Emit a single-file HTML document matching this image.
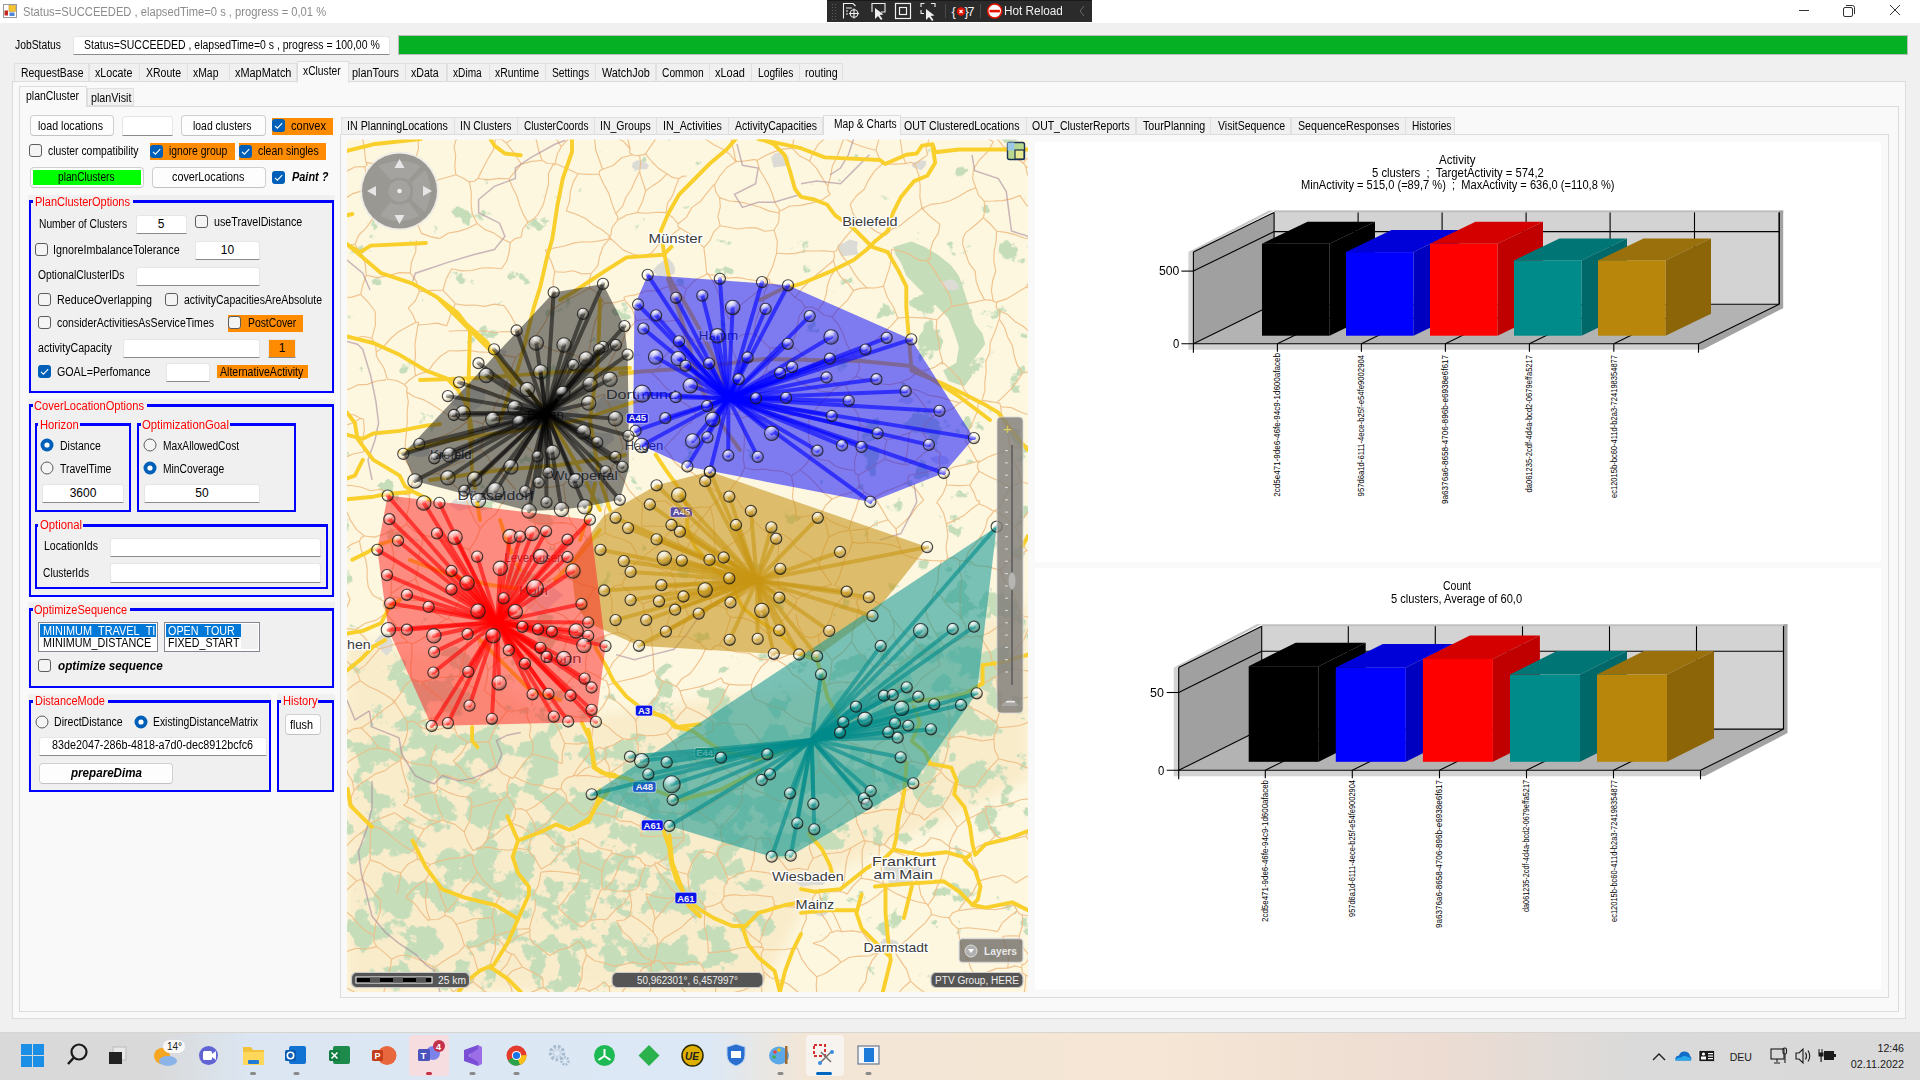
<!DOCTYPE html>
<html><head><meta charset="utf-8"><title>xCluster</title>
<style>
html,body{margin:0;padding:0;width:1920px;height:1080px;overflow:hidden;background:#f0f0f0;}
body{position:relative;font-family:"Liberation Sans",sans-serif;}
.t{position:absolute;white-space:pre;line-height:0;transform-origin:0 0;font-family:"Liberation Sans",sans-serif;}
</style></head><body>
<div style="position:absolute;left:0px;top:0px;width:1920px;height:23px;background:#fff"></div>
<svg style="position:absolute;left:3px;top:4px" width="14" height="14"><rect x="0.5" y="0.5" width="13" height="13" fill="#fff" stroke="#9a9a9a"/><rect x="6" y="1.5" width="6.5" height="6" fill="#f7c531" stroke="#c8961a" stroke-width="0.6"/><rect x="1.5" y="6.5" width="3.5" height="5" fill="#c0281e"/><rect x="6.5" y="8.5" width="5" height="3.5" fill="#4f86d8"/></svg>
<div class="t" style="left:23.00px;top:11.67px;font-size:12.5px;color:#8c8c8c;transform:scaleX(0.8943);">Status=SUCCEEDED , elapsedTime=0 s , progress = 0,01 %</div>
<div style="position:absolute;left:1799px;top:10px;width:10px;height:1px;background:#333"></div>
<svg style="position:absolute;left:1841px;top:3px" width="16" height="16"><rect x="2.5" y="4.5" width="9" height="9" rx="1.5" fill="none" stroke="#333"/><path d="M5 2.5 H11.5 Q13.5 2.5 13.5 4.5 V11" fill="none" stroke="#333"/></svg>
<svg style="position:absolute;left:1888px;top:3px" width="14" height="14"><path d="M2 2 L12 12 M12 2 L2 12" stroke="#333" stroke-width="1"/></svg>
<div style="position:absolute;left:827px;top:0px;width:265px;height:22px;background:#2b2b2b;border-top:1px solid #1a1a1a;box-sizing:border-box"></div>
<svg style="position:absolute;left:827px;top:0px" width="265" height="22"><g fill="#5a5a5a"><rect x="5" y="4" width="1" height="1"/><rect x="5" y="7" width="1" height="1"/><rect x="5" y="10" width="1" height="1"/><rect x="5" y="13" width="1" height="1"/><rect x="5" y="16" width="1" height="1"/><rect x="5" y="19" width="1" height="1"/><rect x="8" y="4" width="1" height="1"/><rect x="8" y="7" width="1" height="1"/><rect x="8" y="10" width="1" height="1"/><rect x="8" y="13" width="1" height="1"/><rect x="8" y="16" width="1" height="1"/><rect x="8" y="19" width="1" height="1"/></g><g stroke="#f0f0f0" fill="none" stroke-width="1.1"><path d="M16.5 18.5 V3.5 H26 L28.5 6"/><path d="M19 8 H25 M19 11 H21 M19 14 H21"/><circle cx="27" cy="13.5" r="3.8"/><path d="M27 8.5 V18.5 M22 13.5 H32"/></g><g stroke="#f0f0f0" fill="none" stroke-width="1.1"><path d="M45 12 V3.5 H58 V12 H54"/></g><path d="M48 8 L48 19 L51 16 L54 20 L55.5 19 L52.7 15 L56.5 14.5 Z" fill="#f0f0f0"/><g stroke="#f0f0f0" fill="none" stroke-width="1.2"><rect x="68.5" y="3.5" width="15" height="15"/><rect x="72.5" y="7.5" width="7" height="7"/></g><g stroke="#f0f0f0" fill="none" stroke-width="1.1"><path d="M94 7 V3.5 H97.5 M104 3.5 H108 V7 M94 10 V13.5 H97"/></g><path d="M99 9 L99 20 L102 17 L105 21 L106.5 20 L103.7 16 L107.5 15.5 Z" fill="#f0f0f0"/><rect x="118" y="4" width="1" height="14" fill="#4a4a4a"/><text x="124.5" y="16" font-family="Liberation Sans" font-size="13" fill="#f0f0f0">{</text><text x="137.5" y="16" font-family="Liberation Sans" font-size="13" fill="#f0f0f0">}</text><text x="140.5" y="16" font-family="Liberation Sans" font-size="12.5" fill="#f0f0f0">7</text><circle cx="134" cy="11.5" r="4.2" fill="#e51400"/><path d="M132.5 10 L135.5 13 M135.5 10 L132.5 13" stroke="#fff" stroke-width="1.1"/><rect x="153" y="4" width="1" height="14" fill="#4a4a4a"/><circle cx="167.7" cy="11" r="7" fill="#fff" stroke="#e51400" stroke-width="1.6"/><rect x="162.5" y="9.8" width="10.4" height="2.6" fill="#e51400"/><path d="M257 6 L253 11 L257 16" stroke="#6a6a6a" fill="none" stroke-width="1"/></svg>
<div class="t" style="left:1004.06px;top:10.97px;font-size:12.5px;color:#f0f0f0;transform:scaleX(0.9418);">Hot Reload</div>
<div style="position:absolute;left:0px;top:23px;width:1920px;height:1009px;background:#f0f0f0"></div>
<div class="t" style="left:15.00px;top:44.54px;font-size:12px;color:#000;transform:scaleX(0.8620);">JobStatus</div>
<div style="position:absolute;left:73px;top:36px;width:317px;height:19px;background:#fff;border:1px solid #e6e6e6;border-bottom:1px solid #8b8b8b;box-sizing:border-box;border-radius:3px 3px 0 0"></div>
<div class="t" style="left:84.00px;top:44.84px;font-size:12px;color:#000;transform:scaleX(0.8730);">Status=SUCCEEDED , elapsedTime=0 s , progress = 100,00 %</div>
<div style="position:absolute;left:398px;top:35px;width:1510px;height:20px;background:#06b025;border:1px solid #bcbcbc;box-sizing:border-box"></div>
<div style="position:absolute;left:12px;top:81px;width:1894px;height:938px;background:#f9f9f9;border:1px solid #dcdcdc;box-sizing:border-box"></div>
<div style="position:absolute;left:14px;top:63px;width:75px;height:19px;background:#f0f0f0;border:1px solid #e0e0e0;border-bottom:1px solid #dcdcdc;box-sizing:border-box"></div>
<div class="t" style="left:20.50px;top:72.84px;font-size:12px;color:#000;transform:scaleX(0.8677);">RequestBase</div>
<div style="position:absolute;left:89px;top:63px;width:51px;height:19px;background:#f0f0f0;border:1px solid #e0e0e0;border-bottom:1px solid #dcdcdc;box-sizing:border-box"></div>
<div class="t" style="left:95.30px;top:72.84px;font-size:12px;color:#000;transform:scaleX(0.8901);">xLocate</div>
<div style="position:absolute;left:139px;top:63px;width:49px;height:19px;background:#f0f0f0;border:1px solid #e0e0e0;border-bottom:1px solid #dcdcdc;box-sizing:border-box"></div>
<div class="t" style="left:145.60px;top:72.84px;font-size:12px;color:#000;transform:scaleX(0.8773);">XRoute</div>
<div style="position:absolute;left:187px;top:63px;width:43px;height:19px;background:#f0f0f0;border:1px solid #e0e0e0;border-bottom:1px solid #dcdcdc;box-sizing:border-box"></div>
<div class="t" style="left:193.30px;top:72.84px;font-size:12px;color:#000;transform:scaleX(0.8662);">xMap</div>
<div style="position:absolute;left:229px;top:63px;width:68px;height:19px;background:#f0f0f0;border:1px solid #e0e0e0;border-bottom:1px solid #dcdcdc;box-sizing:border-box"></div>
<div class="t" style="left:235.30px;top:72.84px;font-size:12px;color:#000;transform:scaleX(0.9096);">xMapMatch</div>
<div style="position:absolute;left:297px;top:61px;width:52px;height:22px;background:#f9f9f9;border:1px solid #dcdcdc;border-bottom:none;box-sizing:border-box"></div>
<div class="t" style="left:303.20px;top:70.94px;font-size:12px;color:#000;transform:scaleX(0.8543);">xCluster</div>
<div style="position:absolute;left:348px;top:63px;width:58px;height:19px;background:#f0f0f0;border:1px solid #e0e0e0;border-bottom:1px solid #dcdcdc;box-sizing:border-box"></div>
<div class="t" style="left:352.40px;top:72.84px;font-size:12px;color:#000;transform:scaleX(0.9033);">planTours</div>
<div style="position:absolute;left:405px;top:63px;width:42px;height:19px;background:#f0f0f0;border:1px solid #e0e0e0;border-bottom:1px solid #dcdcdc;box-sizing:border-box"></div>
<div class="t" style="left:411.00px;top:72.84px;font-size:12px;color:#000;transform:scaleX(0.8840);">xData</div>
<div style="position:absolute;left:447px;top:63px;width:43px;height:19px;background:#f0f0f0;border:1px solid #e0e0e0;border-bottom:1px solid #dcdcdc;box-sizing:border-box"></div>
<div class="t" style="left:453.00px;top:72.84px;font-size:12px;color:#000;transform:scaleX(0.8448);">xDima</div>
<div style="position:absolute;left:489px;top:63px;width:57px;height:19px;background:#f0f0f0;border:1px solid #e0e0e0;border-bottom:1px solid #dcdcdc;box-sizing:border-box"></div>
<div class="t" style="left:495.00px;top:72.84px;font-size:12px;color:#000;transform:scaleX(0.8685);">xRuntime</div>
<div style="position:absolute;left:545px;top:63px;width:51px;height:19px;background:#f0f0f0;border:1px solid #e0e0e0;border-bottom:1px solid #dcdcdc;box-sizing:border-box"></div>
<div class="t" style="left:552.00px;top:72.84px;font-size:12px;color:#000;transform:scaleX(0.8533);">Settings</div>
<div style="position:absolute;left:595px;top:63px;width:61px;height:19px;background:#f0f0f0;border:1px solid #e0e0e0;border-bottom:1px solid #dcdcdc;box-sizing:border-box"></div>
<div class="t" style="left:602.00px;top:72.84px;font-size:12px;color:#000;transform:scaleX(0.9016);">WatchJob</div>
<div style="position:absolute;left:656px;top:63px;width:54px;height:19px;background:#f0f0f0;border:1px solid #e0e0e0;border-bottom:1px solid #dcdcdc;box-sizing:border-box"></div>
<div class="t" style="left:662.00px;top:72.84px;font-size:12px;color:#000;transform:scaleX(0.8541);">Common</div>
<div style="position:absolute;left:709px;top:63px;width:43px;height:19px;background:#f0f0f0;border:1px solid #e0e0e0;border-bottom:1px solid #dcdcdc;box-sizing:border-box"></div>
<div class="t" style="left:715.00px;top:72.84px;font-size:12px;color:#000;transform:scaleX(0.9150);">xLoad</div>
<div style="position:absolute;left:751px;top:63px;width:49px;height:19px;background:#f0f0f0;border:1px solid #e0e0e0;border-bottom:1px solid #dcdcdc;box-sizing:border-box"></div>
<div class="t" style="left:758.00px;top:72.84px;font-size:12px;color:#000;transform:scaleX(0.8535);">Logfiles</div>
<div style="position:absolute;left:799px;top:63px;width:44px;height:19px;background:#f0f0f0;border:1px solid #e0e0e0;border-bottom:1px solid #dcdcdc;box-sizing:border-box"></div>
<div class="t" style="left:805.00px;top:72.84px;font-size:12px;color:#000;transform:scaleX(0.8940);">routing</div>
<div style="position:absolute;left:19px;top:106px;width:1880px;height:906px;background:#f9f9f9;border:1px solid #dcdcdc;box-sizing:border-box"></div>
<div style="position:absolute;left:87px;top:88px;width:47px;height:18px;background:#f0f0f0;border:1px solid #e0e0e0;box-sizing:border-box"></div>
<div class="t" style="left:90.50px;top:97.84px;font-size:12px;color:#000;transform:scaleX(0.8951);">planVisit</div>
<div style="position:absolute;left:19px;top:86px;width:68px;height:21px;background:#f9f9f9;border:1px solid #dcdcdc;border-bottom:none;box-sizing:border-box"></div>
<div class="t" style="left:26.40px;top:95.64px;font-size:12px;color:#000;transform:scaleX(0.8731);">planCluster</div>
<div style="position:absolute;left:30px;top:115px;width:84px;height:21px;background:#fdfdfd;border:1px solid #d0d0d0;border-bottom-color:#c2c2c2;box-sizing:border-box;border-radius:4px"></div>
<div class="t" style="left:38.30px;top:125.84px;font-size:12px;color:#000;transform:scaleX(0.8858);">load locations</div>
<div style="position:absolute;left:122px;top:116px;width:51px;height:20px;background:#fff;border:1px solid #e6e6e6;border-bottom:1px solid #8b8b8b;box-sizing:border-box;border-radius:3px 3px 0 0"></div>
<div style="position:absolute;left:181px;top:115px;width:85px;height:21px;background:#fdfdfd;border:1px solid #d0d0d0;border-bottom-color:#c2c2c2;box-sizing:border-box;border-radius:4px"></div>
<div class="t" style="left:192.50px;top:125.84px;font-size:12px;color:#000;transform:scaleX(0.8684);">load clusters</div>
<div style="position:absolute;left:272px;top:118px;width:61px;height:17px;background:#ff8c00"></div>
<div style="position:absolute;left:272px;top:119px;width:13px;height:13px;background:#005fb8;border-radius:3px"></div><svg style="position:absolute;left:272px;top:119px" width="13" height="13"><path d="M3 6.8 L5.4 9.2 L10.2 4.2" stroke="#fff" stroke-width="1.1" fill="none"/></svg>
<div class="t" style="left:290.60px;top:125.64px;font-size:12px;color:#000;transform:scaleX(0.9205);">convex</div>
<div style="position:absolute;left:29px;top:144px;width:13px;height:13px;background:#f4f4f4;border:1px solid #5c5c5c;box-sizing:border-box;border-radius:3px"></div>
<div class="t" style="left:47.50px;top:150.84px;font-size:12px;color:#000;transform:scaleX(0.8644);">cluster compatibility</div>
<div style="position:absolute;left:150px;top:143px;width:85px;height:17px;background:#ff8c00"></div>
<div style="position:absolute;left:150px;top:144.5px;width:13px;height:13px;background:#005fb8;border-radius:3px"></div><svg style="position:absolute;left:150px;top:144.5px" width="13" height="13"><path d="M3 6.8 L5.4 9.2 L10.2 4.2" stroke="#fff" stroke-width="1.1" fill="none"/></svg>
<div class="t" style="left:168.50px;top:150.84px;font-size:12px;color:#000;transform:scaleX(0.8640);">ignore group</div>
<div style="position:absolute;left:239px;top:143px;width:87px;height:17px;background:#ff8c00"></div>
<div style="position:absolute;left:239px;top:144.5px;width:13px;height:13px;background:#005fb8;border-radius:3px"></div><svg style="position:absolute;left:239px;top:144.5px" width="13" height="13"><path d="M3 6.8 L5.4 9.2 L10.2 4.2" stroke="#fff" stroke-width="1.1" fill="none"/></svg>
<div class="t" style="left:257.80px;top:150.84px;font-size:12px;color:#000;transform:scaleX(0.8750);">clean singles</div>
<div style="position:absolute;left:30px;top:167px;width:114px;height:21px;background:#fdfdfd;border:1px solid #d0d0d0;border-bottom-color:#c2c2c2;box-sizing:border-box;border-radius:4px"></div>
<div style="position:absolute;left:33px;top:170px;width:108px;height:15px;background:#00ff00"></div>
<div class="t" style="left:57.50px;top:176.84px;font-size:12px;color:#000;transform:scaleX(0.8471);">planClusters</div>
<div style="position:absolute;left:152px;top:167px;width:114px;height:21px;background:#fdfdfd;border:1px solid #d0d0d0;border-bottom-color:#c2c2c2;box-sizing:border-box;border-radius:4px"></div>
<div class="t" style="left:171.50px;top:177.34px;font-size:12px;color:#000;transform:scaleX(0.8982);">coverLocations</div>
<div style="position:absolute;left:272px;top:171px;width:13px;height:13px;background:#005fb8;border-radius:3px"></div><svg style="position:absolute;left:272px;top:171px" width="13" height="13"><path d="M3 6.8 L5.4 9.2 L10.2 4.2" stroke="#fff" stroke-width="1.1" fill="none"/></svg>
<div class="t" style="left:292.00px;top:177.34px;font-size:12px;color:#000;font-weight:bold;font-style:italic;transform:scaleX(0.9097);">Paint ?</div>
<div style="position:absolute;left:28px;top:195px;width:307px;height:198px;background:#f0f0f0"></div>
<div style="position:absolute;left:29px;top:200px;width:2px;height:193px;background:#0000ff"></div>
<div style="position:absolute;left:332px;top:200px;width:2px;height:193px;background:#0000ff"></div>
<div style="position:absolute;left:29px;top:391px;width:305px;height:2px;background:#0000ff"></div>
<div style="position:absolute;left:29px;top:200px;width:4px;height:3px;background:#0000ff"></div>
<div style="position:absolute;left:133px;top:200px;width:201px;height:3px;background:#0000ff"></div>
<div class="t" style="left:34.80px;top:201.54px;font-size:12px;color:#ff0000;transform:scaleX(0.9189);">PlanClusterOptions</div>
<div class="t" style="left:38.50px;top:223.84px;font-size:12px;color:#000;transform:scaleX(0.8514);">Number of Clusters</div>
<div style="position:absolute;left:136px;top:215px;width:51px;height:19px;background:#fff;border:1px solid #e6e6e6;border-bottom:1px solid #8b8b8b;box-sizing:border-box;border-radius:3px 3px 0 0"></div>
<div class="t" style="left:157.66px;top:223.84px;font-size:12px;color:#000;">5</div>
<div style="position:absolute;left:195px;top:215px;width:13px;height:13px;background:#f4f4f4;border:1px solid #5c5c5c;box-sizing:border-box;border-radius:3px"></div>
<div class="t" style="left:213.70px;top:221.84px;font-size:12px;color:#000;transform:scaleX(0.8926);">useTravelDistance</div>
<div style="position:absolute;left:35px;top:243px;width:13px;height:13px;background:#f4f4f4;border:1px solid #5c5c5c;box-sizing:border-box;border-radius:3px"></div>
<div class="t" style="left:53.40px;top:249.84px;font-size:12px;color:#000;transform:scaleX(0.8952);">IgnoreImbalanceTolerance</div>
<div style="position:absolute;left:195px;top:241px;width:65px;height:19px;background:#fff;border:1px solid #e6e6e6;border-bottom:1px solid #8b8b8b;box-sizing:border-box;border-radius:3px 3px 0 0"></div>
<div class="t" style="left:220.83px;top:249.84px;font-size:12px;color:#000;">10</div>
<div class="t" style="left:37.60px;top:275.24px;font-size:12px;color:#000;transform:scaleX(0.8580);">OptionalClusterIDs</div>
<div style="position:absolute;left:136px;top:267px;width:124px;height:19px;background:#fff;border:1px solid #e6e6e6;border-bottom:1px solid #8b8b8b;box-sizing:border-box;border-radius:3px 3px 0 0"></div>
<div style="position:absolute;left:38px;top:293px;width:13px;height:13px;background:#f4f4f4;border:1px solid #5c5c5c;box-sizing:border-box;border-radius:3px"></div>
<div class="t" style="left:57.00px;top:300.04px;font-size:12px;color:#000;transform:scaleX(0.8947);">ReduceOverlapping</div>
<div style="position:absolute;left:165px;top:293px;width:13px;height:13px;background:#f4f4f4;border:1px solid #5c5c5c;box-sizing:border-box;border-radius:3px"></div>
<div class="t" style="left:183.70px;top:299.84px;font-size:12px;color:#000;transform:scaleX(0.8731);">activityCapacitiesAreAbsolute</div>
<div style="position:absolute;left:38px;top:316px;width:13px;height:13px;background:#f4f4f4;border:1px solid #5c5c5c;box-sizing:border-box;border-radius:3px"></div>
<div class="t" style="left:57.00px;top:322.54px;font-size:12px;color:#000;transform:scaleX(0.8774);">considerActivitiesAsServiceTimes</div>
<div style="position:absolute;left:228px;top:315px;width:75px;height:17px;background:#ff8c00"></div>
<div style="position:absolute;left:228px;top:316px;width:13px;height:13px;background:#f4f4f4;border:1px solid #5c5c5c;box-sizing:border-box;border-radius:3px"></div>
<div class="t" style="left:247.50px;top:322.54px;font-size:12px;color:#000;transform:scaleX(0.8621);">PostCover</div>
<div class="t" style="left:37.50px;top:347.54px;font-size:12px;color:#000;transform:scaleX(0.8853);">activityCapacity</div>
<div style="position:absolute;left:123px;top:339px;width:137px;height:19px;background:#fff;border:1px solid #e6e6e6;border-bottom:1px solid #8b8b8b;box-sizing:border-box;border-radius:3px 3px 0 0"></div>
<div style="position:absolute;left:268px;top:339px;width:28px;height:19px;background:#ff8c00;border:1px solid #e6e6e6;border-bottom:1px solid #8b8b8b;box-sizing:border-box"></div>
<div class="t" style="left:278.66px;top:347.84px;font-size:12px;color:#000;">1</div>
<div style="position:absolute;left:38px;top:365px;width:13px;height:13px;background:#005fb8;border-radius:3px"></div><svg style="position:absolute;left:38px;top:365px" width="13" height="13"><path d="M3 6.8 L5.4 9.2 L10.2 4.2" stroke="#fff" stroke-width="1.1" fill="none"/></svg>
<div class="t" style="left:57.00px;top:371.64px;font-size:12px;color:#000;transform:scaleX(0.8901);">GOAL=Perfomance</div>
<div style="position:absolute;left:166px;top:363px;width:44px;height:19px;background:#fff;border:1px solid #e6e6e6;border-bottom:1px solid #8b8b8b;box-sizing:border-box;border-radius:3px 3px 0 0"></div>
<div style="position:absolute;left:217px;top:365px;width:91px;height:13px;background:#ff8c00"></div>
<div class="t" style="left:220.00px;top:371.64px;font-size:12px;color:#000;transform:scaleX(0.8796);">AlternativeActivity</div>
<div style="position:absolute;left:28px;top:399px;width:307px;height:198px;background:#f0f0f0"></div>
<div style="position:absolute;left:29px;top:404px;width:2px;height:193px;background:#0000ff"></div>
<div style="position:absolute;left:332px;top:404px;width:2px;height:193px;background:#0000ff"></div>
<div style="position:absolute;left:29px;top:595px;width:305px;height:2px;background:#0000ff"></div>
<div style="position:absolute;left:29px;top:404px;width:4px;height:3px;background:#0000ff"></div>
<div style="position:absolute;left:147px;top:404px;width:187px;height:3px;background:#0000ff"></div>
<div class="t" style="left:34.00px;top:405.54px;font-size:12px;color:#ff0000;transform:scaleX(0.9264);">CoverLocationOptions</div>
<div style="position:absolute;left:35px;top:423px;width:2px;height:89px;background:#0000ff"></div>
<div style="position:absolute;left:129px;top:423px;width:2px;height:89px;background:#0000ff"></div>
<div style="position:absolute;left:35px;top:510px;width:96px;height:2px;background:#0000ff"></div>
<div style="position:absolute;left:35px;top:423px;width:3px;height:3px;background:#0000ff"></div>
<div style="position:absolute;left:80px;top:423px;width:51px;height:3px;background:#0000ff"></div>
<div class="t" style="left:40.30px;top:424.54px;font-size:12px;color:#ff0000;transform:scaleX(0.9342);">Horizon</div>
<svg style="position:absolute;left:40px;top:438px" width="14" height="14"><circle cx="7" cy="7" r="6.5" fill="#005fb8"/><circle cx="7" cy="7" r="2.6" fill="#fff"/></svg>
<div class="t" style="left:60.30px;top:445.84px;font-size:12px;color:#000;transform:scaleX(0.8721);">Distance</div>
<svg style="position:absolute;left:40px;top:461px" width="14" height="14"><circle cx="7" cy="7" r="6" fill="#f4f4f4" stroke="#5c5c5c" stroke-width="1"/></svg>
<div class="t" style="left:60.30px;top:468.84px;font-size:12px;color:#000;transform:scaleX(0.8698);">TravelTime</div>
<div style="position:absolute;left:42px;top:484px;width:82px;height:19px;background:#fff;border:1px solid #e6e6e6;border-bottom:1px solid #8b8b8b;box-sizing:border-box;border-radius:3px 3px 0 0"></div>
<div class="t" style="left:69.65px;top:492.84px;font-size:12px;color:#000;">3600</div>
<div style="position:absolute;left:137px;top:423px;width:2px;height:89px;background:#0000ff"></div>
<div style="position:absolute;left:294px;top:423px;width:2px;height:89px;background:#0000ff"></div>
<div style="position:absolute;left:137px;top:510px;width:159px;height:2px;background:#0000ff"></div>
<div style="position:absolute;left:137px;top:423px;width:4px;height:3px;background:#0000ff"></div>
<div style="position:absolute;left:230px;top:423px;width:66px;height:3px;background:#0000ff"></div>
<div class="t" style="left:142.00px;top:424.54px;font-size:12px;color:#ff0000;transform:scaleX(0.9445);">OptimizationGoal</div>
<svg style="position:absolute;left:142.5px;top:438px" width="14" height="14"><circle cx="7" cy="7" r="6" fill="#f4f4f4" stroke="#5c5c5c" stroke-width="1"/></svg>
<div class="t" style="left:162.50px;top:445.84px;font-size:12px;color:#000;transform:scaleX(0.8519);">MaxAllowedCost</div>
<svg style="position:absolute;left:142.5px;top:461px" width="14" height="14"><circle cx="7" cy="7" r="6.5" fill="#005fb8"/><circle cx="7" cy="7" r="2.6" fill="#fff"/></svg>
<div class="t" style="left:162.50px;top:468.84px;font-size:12px;color:#000;transform:scaleX(0.8578);">MinCoverage</div>
<div style="position:absolute;left:144px;top:484px;width:116px;height:19px;background:#fff;border:1px solid #e6e6e6;border-bottom:1px solid #8b8b8b;box-sizing:border-box;border-radius:3px 3px 0 0"></div>
<div class="t" style="left:195.33px;top:492.84px;font-size:12px;color:#000;">50</div>
<div style="position:absolute;left:35px;top:524px;width:2px;height:65px;background:#0000ff"></div>
<div style="position:absolute;left:326px;top:524px;width:2px;height:65px;background:#0000ff"></div>
<div style="position:absolute;left:35px;top:587px;width:293px;height:2px;background:#0000ff"></div>
<div style="position:absolute;left:35px;top:524px;width:3px;height:3px;background:#0000ff"></div>
<div style="position:absolute;left:83px;top:524px;width:245px;height:3px;background:#0000ff"></div>
<div class="t" style="left:40.00px;top:524.54px;font-size:12px;color:#ff0000;transform:scaleX(0.9380);">Optional</div>
<div class="t" style="left:44.20px;top:546.34px;font-size:12px;color:#000;transform:scaleX(0.8798);">LocationIds</div>
<div style="position:absolute;left:110px;top:538px;width:211px;height:19px;background:#fff;border:1px solid #e6e6e6;border-bottom:1px solid #8b8b8b;box-sizing:border-box;border-radius:3px 3px 0 0"></div>
<div class="t" style="left:43.30px;top:572.54px;font-size:12px;color:#000;transform:scaleX(0.8516);">ClusterIds</div>
<div style="position:absolute;left:110px;top:563px;width:211px;height:20px;background:#fff;border:1px solid #e6e6e6;border-bottom:1px solid #8b8b8b;box-sizing:border-box;border-radius:3px 3px 0 0"></div>
<div style="position:absolute;left:28px;top:602px;width:307px;height:86px;background:#f0f0f0"></div>
<div style="position:absolute;left:29px;top:608px;width:2px;height:80px;background:#0000ff"></div>
<div style="position:absolute;left:332px;top:608px;width:2px;height:80px;background:#0000ff"></div>
<div style="position:absolute;left:29px;top:686px;width:305px;height:2px;background:#0000ff"></div>
<div style="position:absolute;left:29px;top:608px;width:4px;height:3px;background:#0000ff"></div>
<div style="position:absolute;left:130px;top:608px;width:204px;height:3px;background:#0000ff"></div>
<div class="t" style="left:34.20px;top:609.54px;font-size:12px;color:#ff0000;transform:scaleX(0.9173);">OptimizeSequence</div>
<div style="position:absolute;left:38px;top:622px;width:120px;height:30px;background:#fff;border:1px solid #828790;box-sizing:border-box"></div>
<div style="position:absolute;left:40px;top:624px;width:116px;height:13px;background:#0078d7"></div>
<div class="t" style="left:42.50px;top:630.54px;font-size:12px;color:#fff;transform:scaleX(0.9072);">MINIMUM_TRAVEL_TI</div>
<div class="t" style="left:42.50px;top:643.34px;font-size:12px;color:#000;transform:scaleX(0.8992);">MINIMUM_DISTANCE</div>
<div style="position:absolute;left:164px;top:622px;width:96px;height:30px;background:#fff;border:1px solid #828790;box-sizing:border-box"></div>
<div style="position:absolute;left:241px;top:624px;width:17px;height:25px;background:#f0f0f0"></div>
<div style="position:absolute;left:166px;top:624px;width:75px;height:13px;background:#0078d7"></div>
<div class="t" style="left:167.80px;top:630.54px;font-size:12px;color:#fff;transform:scaleX(0.8985);">OPEN_TOUR</div>
<div class="t" style="left:167.80px;top:643.34px;font-size:12px;color:#000;transform:scaleX(0.8899);">FIXED_START</div>
<div style="position:absolute;left:38px;top:659px;width:13px;height:13px;background:#f4f4f4;border:1px solid #5c5c5c;box-sizing:border-box;border-radius:3px"></div>
<div class="t" style="left:58.00px;top:665.54px;font-size:12px;color:#000;font-weight:bold;font-style:italic;transform:scaleX(0.9750);">optimize sequence</div>
<div style="position:absolute;left:28px;top:694px;width:243px;height:98px;background:#f0f0f0"></div>
<div style="position:absolute;left:29px;top:700px;width:2px;height:92px;background:#0000ff"></div>
<div style="position:absolute;left:269px;top:700px;width:2px;height:92px;background:#0000ff"></div>
<div style="position:absolute;left:29px;top:790px;width:242px;height:2px;background:#0000ff"></div>
<div style="position:absolute;left:29px;top:700px;width:4px;height:3px;background:#0000ff"></div>
<div style="position:absolute;left:108px;top:700px;width:163px;height:3px;background:#0000ff"></div>
<div class="t" style="left:34.50px;top:700.54px;font-size:12px;color:#ff0000;transform:scaleX(0.9113);">DistanceMode</div>
<svg style="position:absolute;left:35px;top:715px" width="14" height="14"><circle cx="7" cy="7" r="6" fill="#f4f4f4" stroke="#5c5c5c" stroke-width="1"/></svg>
<div class="t" style="left:54.20px;top:721.64px;font-size:12px;color:#000;transform:scaleX(0.8807);">DirectDistance</div>
<svg style="position:absolute;left:134px;top:715px" width="14" height="14"><circle cx="7" cy="7" r="6.5" fill="#005fb8"/><circle cx="7" cy="7" r="2.6" fill="#fff"/></svg>
<div class="t" style="left:153.30px;top:721.64px;font-size:12px;color:#000;transform:scaleX(0.8651);">ExistingDistanceMatrix</div>
<div style="position:absolute;left:39px;top:737px;width:228px;height:19px;background:#fff;border:1px solid #e6e6e6;border-bottom:1px solid #8b8b8b;box-sizing:border-box;border-radius:3px 3px 0 0"></div>
<div class="t" style="left:51.70px;top:745.04px;font-size:12px;color:#000;transform:scaleX(0.8966);">83de2047-286b-4818-a7d0-dec8912bcfc6</div>
<div style="position:absolute;left:39px;top:763px;width:134px;height:21px;background:#fdfdfd;border:1px solid #d0d0d0;border-bottom-color:#c2c2c2;box-sizing:border-box;border-radius:4px"></div>
<div class="t" style="left:70.67px;top:773.34px;font-size:12px;color:#000;font-weight:bold;font-style:italic;transform:scaleX(0.9680);">prepareDima</div>
<div style="position:absolute;left:277px;top:694px;width:58px;height:98px;background:#f0f0f0"></div>
<div style="position:absolute;left:277px;top:700px;width:2px;height:92px;background:#0000ff"></div>
<div style="position:absolute;left:332px;top:700px;width:2px;height:92px;background:#0000ff"></div>
<div style="position:absolute;left:277px;top:790px;width:57px;height:2px;background:#0000ff"></div>
<div style="position:absolute;left:277px;top:700px;width:4px;height:3px;background:#0000ff"></div>
<div style="position:absolute;left:318px;top:700px;width:16px;height:3px;background:#0000ff"></div>
<div class="t" style="left:282.50px;top:700.54px;font-size:12px;color:#ff0000;transform:scaleX(0.9240);">History</div>
<div style="position:absolute;left:285px;top:714px;width:36px;height:21px;background:#fdfdfd;border:1px solid #d0d0d0;border-bottom-color:#c2c2c2;box-sizing:border-box;border-radius:4px"></div>
<div class="t" style="left:289.70px;top:724.84px;font-size:12px;color:#000;transform:scaleX(0.9038);">flush</div>
<div style="position:absolute;left:340px;top:134px;width:1549px;height:864px;background:#f9f9f9;border:1px solid #dcdcdc;box-sizing:border-box"></div>
<div style="position:absolute;left:341px;top:117px;width:115px;height:18px;background:#f0f0f0;border:1px solid #e0e0e0;border-bottom:1px solid #dcdcdc;box-sizing:border-box"></div>
<div class="t" style="left:346.61px;top:125.84px;font-size:12px;color:#000;transform:scaleX(0.8896);">IN PlanningLocations</div>
<div style="position:absolute;left:454px;top:117px;width:64px;height:18px;background:#f0f0f0;border:1px solid #e0e0e0;border-bottom:1px solid #dcdcdc;box-sizing:border-box"></div>
<div class="t" style="left:459.83px;top:125.84px;font-size:12px;color:#000;transform:scaleX(0.8690);">IN Clusters</div>
<div style="position:absolute;left:517px;top:117px;width:78px;height:18px;background:#f0f0f0;border:1px solid #e0e0e0;border-bottom:1px solid #dcdcdc;box-sizing:border-box"></div>
<div class="t" style="left:523.50px;top:125.84px;font-size:12px;color:#000;transform:scaleX(0.8410);">ClusterCoords</div>
<div style="position:absolute;left:594px;top:117px;width:63px;height:18px;background:#f0f0f0;border:1px solid #e0e0e0;border-bottom:1px solid #dcdcdc;box-sizing:border-box"></div>
<div class="t" style="left:599.82px;top:125.84px;font-size:12px;color:#000;transform:scaleX(0.8768);">IN_Groups</div>
<div style="position:absolute;left:656px;top:117px;width:73px;height:18px;background:#f0f0f0;border:1px solid #e0e0e0;border-bottom:1px solid #dcdcdc;box-sizing:border-box"></div>
<div class="t" style="left:663.01px;top:125.84px;font-size:12px;color:#000;transform:scaleX(0.8921);">IN_Activities</div>
<div style="position:absolute;left:728px;top:117px;width:95px;height:18px;background:#f0f0f0;border:1px solid #e0e0e0;border-bottom:1px solid #dcdcdc;box-sizing:border-box"></div>
<div class="t" style="left:734.80px;top:125.84px;font-size:12px;color:#000;transform:scaleX(0.8721);">ActivityCapacities</div>
<div style="position:absolute;left:900px;top:117px;width:128px;height:18px;background:#f0f0f0;border:1px solid #e0e0e0;border-bottom:1px solid #dcdcdc;box-sizing:border-box"></div>
<div class="t" style="left:904.30px;top:125.84px;font-size:12px;color:#000;transform:scaleX(0.8806);">OUT ClusteredLocations</div>
<div style="position:absolute;left:1026px;top:117px;width:110px;height:18px;background:#f0f0f0;border:1px solid #e0e0e0;border-bottom:1px solid #dcdcdc;box-sizing:border-box"></div>
<div class="t" style="left:1032.30px;top:125.84px;font-size:12px;color:#000;transform:scaleX(0.8721);">OUT_ClusterReports</div>
<div style="position:absolute;left:1136px;top:117px;width:76px;height:18px;background:#f0f0f0;border:1px solid #e0e0e0;border-bottom:1px solid #dcdcdc;box-sizing:border-box"></div>
<div class="t" style="left:1143.30px;top:125.84px;font-size:12px;color:#000;transform:scaleX(0.8894);">TourPlanning</div>
<div style="position:absolute;left:1210px;top:117px;width:81px;height:18px;background:#f0f0f0;border:1px solid #e0e0e0;border-bottom:1px solid #dcdcdc;box-sizing:border-box"></div>
<div class="t" style="left:1217.70px;top:125.84px;font-size:12px;color:#000;transform:scaleX(0.8760);">VisitSequence</div>
<div style="position:absolute;left:1291px;top:117px;width:116px;height:18px;background:#f0f0f0;border:1px solid #e0e0e0;border-bottom:1px solid #dcdcdc;box-sizing:border-box"></div>
<div class="t" style="left:1297.70px;top:125.84px;font-size:12px;color:#000;transform:scaleX(0.8880);">SequenceResponses</div>
<div style="position:absolute;left:1405px;top:117px;width:50px;height:18px;background:#f0f0f0;border:1px solid #e0e0e0;border-bottom:1px solid #dcdcdc;box-sizing:border-box"></div>
<div class="t" style="left:1411.70px;top:125.84px;font-size:12px;color:#000;transform:scaleX(0.8420);">Histories</div>
<div style="position:absolute;left:823px;top:115px;width:78px;height:20px;background:#f9f9f9;border:1px solid #dcdcdc;border-bottom:none;box-sizing:border-box"></div>
<div class="t" style="left:834.00px;top:123.54px;font-size:12px;color:#000;transform:scaleX(0.8547);">Map &amp; Charts</div>
<svg style="position:absolute;left:0;top:0" width="1920" height="1080" viewBox="0 0 1920 1080"><defs><clipPath id="mc"><rect x="347" y="139.5" width="681" height="852.5"/></clipPath><radialGradient id="sph" cx="0.3" cy="0.2" r="0.95" fx="0.4" fy="0.12"><stop offset="0" stop-color="#fff" stop-opacity="0.95"/><stop offset="0.3" stop-color="#fff" stop-opacity="0.55"/><stop offset="0.5" stop-color="#fff" stop-opacity="0"/><stop offset="0.75" stop-color="#000" stop-opacity="0.2"/><stop offset="1" stop-color="#000" stop-opacity="0.55"/></radialGradient><filter id="blur2"><feGaussianBlur stdDeviation="6"/></filter></defs><g clip-path="url(#mc)"><rect x="347" y="139.5" width="681" height="852.5" fill="#fdf7e0"/><polygon points="347,640 450,660 560,720 700,700 800,690 900,660 1028,600 1028,780 900,840 820,880 760,992 347,992" fill="#f9eccb" filter="url(#blur2)"/><filter id="ff" x="347" y="139" width="681" height="853" filterUnits="userSpaceOnUse" color-interpolation-filters="sRGB"><feGaussianBlur in="SourceAlpha" stdDeviation="22" result="d"/><feTurbulence type="fractalNoise" baseFrequency="0.034" numOctaves="5" seed="11" result="n"/><feColorMatrix in="n" type="matrix" values="0 0 0 0 0  0 0 0 0 0  0 0 0 0 0  1 0 0 0 0" result="na"/><feComposite in="na" in2="d" operator="arithmetic" k1="0" k2="1" k3="0.3" k4="-0.38" result="s"/><feComponentTransfer in="s" result="th"><feFuncA type="linear" slope="20" intercept="-7"/></feComponentTransfer><feFlood flood-color="#c6ddba"/><feComposite in2="th" operator="in"/></filter><g filter="url(#ff)"><polygon points="347,650 420,670 470,700 520,730 620,730 700,700 800,690 900,640 1028,560 1028,800 960,830 900,800 840,850 780,880 740,940 700,992 347,992" fill="#000" fill-opacity="0.85"/><polygon points="870,250 1028,200 1028,560 940,600 880,520" fill="#000" fill-opacity="0.3"/><polygon points="347,430 400,470 380,560 347,580" fill="#000" fill-opacity="0.55"/><polygon points="420,560 600,560 600,720 420,700" fill="#000" fill-opacity="0.35"/><polygon points="840,870 1028,850 1028,992 830,992" fill="#000" fill-opacity="0.25"/></g><polygon points="893.1,246.9 911.5,241.6 924.7,246.9 937.8,254.8 951.0,265.3 958.9,275.8 964.2,291.6 969.4,307.4 974.7,323.2 982.6,333.7 985.2,344.3 977.3,354.8 969.4,365.3 972.1,375.8 964.2,386.4 948.4,381.1 943.1,370.6 956.3,362.7 958.9,346.9 953.6,331.1 948.4,317.9 937.8,307.4 927.3,296.9 916.8,286.4 906.3,275.8 901.0,262.7 895.7,254.8" fill="#c6ddba"/><g fill="#dcdbd6"><polygon points="675.2,268.0 674.6,273.8 667.0,275.9 658.5,276.1 652.6,271.2 656.6,265.8 660.7,262.7 667.6,257.6 673.0,263.2"/><polygon points="856.7,248.0 858.5,254.6 849.8,255.6 841.6,256.3 838.3,250.7 837.3,245.1 843.9,242.7 850.0,239.6 857.9,241.8"/><polygon points="713.0,348.0 711.9,352.5 706.5,354.7 702.1,351.9 696.4,350.4 697.2,345.8 701.6,343.4 706.0,343.7 712.4,343.2"/><polygon points="633.9,405.0 631.8,412.7 619.1,417.8 604.1,415.3 592.1,409.5 598.1,401.6 603.6,394.2 618.2,395.0 633.8,396.4"/><polygon points="588.8,420.0 562.5,429.2 545.3,434.6 523.8,433.7 492.2,428.5 504.5,413.7 518.7,402.0 546.0,403.4 570.3,407.6"/><polygon points="484.6,400.0 480.9,406.1 472.9,410.9 461.7,409.6 451.4,404.5 453.5,396.0 460.0,388.5 473.3,387.3 485.8,391.2"/><polygon points="614.5,440.0 607.9,444.4 602.8,450.6 591.5,449.8 584.5,443.8 587.1,436.9 592.6,431.4 601.9,432.9 612.2,433.2"/><polygon points="488.3,500.0 481.6,505.8 472.2,507.5 459.3,511.1 448.5,504.7 457.8,497.3 459.6,489.2 472.9,490.2 480.5,494.7"/><polygon points="597.2,480.0 597.5,485.9 588.0,489.6 580.0,484.9 570.9,482.9 575.6,478.1 577.0,472.2 587.2,473.1 598.3,473.7"/><polygon points="563.5,595.0 551.8,605.2 540.0,615.4 525.4,607.0 519.9,599.0 513.2,589.3 527.3,585.4 538.1,582.4 550.8,585.5"/><polygon points="576.2,662.0 571.3,666.4 566.3,668.1 558.5,671.3 556.3,664.6 552.3,658.1 558.4,652.5 566.7,654.0 572.8,656.5"/><polygon points="430.6,450.0 428.8,454.9 421.9,457.3 414.6,456.3 409.4,452.6 407.4,446.9 414.7,443.9 421.7,443.4 429.2,444.9"/><polygon points="525.2,560.0 523.2,563.9 517.8,569.0 508.8,566.1 503.1,562.5 507.0,558.3 509.2,554.3 517.2,552.8 521.6,556.9"/><polygon points="826.9,880.0 823.1,884.9 812.0,885.0 801.5,886.5 795.5,882.3 793.5,877.3 802.9,874.5 813.1,872.2 823.9,874.8"/><polygon points="922.1,870.0 918.6,875.7 909.7,883.4 889.2,883.7 885.6,873.5 882.6,865.9 892.0,858.8 908.8,859.3 922.2,862.8"/><polygon points="829.3,910.0 827.4,913.6 821.9,916.4 815.4,914.6 810.9,911.9 808.4,907.5 816.3,906.3 821.9,903.7 829.2,905.5"/><polygon points="899.2,945.0 896.6,948.7 892.2,953.2 885.6,950.1 882.1,946.9 880.5,942.7 884.1,938.2 891.4,939.8 897.1,941.0"/><polygon points="789.4,160.0 789.7,165.4 781.8,166.6 773.6,167.4 772.2,161.9 771.1,157.9 774.3,153.4 782.3,151.4 787.8,155.6"/><polygon points="925.8,165.0 924.1,167.6 921.2,170.3 917.2,168.7 912.2,167.1 912.0,162.8 917.2,161.4 921.0,160.5 926.4,161.0"/><polygon points="949.5,460.0 948.0,464.0 941.4,464.7 936.6,463.5 932.9,461.6 930.3,457.9 936.3,456.1 941.4,455.3 946.4,456.8"/><polygon points="393.3,645.0 391.3,650.3 386.9,655.9 381.6,650.9 379.3,647.1 374.5,641.2 379.6,635.6 387.0,633.7 391.4,639.6"/><polygon points="649.0,165.0 646.8,169.3 641.0,169.3 636.0,170.2 632.0,167.2 632.7,163.0 636.5,160.4 641.1,160.5 644.8,162.0"/><polygon points="505.8,355.0 503.9,357.5 501.3,360.5 497.0,358.9 492.1,357.1 495.3,353.7 495.6,349.3 501.4,349.2 506.8,350.7"/><polygon points="913.7,400.0 911.7,403.5 906.3,404.5 902.6,402.6 897.4,401.7 899.8,398.8 901.9,396.7 906.3,395.3 910.4,397.1"/><polygon points="958.3,285.0 958.6,289.3 951.6,290.5 946.1,289.1 943.1,286.5 939.9,282.8 945.7,280.5 951.8,278.9 956.1,281.9"/><polygon points="725.7,580.0 725.5,583.4 721.5,586.2 717.2,583.6 712.2,582.1 711.7,577.7 715.8,574.6 721.5,573.8 723.7,577.7"/><polygon points="681.5,780.0 680.2,784.8 673.1,784.3 668.3,784.5 665.0,781.8 663.6,777.9 667.8,775.0 673.5,774.1 679.9,775.4"/></g><g fill="none" stroke="#eebd84" stroke-width="1.15" stroke-opacity="0.9" stroke-linejoin="round"><polyline points="306.3,113.4 313.9,121.5 320.0,130.9"/><polyline points="320.0,130.9 307.3,132.9 294.6,135.6"/><polyline points="322.0,92.3 328.3,102.2 337.5,109.5"/><polyline points="322.0,92.3 313.2,102.2 306.3,113.4"/><polyline points="337.5,109.5 342.3,120.8 348.5,131.5"/><polyline points="320.0,130.9 324.1,132.8 328.0,135.0"/><polyline points="348.5,131.5 338.4,134.3 328.0,135.0"/><polyline points="1037.2,1018.0 1037.0,1014.9 1039.3,1012.8"/><polyline points="1039.3,1012.8 1050.0,1006.2 1061.1,1000.1"/><polyline points="1020.4,1003.6 1030.1,1007.6 1039.3,1012.8"/><polyline points="1020.4,1003.6 1024.2,994.5 1025.2,984.8 1025.8,975.1"/><polyline points="1061.1,1000.1 1053.5,992.1 1045.3,985.0 1035.8,979.7 1025.8,975.1"/><polyline points="1055.1,842.3 1058.3,833.2 1064.8,826.2"/><polyline points="1081.1,894.4 1072.5,888.2 1063.4,882.7 1054.7,876.4 1045.5,871.1"/><polyline points="1055.1,842.3 1047.9,847.7 1041.4,853.9"/><polyline points="1045.5,871.1 1041.3,863.0 1041.4,853.9"/><polyline points="530.0,120.3 520.9,111.0 509.7,104.3"/><polyline points="530.0,120.3 538.8,115.6 548.3,113.0"/><polyline points="548.3,113.0 553.7,105.5 558.9,97.8 563.7,89.8 571.6,84.3"/><polyline points="344.3,549.9 341.3,563.1 341.2,576.7"/><polyline points="341.2,576.7 330.4,583.9 320.7,592.4"/><polyline points="1070.3,733.3 1063.8,740.4 1055.9,745.7 1047.6,750.4 1040.7,757.0"/><polyline points="1053.3,814.1 1060.0,819.3 1064.8,826.2"/><polyline points="1053.3,814.1 1060.9,807.8 1065.9,799.3"/><polyline points="985.7,1012.6 996.4,1010.2 1007.4,1009.9"/><polyline points="1007.4,1009.9 1017.5,1016.9 1025.7,1026.1"/><polyline points="969.9,995.4 959.4,1000.2 948.4,1003.8 937.3,1007.0"/><polyline points="969.9,995.4 978.6,1003.3 985.7,1012.6"/><polyline points="927.5,1032.5 929.7,1023.6 933.5,1015.3 937.3,1007.0"/><polyline points="1020.4,1003.6 1013.2,1005.4 1007.4,1009.9"/><polyline points="1081.1,894.4 1072.9,902.4 1063.6,909.4 1056.9,918.9"/><polyline points="1053.7,935.0 1059.3,943.5 1064.8,952.1 1071.8,959.6 1075.5,969.3"/><polyline points="1056.9,918.9 1045.3,918.5 1033.8,916.8 1022.4,914.8"/><polyline points="1045.5,871.1 1035.0,873.5 1025.0,877.2 1015.9,883.1"/><polyline points="1022.4,914.8 1019.2,913.7 1017.1,911.0"/><polyline points="1017.1,911.0 1015.7,907.6 1013.4,904.7"/><polyline points="1035.0,769.3 1034.4,770.1 1033.5,770.4"/><polyline points="1065.9,799.3 1056.8,794.6 1049.0,788.0 1040.2,783.0 1033.7,774.8"/><polyline points="1033.7,774.8 1034.7,772.5 1033.5,770.4"/><polyline points="1010.6,118.6 1018.6,123.0 1027.0,126.3 1035.5,129.3 1044.2,131.8 1053.1,133.4"/><polyline points="1084.6,140.5 1074.3,137.2 1063.4,136.9 1053.1,133.4"/><polyline points="1025.8,167.4 1035.4,165.2 1044.3,161.7 1053.1,158.1 1060.9,152.0 1069.4,147.7 1077.8,143.2"/><polyline points="1025.8,167.4 1025.0,165.0 1023.2,163.1"/><polyline points="1023.2,163.1 1026.1,159.1 1030.9,158.0"/><polyline points="1077.8,143.2 1068.5,146.2 1059.0,148.8 1050.0,153.1 1040.5,155.5 1030.9,158.0"/><polyline points="1030.9,179.5 1027.3,173.9 1025.8,167.4"/><polyline points="997.0,138.5 999.3,134.0 1000.7,129.2"/><polyline points="997.0,138.5 1002.6,145.6 1009.6,151.3 1015.7,158.0 1023.2,163.1"/><polyline points="1010.6,118.6 1004.3,122.6 1000.7,129.2"/><polyline points="1053.1,133.4 1046.3,142.2 1037.6,149.2 1030.9,158.0"/><polyline points="384.2,997.2 382.2,996.9 383.3,995.1"/><polyline points="383.3,995.1 372.1,994.6 361.7,998.3"/><polyline points="361.7,998.3 355.6,1001.9 350.8,1007.0"/><polyline points="318.7,1007.5 329.4,1009.3 340.1,1006.4 350.8,1007.0"/><polyline points="477.8,1017.6 470.5,1008.2 463.1,998.8 453.1,992.0"/><polyline points="477.8,1017.6 468.6,1020.7 460.5,1026.3 451.8,1030.5 442.7,1033.8 433.8,1037.6"/><polyline points="453.1,992.0 447.3,999.9 440.9,1007.3 436.7,1016.2 430.5,1023.8"/><polyline points="433.8,1037.6 430.1,1031.2 430.5,1023.8"/><polyline points="286.1,206.2 294.1,199.8 301.3,192.4 308.6,185.2 317.5,180.0 326.3,174.6"/><polyline points="326.3,174.6 322.6,161.6 315.7,150.0"/><polyline points="311.4,151.1 313.9,151.9 315.7,150.0"/><polyline points="311.9,218.1 302.6,215.7 294.2,211.3 286.1,206.2"/><polyline points="311.9,218.1 317.2,222.7 321.5,228.2"/><polyline points="304.3,277.7 308.4,268.0 312.7,258.4 314.4,247.9 317.3,237.9 321.5,228.2"/><polyline points="294.6,135.6 303.1,143.3 311.4,151.1"/><polyline points="328.0,135.0 320.5,141.4 315.7,150.0"/><polyline points="311.9,218.1 319.6,212.7 327.1,206.8 336.7,204.8 344.2,199.0 352.1,193.9 361.2,191.1 369.3,186.4"/><polyline points="326.3,174.6 335.7,171.6 345.8,171.6 354.9,167.0 364.9,166.6"/><polyline points="364.9,166.6 366.2,176.7 369.3,186.4"/><polyline points="344.3,549.9 351.3,544.4 359.5,541.0"/><polyline points="341.2,576.7 345.3,588.3 350.2,599.5"/><polyline points="359.5,541.0 361.3,550.2 365.5,558.8 367.1,568.1 367.1,577.8 368.3,587.2 373.2,595.6"/><polyline points="424.1,600.4 412.4,600.4 401.0,597.9 389.4,596.7"/><polyline points="424.1,600.4 420.0,589.5 415.6,578.8"/><polyline points="415.6,578.8 406.8,582.8 398.9,588.2 390.9,593.4"/><polyline points="389.4,596.7 391.2,595.5 390.9,593.4"/><polyline points="392.7,530.5 390.6,540.9 393.2,551.5 394.2,562.0 391.7,572.4 391.5,582.9 390.9,593.4"/><polyline points="392.7,530.5 383.6,534.3 374.3,537.1 364.3,536.0"/><polyline points="359.5,541.0 361.1,537.7 364.3,536.0"/><polyline points="373.2,595.6 378.8,598.5 384.3,601.5"/><polyline points="384.3,601.5 388.1,600.5 389.4,596.7"/><polyline points="392.7,530.5 400.2,528.3 406.9,524.3"/><polyline points="415.6,578.8 417.9,567.9 418.3,556.7 421.8,546.0 422.7,534.9"/><polyline points="406.9,524.3 413.9,530.9 422.7,534.9"/><polyline points="323.3,479.0 332.5,482.7 342.0,485.1 351.8,485.5 361.4,487.3 370.6,490.7 380.8,489.2 390.0,493.0 399.8,493.5 409.4,495.2"/><polyline points="323.3,479.0 329.1,487.1 336.3,494.4 342.9,501.9 346.7,511.6 350.9,520.9 356.3,529.4 364.3,536.0"/><polyline points="406.9,524.3 406.8,514.5 409.3,505.0 409.4,495.2"/><polyline points="997.6,727.8 1008.8,726.9 1019.9,725.5 1030.4,721.3"/><polyline points="997.6,727.8 994.9,733.3 993.8,739.3"/><polyline points="993.8,739.3 994.6,749.5 998.8,758.7"/><polyline points="1040.7,757.0 1038.3,748.1 1034.2,739.8 1031.1,731.1 1030.9,721.6"/><polyline points="998.8,758.7 1007.6,761.1 1016.7,762.8 1025.0,767.0 1033.5,770.4"/><polyline points="1030.4,721.3 1031.8,719.8 1030.9,721.6"/><polyline points="1066.6,728.2 1061.2,725.6 1055.7,723.4"/><polyline points="1030.9,721.6 1043.4,720.6 1055.7,723.4"/><polyline points="1030.4,721.3 1033.8,708.3 1035.1,695.0"/><polyline points="1055.7,723.4 1052.6,712.9 1047.8,702.8 1047.3,691.4 1043.7,681.0"/><polyline points="1035.1,695.0 1039.7,688.2 1043.7,681.0"/><polyline points="997.6,727.8 997.8,725.0 996.1,722.8"/><polyline points="996.1,722.8 999.5,712.7 1000.8,702.1"/><polyline points="1035.1,695.0 1023.8,698.2 1012.2,699.6 1000.8,702.1"/><polyline points="698.2,1047.2 704.9,1040.9 712.8,1036.0 719.6,1029.7 728.6,1026.3 735.7,1020.3 742.5,1014.0 749.7,1008.3"/><polyline points="790.7,1044.1 783.4,1037.8 778.1,1030.0 774.2,1021.2 767.3,1014.6 762.5,1006.4"/><polyline points="762.5,1006.4 756.1,1006.8 749.7,1008.3"/><polyline points="927.5,1032.5 917.9,1030.1 908.1,1028.0 898.6,1024.8 888.9,1022.8"/><polyline points="860.1,1034.6 869.7,1030.6 879.9,1028.1 888.9,1022.8"/><polyline points="910.5,981.2 902.2,988.6 895.7,997.7 888.0,1005.8"/><polyline points="910.5,981.2 917.3,987.5 925.1,992.9 929.9,1001.3 937.3,1007.0"/><polyline points="888.9,1022.8 886.8,1014.4 888.0,1005.8"/><polyline points="1053.7,935.0 1046.6,943.2 1038.0,949.5 1028.9,955.1"/><polyline points="1022.4,914.8 1022.5,925.7 1019.1,936.0"/><polyline points="1019.1,936.0 1022.2,946.5 1028.9,955.1"/><polyline points="1028.9,955.1 1028.0,960.0 1025.0,964.0"/><polyline points="1025.8,975.1 1022.1,972.5 1021.8,967.8"/><polyline points="1021.8,967.8 1021.8,964.6 1025.0,964.0"/><polyline points="978.4,881.1 973.1,891.9 965.1,900.9 958.2,910.7"/><polyline points="978.4,881.1 977.8,871.2 972.5,862.6 970.3,853.2"/><polyline points="970.3,853.2 960.3,849.4 949.8,847.9"/><polyline points="949.8,847.9 948.1,858.3 943.9,867.7 941.3,877.7 936.9,887.0 933.9,896.8 927.8,905.5"/><polyline points="931.5,914.3 930.7,909.5 927.8,905.5"/><polyline points="931.5,914.3 940.2,916.7 949.1,917.9"/><polyline points="949.1,917.9 952.5,912.9 958.2,910.7"/><polyline points="1013.4,904.7 1004.4,907.9 995.3,909.8 985.9,908.9 976.6,908.5 967.4,909.4 958.2,910.7"/><polyline points="1003.3,875.2 1009.9,878.6 1015.9,883.1"/><polyline points="1003.3,875.2 990.7,877.6 978.4,881.1"/><polyline points="926.0,903.7 927.5,904.0 927.8,905.5"/><polyline points="926.0,903.7 920.8,894.7 918.8,884.5 913.4,875.6 911.8,865.2 906.8,856.2"/><polyline points="948.7,846.2 949.8,846.8 949.8,847.9"/><polyline points="948.7,846.2 940.8,840.1 931.2,837.5"/><polyline points="931.2,837.5 924.2,845.3 914.7,849.6 906.8,856.2"/><polyline points="864.4,840.2 864.6,841.0 865.5,840.9"/><polyline points="864.4,840.2 860.8,831.3 856.8,822.5 855.5,812.9"/><polyline points="910.6,813.8 905.2,822.5 898.9,830.5 890.1,836.4 884.2,844.8"/><polyline points="910.6,813.8 906.0,811.5 904.5,806.6"/><polyline points="884.2,844.8 881.8,844.6 879.5,845.1"/><polyline points="879.5,845.1 872.7,842.3 865.5,840.9"/><polyline points="904.5,806.6 895.0,809.9 884.9,809.4 875.2,811.6 865.5,813.6 855.5,812.9"/><polyline points="910.6,813.8 911.5,813.1 912.1,814.0"/><polyline points="906.8,856.2 894.8,852.0 884.2,844.8"/><polyline points="924.6,820.0 919.1,815.3 912.1,814.0"/><polyline points="948.7,846.2 952.3,836.4 957.4,827.4"/><polyline points="957.4,827.4 950.3,816.8 942.5,806.8"/><polyline points="924.6,820.0 932.8,812.4 942.5,806.8"/><polyline points="1035.8,813.3 1032.3,825.3 1025.8,836.0"/><polyline points="1035.8,813.3 1032.7,806.0 1029.6,798.7"/><polyline points="1029.6,798.7 1020.5,799.7 1011.9,803.2 1003.0,805.4 994.1,807.0 984.7,806.2"/><polyline points="1025.8,836.0 1013.9,838.9 1001.6,838.4"/><polyline points="1001.6,838.4 998.7,837.2 996.0,835.4"/><polyline points="996.0,835.4 990.4,827.9 987.5,819.1 984.7,810.3"/><polyline points="984.7,810.3 986.9,808.2 984.7,806.2"/><polyline points="1053.3,814.1 1044.5,815.2 1035.8,813.3"/><polyline points="1041.4,853.9 1032.9,845.5 1025.8,836.0"/><polyline points="1033.7,774.8 1031.0,786.7 1029.6,798.7"/><polyline points="998.8,758.7 992.3,765.3 986.3,772.1 980.7,779.4 975.6,787.0"/><polyline points="970.3,853.2 978.2,846.4 988.3,842.6 996.0,835.4"/><polyline points="957.4,827.4 965.5,820.1 975.3,815.4 984.7,810.3"/><polyline points="975.6,787.0 964.9,786.0 954.3,783.5"/><polyline points="942.5,806.8 949.5,795.7 954.3,783.5"/><polyline points="1040.3,221.9 1035.1,211.8 1026.2,204.7 1020.0,195.4"/><polyline points="1000.7,129.2 992.0,122.7 982.3,117.7 974.5,109.8 965.0,104.5"/><polyline points="965.0,104.5 962.5,100.5 961.1,96.0"/><polyline points="1037.8,252.2 1047.2,251.4 1056.5,250.7 1065.9,250.1 1075.3,253.3 1084.7,252.1"/><polyline points="1033.3,238.8 1036.4,230.2 1040.3,221.9"/><polyline points="291.4,708.3 297.3,701.0 301.0,692.3 307.8,685.7 313.4,678.2 319.2,670.9 323.8,662.8"/><polyline points="350.2,599.5 345.9,609.2 338.5,617.0 333.6,626.3"/><polyline points="320.7,592.4 323.8,603.8 326.3,615.3 332.2,625.7"/><polyline points="332.2,625.7 333.3,625.0 333.6,626.3"/><polyline points="338.7,752.7 341.9,741.5 348.4,731.8"/><polyline points="338.7,752.7 340.4,759.3 344.9,764.4"/><polyline points="344.9,764.4 352.7,758.8 360.9,753.8 369.2,749.2 379.1,747.9"/><polyline points="348.4,731.8 354.5,728.6 361.3,727.9"/><polyline points="379.1,747.9 370.7,737.5 361.3,727.9"/><polyline points="344.9,764.4 347.7,773.2 352.4,781.3 354.1,790.5"/><polyline points="354.1,790.5 351.2,797.1 351.8,804.3"/><polyline points="501.4,1036.2 501.8,1032.1 504.7,1029.2"/><polyline points="504.7,1029.2 513.4,1026.3 522.0,1022.9 530.6,1019.7 539.8,1018.2"/><polyline points="539.8,1018.2 540.8,1025.0 545.5,1030.0"/><polyline points="569.7,1010.6 561.5,1016.9 552.3,1022.0 545.5,1030.0"/><polyline points="477.8,1017.6 479.6,1018.7 481.4,1019.6"/><polyline points="481.4,1019.6 492.0,1027.2 501.4,1036.2"/><polyline points="569.7,1010.6 568.9,1004.4 565.5,999.2"/><polyline points="539.8,1018.2 545.4,1006.0 550.7,993.6"/><polyline points="565.5,999.2 558.9,994.4 550.7,993.6"/><polyline points="504.7,1029.2 506.0,1019.8 509.7,1010.9 511.4,1001.5"/><polyline points="543.2,987.5 547.2,990.2 550.7,993.6"/><polyline points="543.2,987.5 533.4,991.4 523.5,994.9 513.6,998.5"/><polyline points="513.6,998.5 513.8,1001.0 511.4,1001.5"/><polyline points="481.4,1019.6 482.2,1010.2 485.7,1001.3 485.2,991.7"/><polyline points="511.4,1001.5 502.7,998.0 494.0,994.8 485.2,991.7"/><polyline points="364.9,166.6 367.3,164.9 365.9,162.4"/><polyline points="362.5,137.5 364.5,149.9 365.9,162.4"/><polyline points="571.6,84.3 578.6,90.7 581.5,100.1 586.6,107.9 593.2,114.6"/><polyline points="593.2,114.6 603.1,113.5 613.2,114.4 622.8,111.2"/><polyline points="630.1,149.0 628.0,140.0 625.7,131.0 625.4,121.7 623.9,112.6"/><polyline points="630.1,149.0 623.7,141.6 615.0,136.8 609.0,128.9 600.7,123.6 592.8,117.9"/><polyline points="593.2,114.6 593.1,116.3 592.8,117.9"/><polyline points="1044.8,678.3 1042.2,676.2 1043.8,673.3"/><polyline points="1044.8,678.3 1051.9,685.3 1061.7,688.6 1069.0,695.3"/><polyline points="1044.7,671.3 1042.9,671.7 1043.8,673.3"/><polyline points="1066.6,728.2 1067.5,717.2 1069.7,706.4 1069.0,695.3"/><polyline points="1043.7,681.0 1046.2,680.5 1044.8,678.3"/><polyline points="1050.2,642.5 1048.6,644.7 1046.2,643.4"/><polyline points="1046.2,643.4 1046.9,652.8 1045.3,662.0 1044.7,671.3"/><polyline points="864.4,840.2 857.6,844.1 850.9,848.0"/><polyline points="850.9,848.0 841.9,852.3 832.1,853.2 822.2,854.4 813.2,858.5"/><polyline points="855.5,812.9 853.3,806.6 848.6,802.0"/><polyline points="848.6,802.0 841.4,808.8 833.7,814.7 825.7,820.2 817.5,825.5 807.3,827.5"/><polyline points="813.2,858.5 809.3,848.5 810.4,837.6 807.3,827.5"/><polyline points="649.8,992.1 642.3,998.0 635.2,1004.4 627.9,1010.5 621.8,1018.1 612.9,1022.4"/><polyline points="698.2,1047.2 701.0,1034.1 702.0,1020.7"/><polyline points="662.9,963.5 668.8,971.4 674.3,979.7 681.1,987.0 687.4,994.7 690.7,1004.4 696.7,1012.3 702.0,1020.7"/><polyline points="662.9,963.5 659.0,960.4 654.2,960.9"/><polyline points="654.2,960.9 654.5,962.8 652.9,961.6"/><polyline points="651.3,964.6 651.0,973.8 652.4,983.1 649.8,992.1"/><polyline points="651.3,964.6 650.4,963.3 652.0,962.8"/><polyline points="652.0,962.8 653.8,963.4 652.9,961.6"/><polyline points="700.1,962.9 690.8,961.4 681.5,964.6 672.2,962.9 662.9,963.5"/><polyline points="700.1,962.9 704.5,971.0 709.7,978.5 715.7,985.6"/><polyline points="702.0,1020.7 704.7,1011.1 711.0,1003.4 715.8,994.9"/><polyline points="715.8,994.9 715.6,990.2 715.7,985.6"/><polyline points="749.7,1008.3 741.9,1002.2 733.5,997.2 723.4,996.1"/><polyline points="715.8,994.9 719.2,997.5 723.4,996.1"/><polyline points="762.5,1006.4 762.1,995.7 761.4,985.0"/><polyline points="723.4,996.1 732.7,992.8 742.4,990.5 751.5,986.4 761.4,985.0"/><polyline points="720.8,901.9 725.8,910.0 734.4,914.7 739.9,922.3 745.7,929.6 752.0,936.5 759.6,942.1"/><polyline points="720.8,901.9 713.6,905.4 705.7,907.2"/><polyline points="705.7,907.2 704.9,907.1 705.5,907.6"/><polyline points="705.5,907.6 704.5,916.8 704.4,925.8 706.7,934.7 707.9,943.7 708.4,952.8"/><polyline points="708.4,952.8 719.0,951.9 729.5,950.6 739.8,948.0 750.4,946.7 761.0,947.1"/><polyline points="761.0,947.1 762.1,944.1 759.6,942.1"/><polyline points="654.2,960.9 656.4,953.7 657.2,946.2"/><polyline points="657.2,946.2 664.0,938.1 672.9,932.8 681.6,927.2 689.0,920.0 697.1,913.7 705.5,907.6"/><polyline points="910.5,981.2 906.7,969.9 900.2,960.1 893.7,950.3"/><polyline points="893.7,950.3 886.9,951.0 880.1,950.6"/><polyline points="880.1,950.6 879.0,951.2 878.4,952.3"/><polyline points="888.0,1005.8 877.1,1005.1 866.4,1003.2 855.9,1000.2"/><polyline points="878.4,952.3 871.9,960.9 867.5,970.6 865.7,981.4 859.5,990.2 855.9,1000.2"/><polyline points="860.1,1034.6 857.8,1023.6 857.2,1012.3 855.1,1001.2"/><polyline points="855.9,1000.2 854.5,999.9 855.1,1001.2"/><polyline points="850.9,848.0 846.9,858.6 845.2,869.7 844.2,881.1 840.4,891.7"/><polyline points="807.8,869.7 809.9,863.8 813.2,858.5"/><polyline points="840.4,891.7 829.5,891.7 818.9,889.1"/><polyline points="768.7,659.9 761.2,666.9 755.7,675.3 751.5,684.7"/><polyline points="768.7,659.9 758.3,658.6 749.2,653.3 738.6,652.5 728.8,649.7 719.5,644.8"/><polyline points="751.5,684.7 740.2,685.1 728.9,684.4"/><polyline points="719.5,644.8 714.7,646.2 711.3,650.0"/><polyline points="728.9,684.4 723.8,682.6 721.1,677.9"/><polyline points="997.7,931.6 987.9,929.8 977.9,928.7 968.0,927.8 957.9,928.7"/><polyline points="1002.6,936.3 1005.7,946.7 1008.6,957.1 1007.8,968.1"/><polyline points="957.9,928.7 959.7,939.3 962.6,949.4 967.7,958.7 971.0,968.7 976.7,977.7"/><polyline points="976.7,977.7 986.4,972.6 996.5,968.4 1007.8,968.1"/><polyline points="1017.1,911.0 1009.4,916.8 1002.2,922.9 997.7,931.6"/><polyline points="1019.1,936.0 1010.8,935.7 1002.6,936.3"/><polyline points="949.1,917.9 952.6,924.1 957.9,928.7"/><polyline points="1021.8,967.8 1014.8,965.9 1007.8,968.1"/><polyline points="893.7,950.3 902.1,943.9 910.0,937.0 917.4,929.7 925.3,922.9 931.5,914.3"/><polyline points="932.0,780.8 936.2,776.0 941.4,772.4"/><polyline points="932.0,780.8 921.7,784.9 911.1,788.1 901.3,793.5"/><polyline points="911.3,761.0 921.3,763.5 931.4,765.9 940.6,770.8"/><polyline points="911.3,761.0 903.9,766.3 896.9,772.1 891.7,779.7"/><polyline points="940.6,770.8 941.0,771.6 941.4,772.4"/><polyline points="891.7,779.7 896.9,786.4 901.3,793.5"/><polyline points="912.1,814.0 916.0,805.1 920.2,796.3 926.4,788.7 932.0,780.8"/><polyline points="954.3,783.5 947.2,778.8 941.4,772.4"/><polyline points="904.5,806.6 904.0,799.8 901.3,793.5"/><polyline points="993.8,739.3 982.7,740.9 971.9,738.9 961.0,736.4 950.0,737.5"/><polyline points="950.0,737.5 950.5,739.1 948.8,738.8"/><polyline points="948.8,738.8 947.7,749.9 944.8,760.5 940.6,770.8"/><polyline points="848.6,801.3 850.5,801.6 848.6,802.0"/><polyline points="623.9,112.6 633.2,117.0 642.1,122.4 651.1,127.5 659.8,133.1"/><polyline points="659.8,133.1 669.2,127.2 678.4,121.1"/><polyline points="961.1,96.0 949.1,99.3 938.6,106.2"/><polyline points="938.6,106.2 932.9,97.8 926.3,90.0 921.2,81.1"/><polyline points="874.1,88.0 882.1,93.1 891.0,96.3 899.3,100.9 908.7,103.1"/><polyline points="921.2,81.1 919.1,82.0 919.6,84.2"/><polyline points="337.5,391.3 336.8,389.3 338.9,389.3"/><polyline points="338.9,389.3 333.7,380.2 327.3,371.9 323.2,362.2"/><polyline points="304.3,277.7 310.8,278.8 317.3,278.9"/><polyline points="321.5,228.2 332.5,234.5 342.7,242.0"/><polyline points="317.3,278.9 323.2,269.4 328.5,259.5 336.2,251.2 342.7,242.0"/><polyline points="291.4,708.3 303.3,708.1 315.2,707.9 326.6,704.0"/><polyline points="348.4,731.8 343.5,722.9 339.7,713.5 333.1,705.7"/><polyline points="326.6,704.0 329.3,706.9 333.1,705.7"/><polyline points="323.8,662.8 324.4,663.2 324.8,662.5"/><polyline points="326.6,704.0 328.2,693.5 324.9,683.3 325.5,672.9 324.8,662.5"/><polyline points="297.2,862.5 303.7,870.2 310.8,877.4 314.2,887.3 320.9,894.9 326.6,903.1"/><polyline points="485.2,991.7 479.1,986.8 473.0,981.9"/><polyline points="473.0,981.9 462.5,985.9 453.1,992.0"/><polyline points="369.4,130.3 379.3,130.6 389.0,131.5 398.5,135.1 408.2,135.9 418.0,136.8"/><polyline points="446.0,109.1 437.9,115.0 432.2,123.2 425.4,130.3 418.0,136.8"/><polyline points="362.5,137.5 366.7,134.6 369.4,130.3"/><polyline points="365.9,162.4 375.8,164.1 385.6,162.9 395.5,163.3 405.2,159.9 415.0,160.4"/><polyline points="415.0,160.4 418.5,148.9 418.0,136.8"/><polyline points="379.1,747.9 391.2,750.9 401.6,757.8"/><polyline points="354.1,790.5 360.7,783.8 368.4,778.7 376.1,773.6 385.1,770.6 392.4,764.9 400.4,760.4"/><polyline points="400.4,760.4 400.4,758.9 401.7,758.3"/><polyline points="401.6,757.8 399.7,758.4 401.7,758.3"/><polyline points="406.7,391.9 408.3,401.9 407.1,411.8 407.3,421.8 406.5,431.7 405.4,441.7 405.2,451.6"/><polyline points="406.7,391.9 414.8,397.0 424.1,399.9 432.4,404.7 440.5,409.9 448.4,415.3 457.8,418.0 466.3,422.3"/><polyline points="466.3,422.3 458.4,428.2 449.9,433.0 441.0,436.7 432.1,440.5 423.4,444.8 415.2,450.1 405.2,451.6"/><polyline points="1046.2,643.4 1039.3,633.0 1032.1,622.9"/><polyline points="1043.8,673.3 1033.5,671.6 1023.1,670.2 1012.8,668.7 1002.3,671.5"/><polyline points="1032.1,622.9 1027.3,631.1 1023.6,640.0 1017.4,647.3 1012.4,655.5 1008.7,664.4 1002.3,671.5"/><polyline points="1000.8,702.1 997.4,689.3 995.9,676.1"/><polyline points="995.9,676.1 998.0,674.5 998.0,671.9"/><polyline points="998.0,671.9 1000.2,672.6 1002.3,671.5"/><polyline points="948.8,738.8 939.8,735.6 930.0,736.2 920.6,735.2 912.1,729.9 902.8,728.4"/><polyline points="911.3,761.0 906.2,751.9 902.6,742.2 900.1,732.1"/><polyline points="902.8,728.4 901.4,730.2 900.1,732.1"/><polyline points="874.8,778.6 872.4,769.6 870.4,760.5 871.0,751.1"/><polyline points="871.0,751.1 878.1,744.2 886.3,738.7 894.5,733.2"/><polyline points="900.1,732.1 896.9,730.9 894.5,733.2"/><polyline points="871.0,751.1 862.8,747.0 854.1,744.1 845.3,741.5 837.4,736.8 829.1,732.9"/><polyline points="894.5,733.2 885.7,725.7 876.3,719.0 865.0,715.7"/><polyline points="865.0,715.7 855.6,719.1 846.1,722.2 837.4,727.2 829.1,732.9"/><polyline points="745.9,724.0 753.2,732.1 760.0,740.6 764.6,750.6"/><polyline points="755.2,698.9 763.6,702.7 772.1,706.1 781.2,708.3 788.6,714.2 796.3,719.6 804.8,723.0 814.1,724.9"/><polyline points="814.2,735.4 815.4,734.4 815.5,732.8"/><polyline points="814.1,724.9 813.6,729.0 815.5,732.8"/><polyline points="819.6,768.4 826.9,776.6 835.2,783.9 842.0,792.5 848.6,801.3"/><polyline points="819.6,768.4 818.6,757.3 816.2,746.4 814.2,735.4"/><polyline points="829.1,732.9 822.3,734.4 815.5,732.8"/><polyline points="819.6,768.4 813.8,776.6 806.6,783.4 799.7,790.4 792.6,797.1 783.4,801.7"/><polyline points="807.3,827.5 797.4,824.1 788.9,817.9"/><polyline points="745.4,780.8 751.0,770.2 756.3,759.4 764.6,750.6"/><polyline points="745.4,780.8 745.2,782.1 745.9,783.3"/><polyline points="783.4,801.7 773.2,798.7 764.3,793.2 754.2,790.1 745.9,783.3"/><polyline points="787.8,870.4 782.3,862.9 776.2,855.7 772.2,847.4 769.0,838.5"/><polyline points="787.8,870.4 797.8,868.3 807.8,869.7"/><polyline points="609.3,986.8 610.3,996.2 609.4,1005.7"/><polyline points="609.3,986.8 618.9,982.8 628.8,979.5 637.9,974.4"/><polyline points="637.9,974.4 630.7,982.2 623.5,990.0 617.7,999.1 609.7,1006.1"/><polyline points="609.4,1005.7 608.3,1006.6 609.7,1006.1"/><polyline points="651.3,964.6 643.3,967.7 637.9,974.4"/><polyline points="612.9,1022.4 611.4,1014.2 609.7,1006.1"/><polyline points="604.1,963.0 594.6,960.7 586.6,955.0"/><polyline points="586.6,955.0 582.5,966.1 581.8,978.2 577.7,989.4"/><polyline points="603.8,982.1 596.9,987.5 589.0,991.1"/><polyline points="589.0,991.1 583.6,988.3 577.7,989.4"/><polyline points="652.0,962.8 642.4,964.4 632.8,962.1 623.3,964.7 613.7,966.1 604.1,963.0"/><polyline points="609.3,986.8 606.6,984.3 603.8,982.1"/><polyline points="609.4,1005.7 598.9,998.7 589.0,991.1"/><polyline points="565.5,999.2 572.1,994.9 577.7,989.4"/><polyline points="616.6,920.8 622.3,931.1 631.4,939.1 637.0,949.4"/><polyline points="606.8,919.2 598.4,919.5 590.2,920.5"/><polyline points="583.8,926.2 586.6,922.9 590.2,920.5"/><polyline points="630.3,915.1 624.3,920.0 616.6,920.8"/><polyline points="630.3,915.1 638.7,920.0 646.4,925.9 653.5,932.5"/><polyline points="653.5,932.5 657.5,938.8 657.2,946.2"/><polyline points="652.9,961.6 643.8,957.0 637.0,949.4"/><polyline points="630.3,915.1 631.7,904.7 630.0,894.3"/><polyline points="630.0,894.3 623.6,903.8 614.4,910.8 606.8,919.2"/><polyline points="581.8,927.3 582.1,925.6 583.8,926.2"/><polyline points="578.8,941.1 584.1,947.2 586.6,955.0"/><polyline points="602.1,870.7 601.6,879.8 602.3,888.9"/><polyline points="602.1,870.7 605.4,861.1 611.8,853.3"/><polyline points="626.2,856.9 619.0,854.9 611.8,853.3"/><polyline points="626.2,856.9 619.4,863.9 616.2,873.3 612.0,882.1 604.7,888.7"/><polyline points="604.7,888.7 603.6,889.5 602.3,888.9"/><polyline points="601.0,889.8 601.9,889.6 602.3,888.9"/><polyline points="601.0,889.8 596.6,899.8 593.5,910.2 590.2,920.5"/><polyline points="630.8,890.9 617.6,891.3 604.7,888.7"/><polyline points="630.8,890.9 628.8,892.3 630.0,894.3"/><polyline points="581.1,838.2 578.8,839.3 578.5,841.9"/><polyline points="581.1,838.2 590.2,842.5 598.8,848.0 608.9,850.3"/><polyline points="608.9,850.3 611.7,850.4 611.8,853.3"/><polyline points="602.1,870.7 591.6,866.3 581.3,861.6"/><polyline points="581.3,861.6 578.2,852.0 578.5,841.9"/><polyline points="609.7,773.3 608.7,765.4 604.7,758.6"/><polyline points="609.7,773.3 607.4,774.5 609.2,776.2"/><polyline points="604.7,758.6 595.6,765.0 584.8,768.8 576.1,775.9"/><polyline points="609.2,776.2 598.2,777.3 587.2,775.4 576.1,775.9"/><polyline points="532.3,834.6 530.1,842.2 528.1,849.8"/><polyline points="532.3,834.6 534.2,832.2 536.6,830.3"/><polyline points="528.1,849.8 535.3,858.9 541.1,869.0"/><polyline points="564.7,847.5 557.8,855.7 550.7,863.7 541.1,869.0"/><polyline points="564.7,847.5 554.8,843.1 547.5,834.8 537.9,829.8"/><polyline points="536.6,830.3 537.7,831.3 537.9,829.8"/><polyline points="564.7,847.5 571.9,845.5 578.5,841.9"/><polyline points="581.3,814.1 574.4,807.5 567.2,801.4"/><polyline points="537.9,829.8 546.1,823.6 553.2,816.2 560.1,808.7 567.2,801.4"/><polyline points="581.3,814.1 585.5,814.7 588.9,812.2"/><polyline points="609.2,776.2 610.0,780.7 613.0,784.1"/><polyline points="564.7,779.4 568.5,777.1 572.9,776.4"/><polyline points="564.7,779.4 561.7,783.8 561.2,789.1"/><polyline points="576.1,775.9 574.3,775.1 572.9,776.4"/><polyline points="561.2,789.1 565.9,794.4 567.2,801.4"/><polyline points="588.9,812.2 593.5,803.9 601.0,798.2 606.1,790.3 613.0,784.1"/><polyline points="643.0,763.1 640.0,758.9 638.3,754.1"/><polyline points="609.7,773.3 619.1,766.8 628.4,760.0 638.3,754.1"/><polyline points="618.3,785.7 616.1,783.3 613.0,784.1"/><polyline points="532.3,834.6 522.6,827.4 511.4,823.0"/><polyline points="528.1,849.8 518.2,848.3 508.2,850.3 498.4,849.3 488.6,847.1 478.6,848.2"/><polyline points="478.6,848.2 483.6,844.4 487.4,839.3"/><polyline points="487.4,839.3 495.8,834.5 503.1,828.0 511.4,823.0"/><polyline points="657.3,863.2 655.3,862.4 654.5,864.4"/><polyline points="657.3,863.2 665.3,858.6 670.6,851.0 677.7,845.3 684.3,839.1"/><polyline points="684.1,837.9 673.2,837.9 662.4,835.8 651.4,836.5 640.5,835.6"/><polyline points="654.5,864.4 650.1,866.4 645.4,865.0"/><polyline points="645.4,865.0 641.8,862.1 639.6,858.1"/><polyline points="692.5,897.9 686.1,895.7 679.4,896.4"/><polyline points="692.5,897.9 688.6,886.4 687.8,874.2"/><polyline points="687.8,874.2 677.3,871.5 666.6,869.2 657.3,863.2"/><polyline points="679.4,896.4 671.8,889.5 665.7,881.3 659.7,873.2 654.5,864.4"/><polyline points="687.8,874.2 692.3,862.2 700.0,851.9"/><polyline points="630.8,890.9 635.6,889.3 639.1,885.7"/><polyline points="626.2,856.9 633.0,856.1 639.6,858.1"/><polyline points="639.1,885.7 641.3,875.0 645.4,865.0"/><polyline points="750.5,870.8 738.8,873.5 728.4,879.4"/><polyline points="750.5,870.8 759.6,871.8 768.6,873.0 776.5,878.2"/><polyline points="772.2,896.7 762.6,895.9 752.9,894.8 743.2,895.7 733.6,894.6 723.9,896.4"/><polyline points="723.9,896.4 724.1,887.3 728.4,879.4"/><polyline points="756.7,838.9 753.2,838.2 750.8,835.5"/><polyline points="756.7,838.9 754.8,849.6 753.8,860.4 750.5,870.8"/><polyline points="750.8,835.5 741.9,838.9 733.6,843.9 723.8,844.8"/><polyline points="717.1,855.0 718.7,848.7 723.8,844.8"/><polyline points="717.1,855.0 723.2,867.0 728.4,879.4"/><polyline points="787.8,870.4 783.0,875.4 776.5,878.2"/><polyline points="769.0,838.5 762.8,837.9 756.7,838.9"/><polyline points="774.2,905.2 771.6,914.9 765.8,923.3 763.1,932.8 759.6,942.1"/><polyline points="774.2,905.2 773.9,900.8 772.2,896.7"/><polyline points="720.8,901.9 723.0,899.5 723.9,896.4"/><polyline points="692.5,897.9 700.3,900.8 705.7,907.2"/><polyline points="700.0,851.9 708.9,851.9 717.1,855.0"/><polyline points="855.1,1001.2 845.4,1000.2 836.2,996.6 826.6,995.1 816.8,994.9"/><polyline points="811.7,1000.2 813.1,996.5 816.8,994.9"/><polyline points="761.4,985.0 764.3,978.5 763.5,971.5"/><polyline points="811.7,1000.2 803.4,996.0 795.8,990.3 788.6,984.2 779.9,980.4 770.6,977.7 763.5,971.5"/><polyline points="761.0,947.1 763.2,947.6 763.1,949.8"/><polyline points="763.1,949.8 761.2,954.0 761.4,958.6"/><polyline points="761.4,958.6 761.6,965.2 763.5,971.5"/><polyline points="846.8,894.3 853.2,885.6 861.1,878.2"/><polyline points="856.8,907.2 867.7,902.4 877.2,895.6 886.0,887.6"/><polyline points="861.1,878.2 872.5,880.1 883.6,883.8"/><polyline points="886.0,887.6 886.5,884.6 883.6,883.8"/><polyline points="865.5,840.9 862.2,850.0 862.1,859.4 862.5,868.9 861.1,878.2"/><polyline points="840.4,891.7 843.9,892.3 846.8,894.3"/><polyline points="926.0,903.7 915.4,901.3 905.2,897.6 895.4,893.3 886.0,887.6"/><polyline points="880.1,950.6 870.0,942.7 862.5,932.4"/><polyline points="862.5,932.4 858.1,920.1 856.8,907.2"/><polyline points="879.5,845.1 878.9,854.9 881.2,864.5 881.6,874.2 883.6,883.8"/><polyline points="774.2,905.2 784.9,906.6 795.8,907.1 806.4,909.1"/><polyline points="763.1,949.8 774.0,949.7 785.0,949.5 795.8,947.5"/><polyline points="795.8,947.5 799.9,938.3 802.1,928.6 806.2,919.4 806.4,909.1"/><polyline points="751.5,684.7 751.5,692.2 755.2,698.9"/><polyline points="728.9,684.4 724.3,693.3 720.6,702.7 713.6,710.2 709.1,719.1"/><polyline points="745.9,724.0 734.9,724.5 723.8,722.9 712.9,725.5"/><polyline points="712.9,725.5 712.7,721.3 709.1,719.1"/><polyline points="1033.3,238.8 1023.9,238.0 1015.0,234.6 1005.9,232.4 996.6,231.2"/><polyline points="1020.0,195.4 1011.3,198.9 1002.5,200.6 993.4,201.0 984.2,201.2"/><polyline points="996.6,231.2 990.4,224.0 983.4,217.7"/><polyline points="983.4,217.7 985.0,209.5 984.2,201.2"/><polyline points="993.3,141.7 987.8,151.7 979.4,159.8 973.4,169.5"/><polyline points="973.4,169.5 972.7,178.9 975.8,187.8"/><polyline points="975.8,187.8 978.6,195.4 984.2,201.2"/><polyline points="742.6,399.0 738.6,389.9 739.2,379.7 738.3,369.9 736.6,360.2 733.1,350.9 729.8,341.6"/><polyline points="742.6,399.0 747.3,391.0 753.9,384.6 760.4,378.1 766.0,370.9"/><polyline points="729.8,341.6 732.1,340.8 733.7,338.9"/><polyline points="733.7,338.9 743.5,334.5 754.3,333.9"/><polyline points="766.0,370.9 770.1,359.8 770.0,348.1"/><polyline points="754.3,333.9 762.5,340.6 770.0,348.1"/><polyline points="883.5,286.1 875.3,288.0 867.0,287.9"/><polyline points="883.5,286.1 886.4,277.1 889.4,268.1 891.4,258.9 891.5,249.3"/><polyline points="858.5,221.6 867.8,225.6 876.0,231.5 885.2,235.7"/><polyline points="858.5,221.6 851.6,230.3 844.3,238.6 837.7,247.5"/><polyline points="867.0,287.9 859.7,280.9 853.8,272.8 848.8,264.1 842.5,256.3 837.7,247.5"/><polyline points="858.5,221.6 853.0,213.6 850.2,204.3"/><polyline points="776.6,253.3 786.1,253.9 795.7,253.4 805.1,251.0 814.7,251.0 824.2,250.9 833.7,251.8"/><polyline points="776.6,253.3 777.4,241.5 774.0,230.2"/><polyline points="780.4,211.0 789.8,206.0 800.7,205.4 811.0,203.1 821.2,200.4 830.3,194.3"/><polyline points="780.4,211.0 778.7,211.3 779.3,213.0"/><polyline points="779.3,213.0 778.7,222.2 774.0,230.2"/><polyline points="837.7,247.5 836.5,250.4 833.7,251.8"/><polyline points="779.3,213.0 769.2,211.1 759.6,207.0 749.7,204.2 739.7,201.9 729.4,201.0 719.6,197.6"/><polyline points="774.0,230.2 764.8,231.3 756.1,227.9 747.1,227.7 737.9,229.0 729.0,227.3 720.1,225.7"/><polyline points="720.1,225.7 717.9,216.4 720.3,207.0 719.6,197.6"/><polyline points="724.6,110.9 714.1,113.1 704.3,117.5 694.9,123.0 684.3,125.0"/><polyline points="713.8,144.7 705.3,138.9 695.4,135.5 686.9,129.7"/><polyline points="684.3,125.0 686.4,126.9 686.9,129.7"/><polyline points="678.9,178.5 682.3,176.4 686.4,176.0"/><polyline points="678.9,178.5 672.4,177.4 666.9,173.8"/><polyline points="659.8,133.1 652.6,143.4 645.5,153.9"/><polyline points="678.4,121.1 680.6,124.2 684.3,125.0"/><polyline points="666.9,173.8 658.6,168.4 651.7,161.5 645.5,153.9"/><polyline points="714.6,184.8 714.3,184.5 714.0,184.7"/><polyline points="714.6,184.8 720.1,175.6 726.8,167.5 735.9,161.7"/><polyline points="713.8,144.7 722.3,148.9 729.8,154.2 735.8,161.6"/><polyline points="735.9,161.7 736.7,161.0 735.8,161.6"/><polyline points="724.6,110.9 724.8,110.6 725.2,110.6"/><polyline points="735.8,161.6 733.9,151.3 731.4,141.2 731.4,130.6 728.3,120.6 725.2,110.6"/><polyline points="731.3,103.3 729.6,108.1 725.2,110.6"/><polyline points="731.3,103.3 740.2,108.4 748.8,114.0 756.8,120.4"/><polyline points="803.1,88.2 796.2,94.7 787.6,98.7 779.0,102.8 772.5,110.0 763.9,114.1 756.8,120.4"/><polyline points="735.9,161.7 745.6,160.9 755.3,159.4"/><polyline points="780.4,211.0 775.2,203.2 772.4,194.3 768.9,185.6 764.3,177.5 759.4,169.5 757.2,160.3"/><polyline points="719.6,197.6 715.7,191.7 714.6,184.8"/><polyline points="757.2,160.3 756.0,160.3 755.3,159.4"/><polyline points="938.6,106.2 938.8,113.7 937.6,121.0"/><polyline points="919.6,84.2 920.4,93.4 922.3,102.4 927.6,110.4 929.7,119.3 931.6,128.2"/><polyline points="937.6,121.0 934.5,124.6 931.6,128.2"/><polyline points="965.0,104.5 957.2,110.5 951.9,118.9"/><polyline points="937.6,121.0 944.7,119.6 951.9,118.9"/><polyline points="993.3,141.7 983.9,135.9 972.8,134.5 962.9,130.1"/><polyline points="962.9,130.1 957.1,124.8 951.9,118.9"/><polyline points="1076.4,434.7 1066.3,430.6 1056.0,427.4 1045.5,424.6"/><polyline points="1076.4,434.7 1068.7,443.3 1062.8,453.4 1053.9,460.9"/><polyline points="1053.9,460.9 1048.9,453.4 1044.7,445.4"/><polyline points="1044.7,445.4 1045.9,435.0 1045.5,424.6"/><polyline points="1091.1,375.2 1082.7,379.4 1077.1,386.9 1069.2,391.7 1063.8,399.4 1057.4,406.0 1048.8,409.8 1042.0,415.8"/><polyline points="1045.5,424.6 1041.7,421.0 1042.0,415.8"/><polyline points="996.6,302.1 996.2,307.2 999.6,310.9"/><polyline points="996.6,302.1 1007.2,298.6 1016.8,292.8 1026.3,287.1"/><polyline points="999.6,310.9 1008.1,314.8 1014.8,321.4 1022.8,326.0 1029.8,332.1 1036.5,338.7 1043.7,344.5 1051.1,350.0 1060.8,352.3"/><polyline points="1026.3,287.1 1032.8,290.4 1040.0,291.4"/><polyline points="1040.0,291.4 1051.0,296.8 1062.6,301.0"/><polyline points="1062.6,301.0 1062.1,311.2 1062.0,321.5 1059.8,331.7 1062.5,342.1 1060.8,352.3"/><polyline points="1037.8,252.2 1036.3,261.4 1032.5,269.8 1031.0,279.0 1026.3,287.1"/><polyline points="996.6,231.2 996.2,241.1 994.2,251.0 993.8,260.9 995.8,271.0 992.6,280.8 991.4,290.7 993.2,300.8"/><polyline points="993.2,300.8 994.7,302.0 996.6,302.1"/><polyline points="1064.5,359.9 1054.2,364.1 1043.0,365.3 1033.1,370.4 1022.4,373.3"/><polyline points="1064.5,359.9 1064.2,355.3 1060.8,352.3"/><polyline points="1022.4,373.3 1017.1,364.9 1014.2,355.5 1012.3,345.6 1007.6,336.9 1004.6,327.5 999.3,319.1"/><polyline points="999.3,319.1 999.8,315.0 999.6,310.9"/><polyline points="1091.1,375.2 1081.5,371.3 1073.8,364.1 1064.5,359.9"/><polyline points="1032.1,622.9 1030.1,620.1 1028.7,617.0"/><polyline points="980.8,636.0 989.3,632.7 996.8,627.5 1004.8,623.3 1013.5,620.2 1020.7,614.5"/><polyline points="980.8,636.0 985.4,644.9 990.5,653.4 992.8,663.4 998.0,671.9"/><polyline points="1028.7,617.0 1024.5,616.5 1020.7,614.5"/><polyline points="623.3,738.8 614.3,744.5 604.5,748.4"/><polyline points="623.3,738.8 615.6,733.9 609.0,727.6 601.2,722.7 595.6,715.4"/><polyline points="591.2,741.6 592.7,728.8 594.3,716.0"/><polyline points="599.5,747.0 601.8,748.4 604.5,748.4"/><polyline points="594.3,716.0 595.3,716.3 595.6,715.4"/><polyline points="604.7,758.6 606.5,753.5 604.5,748.4"/><polyline points="638.3,754.1 638.2,745.6 635.2,737.6"/><polyline points="635.2,737.6 629.3,739.6 623.3,738.8"/><polyline points="562.1,763.7 562.3,753.5 564.7,743.5"/><polyline points="564.7,743.5 578.1,744.1 591.2,741.6"/><polyline points="572.9,776.4 578.2,767.8 584.2,759.9 590.4,752.1 599.5,747.0"/><polyline points="549.8,711.8 555.0,722.3 560.2,732.7 564.7,743.5"/><polyline points="549.8,711.8 560.8,713.5 571.8,716.1 582.9,717.8 594.3,716.0"/><polyline points="637.1,734.9 637.7,737.4 635.2,737.6"/><polyline points="637.1,734.9 636.5,727.5 635.9,720.0"/><polyline points="608.9,695.6 618.4,702.9 627.1,711.2 635.6,719.6"/><polyline points="608.9,695.6 603.1,706.1 595.6,715.4"/><polyline points="635.9,720.0 635.1,720.4 635.6,719.6"/><polyline points="607.9,685.0 609.4,690.2 608.9,695.6"/><polyline points="607.9,685.0 620.4,681.3 633.2,678.4"/><polyline points="602.1,679.4 608.3,671.5 612.9,662.4 620.0,655.2 626.6,647.6 631.8,638.9"/><polyline points="602.1,679.4 606.5,680.7 607.9,685.0"/><polyline points="631.8,638.9 641.4,641.3 651.3,641.6"/><polyline points="651.3,641.6 652.9,651.0 653.4,660.6 653.8,670.2"/><polyline points="653.8,670.2 644.0,675.4 633.2,678.4"/><polyline points="587.1,538.4 581.7,548.0 575.9,557.3 569.2,565.9 560.9,573.3"/><polyline points="587.1,538.4 582.5,534.1 576.2,533.2"/><polyline points="576.2,533.2 565.5,539.7 554.0,544.5"/><polyline points="560.9,573.3 556.8,564.1 555.5,554.3 554.0,544.5"/><polyline points="590.0,539.0 588.4,539.3 587.1,538.4"/><polyline points="594.1,587.9 582.5,584.8 571.7,579.9 560.7,575.4"/><polyline points="560.9,573.3 561.2,574.4 560.7,575.4"/><polyline points="536.6,530.3 535.4,527.0 535.5,523.5"/><polyline points="536.6,530.3 543.4,535.7 548.0,543.1"/><polyline points="535.5,523.5 544.8,523.5 554.0,522.9 563.3,522.6 572.4,524.5"/><polyline points="572.4,524.5 576.2,528.0 576.2,533.2"/><polyline points="548.0,543.1 550.8,544.6 554.0,544.5"/><polyline points="409.4,495.2 411.7,486.3 412.6,477.2"/><polyline points="412.6,477.2 409.6,466.7 403.4,457.8"/><polyline points="312.7,466.9 321.3,461.4 331.2,458.9"/><polyline points="364.1,451.8 353.1,454.0 342.6,458.5 331.2,458.9"/><polyline points="403.4,457.8 406.3,455.3 405.2,451.6"/><polyline points="406.7,391.9 407.1,387.7 404.4,384.6"/><polyline points="363.4,419.1 364.4,430.0 362.3,440.9 364.1,451.8"/><polyline points="404.4,384.6 396.3,380.5 387.4,379.3"/><polyline points="369.3,186.4 374.7,193.5 379.4,201.1"/><polyline points="342.7,242.0 348.5,245.2 355.0,244.3"/><polyline points="355.0,244.3 358.8,235.0 366.2,227.8 372.0,219.7 375.6,210.3 379.4,201.1"/><polyline points="415.0,160.4 420.9,167.5 425.8,175.5 433.2,181.2"/><polyline points="433.2,181.2 429.5,189.8 422.8,196.1 418.4,204.1 411.8,210.5"/><polyline points="379.4,201.1 390.7,202.5 401.2,206.8 411.8,210.5"/><polyline points="729.0,319.0 724.5,310.3 720.6,301.3 717.8,291.9 713.9,282.9 708.6,274.6"/><polyline points="729.0,319.0 736.6,313.4 741.0,304.8 748.3,298.9 755.7,293.0 762.5,286.7 767.1,278.2"/><polyline points="708.6,274.6 718.3,275.5 727.9,278.1 737.7,277.4 747.4,279.2 757.1,280.7 767.1,278.1"/><polyline points="767.1,278.2 767.1,278.2 767.1,278.1"/><polyline points="769.6,282.6 764.5,292.2 763.2,303.0 758.4,312.8 755.2,323.0 754.3,333.9"/><polyline points="769.6,282.6 769.6,279.7 767.1,278.2"/><polyline points="776.6,253.3 772.8,266.1 767.1,278.1"/><polyline points="706.7,274.2 707.9,273.4 708.6,274.6"/><polyline points="706.7,274.2 705.5,260.8 703.9,247.6"/><polyline points="703.9,247.6 709.9,240.7 713.6,232.2 720.1,225.7"/><polyline points="383.3,995.1 385.2,986.1 386.2,976.9 390.3,968.4 391.6,959.2"/><polyline points="453.1,992.0 447.3,983.5 439.4,976.7 434.3,967.6"/><polyline points="434.3,967.6 425.2,962.4 415.6,958.3 405.6,955.0"/><polyline points="391.6,959.2 398.2,956.0 405.6,955.0"/><polyline points="320.9,989.7 323.5,986.2 326.9,983.5"/><polyline points="326.9,983.5 315.8,979.6 305.1,974.7 295.7,967.6"/><polyline points="318.7,1007.5 319.6,998.6 320.9,989.7"/><polyline points="361.7,998.3 354.7,992.2 346.6,988.0 337.7,985.3 329.8,980.8"/><polyline points="329.8,980.8 329.2,983.0 326.9,983.5"/><polyline points="329.8,980.8 332.0,974.0 329.8,967.1"/><polyline points="329.8,967.1 318.4,965.7 307.0,966.5 295.7,967.6"/><polyline points="317.9,936.3 322.7,926.6 325.5,916.0 331.0,906.6"/><polyline points="331.0,906.6 332.5,904.1 334.6,905.9"/><polyline points="334.6,905.9 343.8,910.1 351.6,916.0 357.9,923.9 365.1,930.7 374.0,935.2"/><polyline points="336.1,952.6 346.3,951.6 356.3,948.3 366.8,949.0 376.8,946.6"/><polyline points="376.8,946.6 373.7,941.3 374.0,935.2"/><polyline points="326.6,903.1 329.5,904.0 331.0,906.6"/><polyline points="327.0,864.2 317.1,863.0 307.1,863.9 297.2,862.5"/><polyline points="327.0,864.2 337.7,868.4 348.1,873.1 356.8,880.9"/><polyline points="356.8,880.9 348.5,888.5 340.5,896.3 334.6,905.9"/><polyline points="391.6,959.2 384.4,952.6 376.8,946.6"/><polyline points="549.8,711.8 546.1,710.5 544.5,706.9"/><polyline points="562.1,763.7 552.5,759.5 542.3,756.7 532.2,753.8"/><polyline points="532.2,753.8 533.3,744.3 529.4,735.5 530.9,726.0 527.1,717.2 527.1,707.9"/><polyline points="543.2,987.5 542.9,982.6 542.5,977.6"/><polyline points="513.6,998.5 511.1,987.5 505.1,977.9"/><polyline points="505.1,977.9 512.7,970.6 522.6,967.0"/><polyline points="522.6,967.0 532.6,972.2 542.5,977.6"/><polyline points="578.8,941.1 569.7,947.1 559.0,950.1 549.6,955.6"/><polyline points="426.9,729.1 436.2,729.9 445.5,727.5 454.9,729.2"/><polyline points="462.9,738.9 457.3,735.4 454.9,729.2"/><polyline points="874.7,497.2 881.4,508.4 887.9,519.7"/><polyline points="874.7,497.2 885.2,491.6 896.3,487.2 907.3,482.8"/><polyline points="923.6,500.2 916.8,490.3 907.3,482.8"/><polyline points="923.6,500.2 916.4,507.1 910.8,515.5 903.7,522.4 896.1,528.9"/><polyline points="896.1,528.9 891.9,524.4 887.9,519.7"/><polyline points="883.5,286.1 887.3,297.2 893.6,307.2 897.9,318.1"/><polyline points="867.0,287.9 860.1,288.4 853.5,290.6"/><polyline points="831.8,316.9 839.1,308.2 847.4,300.3 853.5,290.6"/><polyline points="831.8,316.9 838.6,324.8 843.1,334.0 846.7,343.9 851.3,353.1 858.7,360.6"/><polyline points="897.9,318.1 891.5,325.4 884.5,332.0 877.4,338.6 869.8,344.7 865.0,353.3 858.7,360.6"/><polyline points="927.9,261.3 918.3,259.9 910.0,254.4 901.0,251.2 891.5,249.3"/><polyline points="927.9,261.3 934.1,269.6 939.1,278.5 944.9,287.1 949.7,296.1 952.1,306.4"/><polyline points="952.1,306.4 943.9,312.5 936.8,319.8"/><polyline points="897.9,318.1 907.7,317.2 917.4,317.6 927.2,318.1 936.8,319.8"/><polyline points="966.9,636.4 965.6,625.8 960.4,616.5"/><polyline points="966.9,636.4 955.3,641.4 943.6,646.0"/><polyline points="960.4,616.5 953.3,610.6 946.5,604.3 941.2,596.6 934.3,590.6"/><polyline points="943.6,646.0 938.1,637.6 933.1,628.9 928.4,620.0 925.3,610.3"/><polyline points="925.3,610.3 931.4,601.2 934.3,590.6"/><polyline points="947.6,558.4 946.0,546.9 947.9,535.3 946.4,523.9"/><polyline points="947.6,558.4 945.0,560.9 941.4,560.7"/><polyline points="937.3,501.7 937.0,503.5 938.6,504.1"/><polyline points="938.6,504.1 943.7,513.5 946.4,523.9"/><polyline points="900.7,548.2 897.0,538.9 896.1,528.9"/><polyline points="900.7,548.2 901.3,552.3 904.4,554.9"/><polyline points="904.4,554.9 913.4,558.0 922.6,559.7 931.9,560.6 941.4,560.7"/><polyline points="960.4,616.5 960.0,607.2 960.2,597.9 960.3,588.6 962.1,579.3 959.2,570.1 959.9,560.8"/><polyline points="947.6,558.4 954.2,557.6 959.9,560.8"/><polyline points="934.3,590.6 938.1,581.0 938.3,570.5 941.4,560.7"/><polyline points="817.7,694.1 823.5,689.2 828.7,683.7"/><polyline points="865.0,715.7 866.5,705.6 871.7,696.8"/><polyline points="871.7,696.8 866.2,690.0 862.1,682.2"/><polyline points="862.1,682.2 851.0,682.8 839.8,682.0 828.7,683.7"/><polyline points="902.8,728.4 901.3,727.8 902.9,727.9"/><polyline points="871.7,696.8 876.8,697.5 881.9,698.2"/><polyline points="902.9,727.9 897.3,720.7 891.0,714.1 886.9,705.7 881.9,698.2"/><polyline points="697.4,811.1 705.3,816.5 713.2,821.7 720.1,828.4"/><polyline points="697.4,811.1 707.0,807.1 715.6,801.1 724.6,795.9 733.2,790.1 743.7,787.7"/><polyline points="720.1,828.4 727.9,819.3 736.2,810.6 742.7,800.4"/><polyline points="743.7,787.7 741.3,793.9 742.7,800.4"/><polyline points="723.8,844.8 721.0,836.8 720.1,828.4"/><polyline points="684.1,837.9 682.6,825.9 682.8,813.9"/><polyline points="685.3,811.3 683.4,811.9 682.8,813.9"/><polyline points="685.3,811.3 691.3,810.1 697.4,811.1"/><polyline points="745.4,780.8 736.5,775.0 726.9,770.1 717.6,764.9"/><polyline points="717.6,764.9 712.1,773.1 705.9,780.8 699.3,788.1 692.3,795.0 685.5,802.2"/><polyline points="745.9,783.3 743.0,784.6 743.7,787.7"/><polyline points="685.5,802.2 686.5,806.8 685.3,811.3"/><polyline points="579.9,878.5 580.3,876.1 578.5,874.5"/><polyline points="579.9,878.5 575.9,886.8 569.2,893.1 564.3,900.7 557.9,907.2"/><polyline points="578.5,874.5 569.2,872.9 559.8,871.7 550.4,871.1 541.0,872.1"/><polyline points="541.0,872.1 538.7,884.6 533.1,896.0"/><polyline points="581.3,861.6 577.9,867.6 578.5,874.5"/><polyline points="581.8,927.3 573.4,921.1 565.1,914.8 557.9,907.2"/><polyline points="477.6,872.5 484.0,881.3 491.7,888.7 501.1,894.2"/><polyline points="477.6,872.5 473.2,863.8 472.0,854.1"/><polyline points="478.6,848.2 475.7,849.3 473.0,850.6"/><polyline points="655.0,919.5 662.0,911.7 668.2,903.2 677.1,897.3"/><polyline points="655.0,919.5 653.2,910.4 648.5,902.4 646.1,893.6"/><polyline points="646.1,893.6 656.2,896.8 666.5,898.5 677.1,897.3"/><polyline points="653.5,932.5 652.9,925.8 655.0,919.5"/><polyline points="679.4,896.4 677.8,895.8 677.1,897.3"/><polyline points="639.7,825.9 645.5,817.8 652.6,810.9"/><polyline points="639.7,825.9 630.6,821.6 620.6,821.1"/><polyline points="620.6,821.1 617.6,819.7 615.4,817.1"/><polyline points="615.4,817.1 619.1,804.5 626.6,793.6"/><polyline points="652.6,810.9 649.7,803.5 645.7,796.6"/><polyline points="626.6,793.6 636.1,795.3 645.7,796.6"/><polyline points="640.5,835.6 642.1,830.6 639.7,825.9"/><polyline points="682.8,813.9 672.8,813.0 662.7,812.0 652.6,810.9"/><polyline points="588.9,812.2 602.2,814.1 615.4,817.1"/><polyline points="685.5,802.2 682.2,790.6 677.4,779.5"/><polyline points="677.4,779.5 670.3,775.6 663.6,770.9"/><polyline points="663.6,770.9 658.0,773.5 652.0,771.9"/><polyline points="652.0,771.9 650.8,784.8 645.7,796.6"/><polyline points="643.0,763.1 646.3,768.7 652.0,771.9"/><polyline points="526.2,810.7 534.9,806.3 542.7,800.3 550.7,794.8 558.5,789.1"/><polyline points="526.2,810.7 521.1,808.6 515.6,809.2"/><polyline points="515.6,809.2 511.7,802.0 507.3,795.0"/><polyline points="558.5,789.1 549.3,788.0 540.5,785.1 531.2,784.2 522.6,780.7 514.2,776.7"/><polyline points="507.3,795.0 507.1,785.8 510.0,777.1"/><polyline points="514.2,776.7 512.2,778.6 510.0,777.1"/><polyline points="536.6,830.3 532.4,820.0 526.2,810.7"/><polyline points="561.2,789.1 559.9,788.9 558.5,789.1"/><polyline points="511.4,823.0 514.9,816.6 515.6,809.2"/><polyline points="487.4,839.3 489.6,828.8 492.8,818.5 496.4,808.4 501.9,799.1"/><polyline points="501.9,799.1 505.1,797.7 507.3,795.0"/><polyline points="532.2,753.8 525.5,760.9 519.8,768.8 514.2,776.7"/><polyline points="495.9,765.7 501.6,773.0 510.0,777.1"/><polyline points="495.9,765.7 492.7,753.6 489.1,741.6"/><polyline points="489.1,741.6 493.8,730.6 499.9,720.3 507.4,711.0"/><polyline points="527.1,707.9 517.5,710.8 507.4,711.0"/><polyline points="878.4,952.3 869.3,956.0 859.3,956.1 849.5,957.2 840.9,962.4"/><polyline points="816.8,994.9 816.3,985.8 816.8,976.8"/><polyline points="840.9,962.4 833.3,968.0 825.6,973.2 816.8,976.8"/><polyline points="795.8,947.5 796.2,948.7 797.4,948.2"/><polyline points="816.8,976.8 808.5,968.5 801.8,959.2 797.4,948.2"/><polyline points="841.6,931.6 837.7,923.0 834.0,914.3 828.3,906.8 821.4,900.0 818.1,891.2"/><polyline points="841.6,931.6 836.9,930.5 832.5,932.5"/><polyline points="832.5,932.5 827.1,921.9 820.4,912.3 811.2,904.7"/><polyline points="818.1,891.2 813.0,897.1 811.2,904.7"/><polyline points="862.5,932.4 852.1,930.9 841.6,931.6"/><polyline points="818.9,889.1 820.2,890.8 818.1,891.2"/><polyline points="806.4,909.1 809.1,907.3 811.2,904.7"/><polyline points="617.8,632.5 625.3,634.6 631.8,638.9"/><polyline points="617.8,632.5 615.2,622.0 611.7,611.7 612.0,600.6 609.4,590.1"/><polyline points="609.4,590.1 614.9,585.7 621.8,584.8"/><polyline points="621.8,584.8 628.5,591.5 635.0,598.5 643.1,603.8"/><polyline points="651.3,641.6 651.3,640.7 652.2,640.6"/><polyline points="643.1,603.8 644.3,613.2 647.8,622.1 651.8,630.9 652.2,640.6"/><polyline points="742.6,399.0 741.1,407.4 737.4,415.0"/><polyline points="729.8,341.6 719.0,340.7 708.4,343.1 697.7,342.7"/><polyline points="737.4,415.0 725.0,413.4 712.8,410.5"/><polyline points="712.8,410.5 710.3,400.9 707.5,391.4 706.5,381.5 704.2,371.8 703.3,361.8 698.9,352.6 697.7,342.7"/><polyline points="563.5,484.7 553.1,486.9 542.6,487.9 531.9,486.0"/><polyline points="563.5,484.7 564.7,494.9 566.0,505.0 568.4,515.0 572.4,524.5"/><polyline points="535.5,523.5 532.0,512.3 527.0,501.6 523.7,490.3"/><polyline points="523.7,490.3 528.1,488.8 531.9,486.0"/><polyline points="678.9,178.5 675.5,187.0 672.5,195.6 667.5,203.4 666.0,212.6"/><polyline points="714.0,184.7 707.1,192.8 700.6,201.2 691.8,207.6 686.5,217.1 678.1,223.8"/><polyline points="666.0,212.6 672.7,217.5 678.1,223.8"/><polyline points="703.9,247.6 696.5,240.6 689.2,233.5 680.4,228.3"/><polyline points="680.4,228.3 677.8,226.8 678.1,223.8"/><polyline points="711.6,731.6 702.8,735.6 693.1,737.4 683.4,739.0 675.1,744.6"/><polyline points="698.0,762.2 706.1,762.7 713.9,760.8"/><polyline points="698.0,762.2 688.1,753.6 676.0,748.7"/><polyline points="676.0,748.7 676.3,746.5 675.1,744.6"/><polyline points="717.6,764.9 714.3,764.1 713.9,760.8"/><polyline points="712.9,725.5 713.2,728.8 711.6,731.6"/><polyline points="677.4,779.5 687.0,769.9 698.0,762.2"/><polyline points="637.1,734.9 647.0,735.8 656.8,735.4 666.6,733.3"/><polyline points="666.6,733.3 671.0,738.9 675.1,744.6"/><polyline points="674.2,722.0 680.0,714.2 686.7,707.2"/><polyline points="674.2,722.0 665.1,717.0 655.5,712.8 647.7,705.7"/><polyline points="686.7,707.2 682.7,699.3 680.0,690.9"/><polyline points="680.0,690.9 678.5,688.4 676.1,686.6"/><polyline points="676.1,686.6 669.9,683.2 663.0,681.4"/><polyline points="663.0,681.4 659.3,690.4 655.1,699.0 647.7,705.7"/><polyline points="709.1,719.1 698.2,712.6 686.7,707.2"/><polyline points="666.6,733.3 671.3,728.2 674.2,722.0"/><polyline points="635.9,720.0 641.9,712.9 647.7,705.7"/><polyline points="721.1,677.9 711.4,683.0 701.2,686.4 690.7,688.7 680.0,690.9"/><polyline points="705.5,649.1 708.4,649.7 711.3,650.0"/><polyline points="705.5,649.1 701.3,657.9 696.0,665.9 690.3,673.5 681.7,678.9 676.1,686.6"/><polyline points="705.5,649.1 701.0,643.7 694.7,640.5"/><polyline points="653.8,670.2 656.8,677.1 663.0,681.4"/><polyline points="694.7,640.5 687.1,636.8 678.6,636.7"/><polyline points="678.6,636.7 670.0,636.9 661.5,636.4"/><polyline points="661.5,636.4 657.2,639.2 652.2,640.6"/><polyline points="962.5,243.6 963.2,237.9 965.7,232.6"/><polyline points="930.1,259.4 930.5,250.1 933.0,241.4 938.3,233.4 939.9,224.4"/><polyline points="993.2,300.8 989.0,300.1 984.6,299.7"/><polyline points="984.6,299.7 979.6,290.9 976.2,281.5 975.1,271.1 968.8,262.8 965.6,253.2 962.5,243.6"/><polyline points="983.4,217.7 974.8,225.5 965.7,232.6"/><polyline points="927.9,261.3 927.7,258.9 930.1,259.4"/><polyline points="984.6,299.7 973.9,302.4 963.0,304.3 952.1,306.4"/><polyline points="975.8,187.8 966.9,191.4 958.6,196.6 949.9,200.8 940.6,203.2 930.7,204.4 922.0,208.3"/><polyline points="922.0,208.3 923.9,209.1 921.9,208.3"/><polyline points="921.9,208.3 930.5,216.8 939.9,224.4"/><polyline points="885.2,235.7 891.8,229.3 900.4,225.4 907.4,219.5 914.8,214.1 921.9,208.3"/><polyline points="805.3,307.4 801.4,301.3 795.2,297.7"/><polyline points="805.3,307.4 811.9,307.0 817.9,310.1"/><polyline points="817.9,310.1 823.5,302.7 826.2,294.1 827.6,284.8 830.7,276.4 835.8,268.8"/><polyline points="795.2,297.7 801.7,289.0 809.2,281.5 817.0,274.2 825.3,267.5 833.4,260.5"/><polyline points="833.4,260.5 834.7,264.6 835.8,268.8"/><polyline points="769.6,282.6 778.8,286.5 788.1,290.3 795.2,297.7"/><polyline points="789.7,345.2 780.0,347.6 770.0,348.1"/><polyline points="789.7,345.2 795.2,336.5 797.1,326.2 799.3,316.0 805.3,307.4"/><polyline points="831.8,316.9 824.1,315.0 817.9,310.1"/><polyline points="853.5,290.6 847.8,283.2 840.7,276.9 835.8,268.8"/><polyline points="833.7,251.8 834.6,256.2 833.4,260.5"/><polyline points="830.3,194.3 828.0,190.6 827.8,186.3"/><polyline points="827.8,186.3 822.0,177.6 816.7,168.6 809.5,160.9"/><polyline points="757.2,160.3 765.4,155.5 774.0,151.9 782.9,149.1 792.4,148.3"/><polyline points="809.5,160.9 799.8,156.1 792.4,148.3"/><polyline points="803.1,88.2 806.0,91.1 806.5,95.1"/><polyline points="792.4,148.3 793.7,139.2 796.0,130.3 797.7,121.3 799.5,112.2 801.6,103.3 806.5,95.1"/><polyline points="876.0,150.2 878.5,140.4 881.3,130.7 880.2,120.4"/><polyline points="876.0,150.2 864.8,147.5 854.0,143.5 843.8,138.1"/><polyline points="868.9,107.6 857.7,112.2 846.2,114.7 834.2,115.3"/><polyline points="868.9,107.6 873.9,114.6 880.2,120.4"/><polyline points="834.2,115.3 836.1,119.7 836.2,124.5"/><polyline points="850.2,204.3 856.3,196.0 864.2,189.2 868.8,179.6 874.6,171.1 882.2,164.0"/><polyline points="827.8,186.3 830.6,176.5 832.3,166.4 836.8,157.2 840.5,147.7 843.8,138.1"/><polyline points="882.2,164.0 878.9,157.2 876.0,150.2"/><polyline points="809.5,160.9 813.4,152.5 818.0,144.7 824.8,138.5 829.7,130.9 836.2,124.5"/><polyline points="874.1,88.0 869.7,97.3 868.9,107.6"/><polyline points="806.5,95.1 814.7,103.3 823.2,111.0 834.2,115.3"/><polyline points="914.6,164.3 910.3,162.2 905.8,163.6"/><polyline points="914.6,164.3 921.1,159.5 927.6,154.9"/><polyline points="905.8,163.6 902.4,154.8 901.2,145.5 899.8,136.3 896.0,127.6 896.0,118.0"/><polyline points="927.6,154.9 926.1,147.8 928.5,140.9"/><polyline points="928.5,140.9 929.0,137.1 927.7,133.4"/><polyline points="922.0,208.3 919.9,197.3 920.2,186.0 918.9,174.9 914.6,164.3"/><polyline points="882.2,164.0 894.0,164.1 905.8,163.6"/><polyline points="880.2,120.4 888.4,121.3 896.0,118.0"/><polyline points="931.6,128.2 931.2,132.0 927.7,133.4"/><polyline points="1078.1,576.9 1069.7,571.4 1060.7,567.1 1053.2,560.2 1044.1,556.0 1035.7,550.5"/><polyline points="1035.7,550.5 1038.0,541.3 1044.6,534.3 1048.0,525.6 1052.9,517.7 1055.3,508.5 1059.7,500.3 1064.6,492.4"/><polyline points="1028.7,617.0 1034.8,610.0 1043.6,606.5 1051.1,601.3 1057.7,595.0 1065.1,589.8 1073.0,585.0 1078.1,576.9"/><polyline points="1053.9,460.9 1054.6,474.3 1056.7,487.5"/><polyline points="1056.7,487.5 1059.6,491.5 1064.6,492.4"/><polyline points="590.0,539.0 597.8,536.9 604.8,532.9"/><polyline points="594.4,588.3 602.0,588.0 609.4,590.1"/><polyline points="621.8,584.8 626.1,576.0 631.4,567.8 638.3,560.6"/><polyline points="638.3,560.6 635.8,551.4 630.9,543.2"/><polyline points="630.9,543.2 622.4,539.2 613.4,536.7 604.8,532.9"/><polyline points="573.1,620.9 572.0,621.9 570.8,621.0"/><polyline points="573.1,620.9 579.1,627.8 586.3,633.7 591.0,641.7"/><polyline points="570.8,621.0 569.4,630.4 566.8,639.4 564.5,648.5 560.0,657.0"/><polyline points="591.0,641.7 587.9,651.1 585.6,660.7 585.8,670.8"/><polyline points="560.0,657.0 567.5,666.4 577.1,673.7"/><polyline points="577.1,673.7 581.8,673.4 585.8,670.8"/><polyline points="594.4,588.3 589.4,596.6 585.1,605.5 579.8,613.6 573.1,620.9"/><polyline points="617.8,632.5 608.5,634.6 599.7,637.9 591.0,641.7"/><polyline points="602.1,679.4 594.4,674.2 585.8,670.8"/><polyline points="544.5,706.9 552.4,701.6 558.7,694.7 564.6,687.6 570.2,680.0 577.1,673.7"/><polyline points="570.8,621.0 570.2,622.2 569.9,621.0"/><polyline points="560.0,657.0 549.7,652.1 539.3,647.3"/><polyline points="569.9,621.0 561.1,626.2 554.6,634.2 547.0,640.8 539.3,647.3"/><polyline points="345.8,414.1 344.0,420.2 342.6,426.4"/><polyline points="345.8,414.1 353.7,414.8 360.7,418.6"/><polyline points="360.7,418.6 352.0,423.2 342.6,426.4"/><polyline points="337.5,391.3 340.7,403.0 345.8,414.1"/><polyline points="331.2,458.9 333.4,447.5 339.1,437.3 342.6,426.4"/><polyline points="338.9,389.3 348.7,389.3 357.6,384.9 367.3,384.4 376.5,381.0 386.1,379.9"/><polyline points="363.4,419.1 362.1,418.5 360.7,418.6"/><polyline points="433.2,181.2 444.5,178.0 455.8,174.8"/><polyline points="446.0,109.1 450.4,113.6 454.5,118.3"/><polyline points="454.5,118.3 455.9,127.7 456.9,137.1 454.0,146.6 455.7,156.0 454.8,165.4 455.8,174.8"/><polyline points="509.7,104.3 500.9,110.1 491.7,115.3 484.9,123.5"/><polyline points="454.5,118.3 465.0,118.1 474.6,122.7 484.9,123.5"/><polyline points="411.8,644.6 423.3,638.0 434.3,630.7"/><polyline points="411.8,644.6 410.5,642.4 408.0,642.8"/><polyline points="408.0,642.8 401.7,636.0 397.6,627.6 392.1,620.1 385.5,613.5"/><polyline points="434.3,630.7 439.0,623.8 446.0,619.2"/><polyline points="385.1,608.8 394.1,608.5 403.1,607.4 412.1,605.9 421.2,607.0 430.2,605.9"/><polyline points="385.1,608.8 386.2,611.1 385.5,613.5"/><polyline points="430.2,605.9 436.8,614.1 446.0,619.2"/><polyline points="384.3,601.5 383.0,605.3 385.1,608.8"/><polyline points="424.1,600.4 427.5,602.7 430.2,605.9"/><polyline points="430.2,765.8 420.4,764.5 410.6,763.0 401.7,758.3"/><polyline points="430.2,765.8 432.2,755.0 436.8,744.9"/><polyline points="401.6,757.8 401.5,748.6 405.4,740.1 407.6,731.3 407.0,722.1"/><polyline points="426.9,729.1 421.5,727.5 417.3,723.6"/><polyline points="407.0,722.1 412.4,721.0 417.3,723.6"/><polyline points="361.3,727.9 370.1,722.0 377.7,714.5 386.1,708.1 394.9,702.1"/><polyline points="407.0,722.1 401.1,712.0 394.9,702.1"/><polyline points="333.1,705.7 338.9,698.4 345.4,691.9 352.3,685.8 360.2,680.8"/><polyline points="360.2,680.8 368.5,686.5 377.8,690.5 386.5,695.5 394.9,701.2"/><polyline points="394.9,702.1 392.8,701.7 394.9,701.2"/><polyline points="356.7,671.4 365.5,665.1 372.4,656.8 379.5,648.8"/><polyline points="356.7,671.4 347.3,661.7 336.1,654.2"/><polyline points="379.5,648.8 370.2,644.0 363.4,636.3 355.9,629.5"/><polyline points="336.1,654.2 335.0,641.9 335.8,629.6"/><polyline points="335.8,629.6 345.8,628.8 355.9,629.5"/><polyline points="360.2,680.8 358.5,676.1 356.7,671.4"/><polyline points="411.8,644.6 411.9,656.3 410.6,667.9 411.9,679.5"/><polyline points="408.0,642.8 398.1,643.1 388.9,646.3 379.5,648.8"/><polyline points="411.9,679.5 404.8,685.7 400.3,693.8 394.9,701.2"/><polyline points="324.8,662.5 331.3,659.5 336.1,654.2"/><polyline points="385.5,613.5 376.3,620.1 365.2,623.2 355.9,629.5"/><polyline points="333.6,626.3 335.4,627.5 335.8,629.6"/><polyline points="477.6,872.5 471.7,880.3 465.1,887.4 459.7,895.6 454.3,903.7 447.4,910.7"/><polyline points="501.1,894.2 494.9,905.2 492.2,917.5"/><polyline points="456.1,924.3 465.0,921.8 473.8,918.8 483.0,918.4 492.2,917.5"/><polyline points="456.1,924.3 451.9,918.3 445.2,915.5"/><polyline points="447.4,910.7 444.6,912.3 445.2,915.5"/><polyline points="394.7,812.8 404.0,819.3 413.6,825.2 424.3,829.2"/><polyline points="403.6,805.3 412.5,809.5 420.9,814.9 429.4,820.0 439.5,821.4"/><polyline points="424.3,829.2 431.4,824.3 439.5,821.4"/><polyline points="351.8,804.3 360.2,814.9 370.7,823.4"/><polyline points="370.7,823.4 382.5,817.6 394.7,812.8"/><polyline points="400.4,760.4 402.3,769.9 405.0,779.2 408.1,788.5 408.4,798.3"/><polyline points="408.4,798.3 407.2,802.6 403.6,805.3"/><polyline points="522.6,967.0 518.3,960.7 514.0,954.4"/><polyline points="549.6,955.6 541.5,949.2 533.2,942.9"/><polyline points="499.8,971.9 501.8,975.5 505.1,977.9"/><polyline points="499.8,971.9 507.2,964.0 511.6,954.1"/><polyline points="511.6,954.1 512.8,954.3 514.0,954.4"/><polyline points="473.0,981.9 473.9,976.4 478.5,973.1"/><polyline points="434.3,967.6 442.0,962.3 449.8,957.3 458.1,952.9 464.5,945.8"/><polyline points="464.5,945.8 467.0,945.3 468.3,947.6"/><polyline points="468.3,947.6 473.5,955.4 476.2,964.2 478.5,973.1"/><polyline points="946.4,523.9 955.4,520.1 963.8,515.6 971.2,509.3 978.9,503.7"/><polyline points="976.8,500.6 979.6,500.9 978.9,503.7"/><polyline points="1015.3,527.2 1006.1,517.9 995.0,511.0"/><polyline points="1015.3,527.2 1020.4,539.2 1026.3,550.8"/><polyline points="1026.3,550.8 1016.8,556.2 1007.4,561.7 1000.5,570.4"/><polyline points="993.9,511.4 994.2,510.3 995.0,511.0"/><polyline points="993.9,511.4 987.6,518.8 985.2,528.4 980.6,536.7 974.9,544.5 968.5,551.8 965.3,561.0"/><polyline points="1000.5,570.4 987.9,566.6 974.9,565.5"/><polyline points="974.9,565.5 970.9,561.5 965.3,561.0"/><polyline points="1020.6,481.7 1030.5,484.1 1040.9,484.0 1050.5,487.6"/><polyline points="1020.6,481.7 1015.5,484.6 1010.4,487.5"/><polyline points="1050.5,487.6 1044.6,496.5 1038.3,505.1 1029.0,511.0 1022.4,519.3 1015.3,527.2"/><polyline points="1010.4,487.5 1005.7,495.6 1001.5,504.1 995.0,511.0"/><polyline points="1056.7,487.5 1053.6,487.1 1050.5,487.6"/><polyline points="1035.7,550.5 1031.0,549.8 1026.3,550.8"/><polyline points="1020.7,614.5 1017.0,605.6 1014.5,596.0 1010.0,587.4 1003.5,579.7 1000.5,570.4"/><polyline points="959.9,560.8 962.6,560.9 965.3,561.0"/><polyline points="978.9,503.7 986.7,507.0 993.9,511.4"/><polyline points="978.6,635.6 979.3,637.7 980.8,636.0"/><polyline points="966.9,636.4 972.8,637.3 978.6,635.6"/><polyline points="900.7,548.2 890.2,544.5 879.2,543.1 868.1,542.4"/><polyline points="887.9,519.7 877.0,523.3 867.0,528.9"/><polyline points="868.1,542.4 866.8,535.7 867.0,528.9"/><polyline points="766.0,370.9 775.6,373.2 785.1,375.8 794.7,378.2 803.2,383.9 812.3,387.9 821.5,391.3 831.6,392.1"/><polyline points="789.7,345.2 797.6,350.1 804.3,356.4 812.3,361.3 816.9,369.9 825.1,374.5 832.4,380.1 838.3,387.4"/><polyline points="831.6,392.1 834.4,388.9 838.3,387.4"/><polyline points="990.2,342.7 995.2,331.1 999.3,319.1"/><polyline points="936.8,319.8 936.1,330.6 938.7,341.0 939.7,351.5 942.6,361.8"/><polyline points="944.1,363.3 941.9,364.1 942.6,361.8"/><polyline points="858.7,360.6 859.5,368.8 856.1,376.3"/><polyline points="838.3,387.4 841.8,385.1 846.0,385.2"/><polyline points="856.1,376.3 850.9,380.6 846.0,385.2"/><polyline points="884.9,459.1 884.5,449.5 886.9,440.2"/><polyline points="884.9,459.1 894.6,462.6 904.9,464.6"/><polyline points="886.9,440.2 898.1,437.0 908.9,432.7"/><polyline points="904.9,464.6 906.9,454.1 908.3,443.4 908.9,432.7"/><polyline points="937.3,501.7 942.9,493.9 946.5,485.0"/><polyline points="907.3,482.8 908.0,478.9 908.9,475.0"/><polyline points="908.9,475.0 919.6,473.3 930.2,471.4 940.0,466.7"/><polyline points="940.0,466.7 940.8,469.9 943.1,472.3"/><polyline points="946.5,485.0 946.5,478.2 943.1,472.3"/><polyline points="976.8,500.6 974.0,492.6 969.8,485.2"/><polyline points="946.5,485.0 958.1,485.6 969.8,485.2"/><polyline points="1010.4,487.5 1000.2,481.5 989.4,476.8 979.0,471.3"/><polyline points="969.8,485.2 974.1,478.1 979.0,471.3"/><polyline points="1022.4,373.3 1017.0,381.6 1010.8,389.2 1003.8,396.1 996.7,402.8"/><polyline points="990.2,342.7 989.7,352.4 985.7,361.7 986.2,371.6 984.9,381.2 984.8,391.0 981.9,400.4"/><polyline points="996.7,402.8 989.3,401.4 981.9,400.4"/><polyline points="1042.0,415.8 1031.2,415.5 1021.1,412.3 1011.3,407.6 1000.7,406.7"/><polyline points="996.7,402.8 999.9,403.5 1000.7,406.7"/><polyline points="1044.7,445.4 1033.0,444.1 1021.6,447.7 1009.9,447.4"/><polyline points="1000.7,406.7 1001.9,417.1 1005.9,426.9 1008.5,437.0 1009.9,447.4"/><polyline points="1020.6,481.7 1018.3,470.6 1013.5,460.4 1009.4,449.9"/><polyline points="979.0,471.3 977.4,467.1 978.1,462.7"/><polyline points="1009.4,449.9 998.5,453.1 988.0,457.0 978.1,462.7"/><polyline points="943.1,472.3 953.8,466.9 965.5,464.6 977.0,461.5"/><polyline points="978.1,462.7 978.9,460.9 977.0,461.5"/><polyline points="862.1,682.2 868.0,674.4 873.8,666.6"/><polyline points="832.1,660.3 842.9,652.2 851.6,641.8"/><polyline points="832.1,660.3 830.8,672.1 828.7,683.7"/><polyline points="851.6,641.8 857.6,651.3 865.8,658.8 873.8,666.6"/><polyline points="768.7,659.9 769.3,658.1 771.2,658.2"/><polyline points="719.5,644.8 724.6,636.1 727.6,626.6 730.7,617.2"/><polyline points="730.7,617.2 740.4,617.6 749.4,620.1 758.0,624.6"/><polyline points="758.0,624.6 763.0,629.8 768.8,634.2"/><polyline points="768.8,634.2 771.7,646.0 771.2,658.2"/><polyline points="817.7,694.1 809.2,687.6 801.6,680.1 792.7,674.3 786.1,665.5 777.0,659.9"/><polyline points="771.2,658.2 773.5,661.0 777.0,659.9"/><polyline points="913.8,710.8 911.9,701.8 908.3,693.5"/><polyline points="913.8,710.8 925.3,708.7 936.7,706.1 948.0,703.2"/><polyline points="908.3,693.5 915.7,685.8 922.6,677.5 931.4,671.4 940.1,665.1"/><polyline points="948.0,703.2 951.2,699.4 953.3,695.0"/><polyline points="953.3,695.0 954.6,694.1 953.4,693.0"/><polyline points="902.9,727.9 909.7,720.2 913.8,710.8"/><polyline points="898.6,686.7 902.6,691.4 908.3,693.5"/><polyline points="898.6,686.7 890.8,693.2 881.9,698.2"/><polyline points="950.0,737.5 949.0,726.0 949.0,714.6 948.0,703.2"/><polyline points="995.9,676.1 988.0,681.0 979.9,685.4 971.7,689.5 962.0,689.9 953.4,693.0"/><polyline points="943.6,646.0 942.2,650.8 938.3,653.7"/><polyline points="938.3,653.7 937.7,659.6 940.1,665.1"/><polyline points="996.1,722.8 988.0,716.5 979.0,711.6 969.7,707.2 960.9,701.9 953.3,695.0"/><polyline points="828.9,934.9 821.8,940.7 812.9,943.3"/><polyline points="832.6,954.2 823.7,947.0 812.9,943.3"/><polyline points="832.5,932.5 829.9,932.5 828.9,934.9"/><polyline points="840.9,962.4 837.3,957.7 832.6,954.2"/><polyline points="688.5,615.6 695.7,616.4 702.8,614.9"/><polyline points="688.5,615.6 684.1,604.6 677.7,594.6"/><polyline points="678.0,592.7 676.9,593.5 677.7,594.6"/><polyline points="708.5,607.1 707.0,612.0 702.8,614.9"/><polyline points="678.6,636.7 683.3,626.0 688.5,615.6"/><polyline points="661.5,636.4 666.4,626.3 669.9,615.6 675.4,605.7 677.7,594.6"/><polyline points="676.1,587.5 668.4,592.6 659.1,594.6 651.8,600.6 643.1,603.8"/><polyline points="676.1,587.5 675.2,590.8 678.0,592.7"/><polyline points="712.2,606.2 719.7,605.8 726.6,609.0"/><polyline points="712.2,606.2 709.9,604.7 708.5,607.1"/><polyline points="730.7,617.2 727.0,613.9 726.6,609.0"/><polyline points="639.3,560.8 646.4,554.1 654.1,548.4 662.3,543.2"/><polyline points="639.3,560.8 650.3,563.1 659.9,568.8 670.2,573.0"/><polyline points="683.6,551.3 672.8,547.7 662.3,543.2"/><polyline points="683.6,551.3 681.4,554.7 682.0,558.8"/><polyline points="682.0,558.8 675.7,565.6 670.2,573.0"/><polyline points="676.1,587.5 677.8,587.4 676.1,587.2"/><polyline points="670.2,573.0 674.6,579.5 676.1,587.2"/><polyline points="719.0,552.5 718.6,557.2 721.4,560.9"/><polyline points="719.0,552.5 715.7,549.9 714.7,545.8"/><polyline points="683.6,551.3 683.5,550.4 684.2,549.8"/><polyline points="684.2,549.8 686.6,550.1 687.3,547.8"/><polyline points="682.0,558.8 691.2,560.8 700.1,564.2 709.4,565.9"/><polyline points="748.2,564.2 752.2,574.3 754.1,585.0"/><polyline points="779.7,589.4 770.0,589.4 760.3,588.9"/><polyline points="779.7,589.4 778.0,578.8 777.3,568.2 777.8,557.4 778.5,546.7 777.3,536.1"/><polyline points="777.3,536.1 774.9,535.1 772.4,535.8"/><polyline points="760.3,588.9 757.0,587.3 754.1,585.0"/><polyline points="719.0,552.5 726.7,546.9 734.7,541.8 742.0,535.8 749.3,529.9 753.7,520.7"/><polyline points="753.7,520.7 762.3,529.1 772.4,535.8"/><polyline points="721.4,560.9 723.7,560.4 724.0,562.8"/><polyline points="724.0,562.8 736.2,561.4 748.2,564.2"/><polyline points="730.1,602.0 738.7,597.2 747.5,592.6 754.1,585.0"/><polyline points="730.1,602.0 726.5,589.3 722.8,576.6"/><polyline points="724.0,562.8 725.5,569.8 722.8,576.6"/><polyline points="797.0,599.2 795.7,604.2 792.8,608.4"/><polyline points="797.0,599.2 788.9,593.3 779.7,589.4"/><polyline points="758.0,624.6 759.7,612.7 758.4,600.7 760.3,588.9"/><polyline points="792.8,608.4 785.7,617.9 776.6,625.4 768.8,634.2"/><polyline points="726.6,609.0 729.5,606.1 730.1,602.0"/><polyline points="563.5,484.7 570.3,478.3 579.2,475.7"/><polyline points="604.8,532.9 605.5,522.4 604.5,511.8 607.6,501.5 606.7,490.9 606.4,480.4 608.0,470.0"/><polyline points="579.2,475.7 589.2,475.8 598.7,473.2 608.0,470.0"/><polyline points="641.6,526.2 642.1,515.0 642.5,503.8"/><polyline points="642.5,503.8 635.4,497.3 629.0,490.2 624.5,481.5 619.0,473.7 611.3,467.8"/><polyline points="608.0,470.0 610.3,469.9 611.3,467.8"/><polyline points="642.5,503.8 653.7,501.6 665.1,500.8"/><polyline points="674.2,462.0 670.2,454.3 664.4,447.6"/><polyline points="611.3,467.8 618.2,458.4 623.0,447.9"/><polyline points="664.4,447.6 654.1,449.3 643.7,447.0 633.4,449.3 623.0,447.9"/><polyline points="492.5,466.4 488.2,457.3 481.2,449.9"/><polyline points="492.5,466.4 486.1,473.8 477.3,478.5 471.2,486.2 463.6,492.2"/><polyline points="481.2,449.9 471.9,453.7 464.3,460.5 454.9,464.2 445.3,467.3 437.2,473.4"/><polyline points="463.6,492.2 454.8,486.0 446.8,478.6 437.2,473.4"/><polyline points="480.3,528.7 487.2,520.7 495.6,514.3 501.0,504.9 508.1,497.2 516.4,490.6"/><polyline points="480.3,528.7 474.7,520.3 470.5,511.2 466.9,501.8 463.6,492.2"/><polyline points="516.4,490.6 509.0,482.0 501.6,473.3 492.5,466.4"/><polyline points="412.6,477.2 425.0,475.7 437.2,473.4"/><polyline points="466.3,422.3 474.8,421.0 482.9,423.9"/><polyline points="482.9,423.9 482.6,436.9 481.2,449.9"/><polyline points="422.7,534.9 432.3,537.1 441.3,540.8 451.3,541.7 460.1,546.4 469.3,549.6"/><polyline points="480.3,528.7 475.9,539.7 469.3,549.6"/><polyline points="531.9,486.0 530.6,474.9 532.5,463.9 533.5,452.8"/><polyline points="482.9,423.9 487.4,416.5 493.4,410.2"/><polyline points="533.5,452.8 526.1,446.4 519.6,439.1 513.1,431.9 506.9,424.4 499.4,418.0 493.4,410.2"/><polyline points="533.5,452.8 538.3,443.0 545.4,434.7 552.0,426.0"/><polyline points="623.0,447.9 620.7,438.6 616.6,430.0 613.3,421.0 611.8,411.5 608.2,402.7 603.6,394.2"/><polyline points="603.6,394.2 594.3,398.1 585.8,403.4 577.0,407.9 568.4,412.9 559.9,418.1 552.1,424.4"/><polyline points="560.7,575.4 551.7,579.0 543.3,584.0 534.3,587.9"/><polyline points="569.9,621.0 562.1,614.7 552.7,611.3 543.2,608.0 535.7,601.1"/><polyline points="535.7,601.1 534.3,594.6 534.3,587.9"/><polyline points="534.3,587.9 526.2,583.0 520.6,575.2"/><polyline points="536.6,530.3 527.3,535.6 521.0,544.3 512.4,550.2 506.0,558.8 497.4,564.8"/><polyline points="520.6,575.2 509.4,569.3 497.4,564.8"/><polyline points="469.3,549.6 471.4,555.9 475.6,560.9"/><polyline points="448.4,618.4 454.2,611.0 457.9,602.6 462.7,594.7 466.5,586.4 471.3,578.6 473.5,569.4"/><polyline points="448.4,618.4 447.4,619.4 446.0,619.2"/><polyline points="552.1,424.4 542.6,421.4 534.1,416.8 527.1,409.3 517.8,406.1 510.2,399.7 501.3,395.6"/><polyline points="493.4,410.2 495.8,403.5 499.6,397.4"/><polyline points="416.4,240.5 415.7,251.6 411.5,262.0 410.2,272.9"/><polyline points="410.2,272.9 399.1,272.6 388.3,275.8 377.3,277.6 366.2,275.3"/><polyline points="362.9,255.3 365.4,265.2 366.2,275.3"/><polyline points="355.0,244.3 358.4,250.2 362.9,255.3"/><polyline points="411.8,210.5 416.6,222.0 421.5,233.4"/><polyline points="317.3,278.9 324.6,287.0 334.9,290.8 342.9,297.9"/><polyline points="315.8,332.8 322.9,324.3 330.4,316.1 335.8,306.4 342.9,297.9"/><polyline points="366.2,275.3 362.9,284.7 360.6,294.4"/><polyline points="342.9,297.9 352.0,297.1 360.6,294.4"/><polyline points="478.0,178.5 482.7,168.8 487.7,159.2 493.4,149.9 495.6,139.1"/><polyline points="478.0,178.5 488.3,179.9 498.6,178.4 509.0,178.7"/><polyline points="509.0,178.7 515.2,171.5 521.3,164.2"/><polyline points="521.3,164.2 514.3,153.3 506.3,143.1"/><polyline points="495.6,139.1 501.7,139.3 506.3,143.1"/><polyline points="484.9,123.5 491.6,130.3 495.6,139.1"/><polyline points="455.8,174.8 462.8,178.0 469.3,181.9"/><polyline points="469.3,181.9 474.1,181.3 478.0,178.5"/><polyline points="529.4,123.6 521.8,130.2 514.6,137.3 506.3,143.1"/><polyline points="529.4,123.6 534.2,132.3 536.7,141.7 538.9,151.3 542.2,160.5"/><polyline points="542.2,160.5 531.6,161.4 521.3,164.2"/><polyline points="530.0,120.3 529.6,122.0 529.4,123.6"/><polyline points="420.7,681.5 427.4,688.7 435.5,694.3 442.9,700.7 450.2,707.3"/><polyline points="420.7,681.5 429.7,680.0 438.5,677.2 447.6,677.1 456.7,676.0"/><polyline points="476.2,689.7 467.1,684.0 459.1,676.7"/><polyline points="450.8,707.4 450.7,706.0 450.2,707.3"/><polyline points="459.1,676.7 457.8,676.8 456.7,676.0"/><polyline points="411.9,679.5 416.3,680.6 420.7,681.5"/><polyline points="417.3,723.6 425.6,719.7 434.7,717.4 442.5,712.5 450.2,707.3"/><polyline points="467.9,742.0 478.5,742.4 489.1,741.6"/><polyline points="467.9,742.0 465.4,740.5 462.9,738.9"/><polyline points="484.3,690.4 492.3,696.9 499.4,704.5 507.4,711.0"/><polyline points="454.9,729.2 453.0,718.3 450.8,707.4"/><polyline points="488.0,670.4 485.1,658.9 479.8,648.2 477.1,636.6"/><polyline points="488.0,670.4 486.9,680.5 484.3,690.4"/><polyline points="477.1,636.6 473.6,633.0 468.6,633.2"/><polyline points="468.6,633.2 467.0,644.2 464.4,655.0 461.6,665.8 459.1,676.7"/><polyline points="448.4,618.4 458.2,626.1 468.6,633.2"/><polyline points="456.1,924.3 461.1,934.8 464.5,945.8"/><polyline points="445.2,915.5 438.1,919.5 430.0,919.7"/><polyline points="428.2,920.5 429.0,919.9 430.0,919.7"/><polyline points="434.6,792.2 436.7,802.0 439.9,811.4 443.8,820.6"/><polyline points="434.6,792.2 437.6,790.1 437.3,786.5"/><polyline points="437.3,786.5 447.6,792.1 458.5,796.0 470.2,797.6"/><polyline points="443.8,820.6 455.0,824.4 464.1,831.9"/><polyline points="464.1,831.9 469.8,820.3 471.5,807.5"/><polyline points="471.5,807.5 472.0,802.4 470.2,797.6"/><polyline points="408.4,798.3 421.4,794.8 434.6,792.2"/><polyline points="439.5,821.4 441.5,820.0 443.8,820.6"/><polyline points="501.9,799.1 491.7,801.5 481.7,804.7 471.5,807.5"/><polyline points="473.0,850.6 467.8,841.6 464.1,831.9"/><polyline points="437.8,772.1 438.6,773.2 438.3,774.7"/><polyline points="438.3,774.7 447.6,775.5 456.3,778.6 465.2,781.3 474.1,783.4"/><polyline points="453.3,761.1 460.6,768.0 466.8,776.2 475.5,781.6"/><polyline points="475.5,781.6 475.2,782.8 474.1,783.4"/><polyline points="430.2,765.8 434.7,768.1 437.8,772.1"/><polyline points="437.3,786.5 436.7,780.5 438.3,774.7"/><polyline points="467.9,742.0 461.8,752.5 453.3,761.1"/><polyline points="495.9,765.7 484.9,772.6 475.5,781.6"/><polyline points="529.4,928.6 517.6,929.2 506.3,932.4 495.1,935.7"/><polyline points="529.4,928.6 530.4,929.8 529.9,931.2"/><polyline points="529.9,931.2 520.6,935.0 512.3,940.3 504.2,946.2"/><polyline points="504.2,946.2 500.5,941.6 495.3,938.9"/><polyline points="495.3,938.9 494.1,938.9 494.7,937.9"/><polyline points="495.1,935.7 492.9,936.4 494.7,937.9"/><polyline points="492.2,917.5 494.3,926.5 495.1,935.7"/><polyline points="535.2,898.6 535.2,909.0 531.8,918.7 529.4,928.6"/><polyline points="533.2,942.9 529.7,937.6 529.9,931.2"/><polyline points="511.6,954.1 506.5,951.5 504.2,946.2"/><polyline points="488.9,970.0 491.4,959.7 495.4,949.7 495.3,938.9"/><polyline points="468.3,947.6 477.7,946.0 486.1,941.7 494.7,937.9"/><polyline points="737.4,415.0 739.9,415.7 740.3,418.2"/><polyline points="729.3,491.3 734.6,483.5 740.7,476.3 744.6,467.8"/><polyline points="729.3,491.3 725.7,492.1 722.2,493.4"/><polyline points="722.2,493.4 713.4,489.4 705.2,484.4 698.5,477.3 690.7,471.7 681.6,468.2 674.2,462.0"/><polyline points="664.4,447.6 670.6,440.8 677.3,434.4 683.0,427.2 691.1,422.2 696.1,414.2"/><polyline points="740.3,418.2 743.3,428.0 744.5,437.8 744.1,447.8 743.1,457.9 744.6,467.8"/><polyline points="831.6,392.1 823.9,399.9 816.8,408.2 808.8,415.7"/><polyline points="740.3,418.2 750.0,415.7 759.9,418.5 769.7,416.8 779.4,416.7 789.2,415.8 798.9,414.3 808.8,415.7"/><polyline points="860.1,424.4 858.0,414.0 851.9,405.2 849.9,394.9 846.0,385.2"/><polyline points="860.1,424.4 869.5,428.9 878.8,433.5 886.9,440.2"/><polyline points="856.1,376.3 867.4,380.8 879.2,383.7"/><polyline points="908.9,432.7 910.5,432.6 910.5,431.0"/><polyline points="942.6,361.8 934.6,367.2 925.5,370.4 916.3,373.2 908.6,379.1 899.6,382.5"/><polyline points="879.2,383.7 889.5,384.8 899.6,382.5"/><polyline points="940.5,452.6 936.4,451.5 934.3,447.8"/><polyline points="934.3,447.8 927.3,439.6 921.6,430.6"/><polyline points="921.6,430.6 926.4,422.8 933.0,416.4"/><polyline points="933.0,416.4 942.1,412.4 951.6,409.2 959.6,402.9"/><polyline points="965.5,441.1 968.5,430.9 973.1,421.3 977.4,411.6 978.6,400.9"/><polyline points="959.6,402.9 965.2,399.4 971.8,398.3"/><polyline points="971.8,398.3 974.7,400.9 978.6,400.9"/><polyline points="940.0,466.7 939.1,459.6 940.5,452.6"/><polyline points="977.0,461.5 971.6,451.1 965.5,441.1"/><polyline points="905.6,465.6 915.8,460.7 924.1,452.8 934.3,447.8"/><polyline points="910.5,431.0 916.0,429.0 921.6,430.6"/><polyline points="899.6,382.5 904.9,383.8 907.6,388.6"/><polyline points="907.6,388.6 915.3,394.3 921.2,401.6 926.9,409.2 933.0,416.4"/><polyline points="907.6,388.6 918.2,390.4 928.1,395.1 938.8,396.9 949.2,400.0 959.6,402.9"/><polyline points="944.1,363.3 952.1,371.2 959.9,379.3 964.2,390.1 971.8,398.3"/><polyline points="865.6,597.1 874.1,601.0 882.2,605.5 889.7,611.1"/><polyline points="938.3,653.7 932.5,652.0 926.7,653.5"/><polyline points="926.7,653.5 919.7,646.7 913.1,639.5 904.9,633.7 898.6,626.2 892.6,618.4"/><polyline points="892.6,618.4 890.5,615.0 889.7,611.1"/><polyline points="832.1,660.3 826.3,653.0 820.3,645.9"/><polyline points="777.0,659.9 776.6,657.7 778.4,659.1"/><polyline points="778.4,659.1 788.6,654.8 799.4,652.7 810.1,650.1 820.3,645.9"/><polyline points="846.2,594.0 839.2,601.4 832.9,609.3 830.3,619.6 824.9,628.1 818.4,635.8"/><polyline points="846.2,594.0 851.5,598.2 858.2,598.7"/><polyline points="851.6,641.8 852.8,629.9 856.8,618.4 858.2,606.5"/><polyline points="858.2,598.7 856.4,602.6 858.2,606.5"/><polyline points="820.3,645.9 818.7,641.0 818.4,635.8"/><polyline points="710.1,507.4 706.0,513.9 700.7,519.5"/><polyline points="710.1,507.4 710.9,507.5 710.1,507.3"/><polyline points="710.1,507.3 698.7,507.1 687.4,509.3 676.0,509.8"/><polyline points="700.7,519.5 692.7,525.1 685.0,531.1 676.1,535.2"/><polyline points="676.0,509.8 673.8,519.0 668.3,526.7"/><polyline points="668.3,526.7 670.3,528.4 670.3,530.9"/><polyline points="670.3,530.9 673.2,533.0 676.1,535.2"/><polyline points="714.7,545.8 714.7,536.1 714.0,526.4 712.9,516.8 710.1,507.4"/><polyline points="687.3,547.8 691.5,538.3 697.7,529.6 700.7,519.5"/><polyline points="729.3,491.3 736.5,497.7 741.1,506.3 748.5,512.6 753.7,520.7"/><polyline points="722.2,493.4 717.3,501.3 710.1,507.3"/><polyline points="665.1,500.8 670.7,505.2 676.0,509.8"/><polyline points="684.2,549.8 678.8,543.2 676.1,535.2"/><polyline points="641.6,526.2 655.0,526.0 668.3,526.7"/><polyline points="662.3,543.2 665.4,536.5 670.3,530.9"/><polyline points="694.6,582.0 697.0,578.5 701.4,578.5"/><polyline points="694.6,582.0 701.1,590.4 710.1,595.9"/><polyline points="701.4,578.5 705.7,582.9 710.3,586.9"/><polyline points="710.1,595.9 710.3,591.4 710.3,586.9"/><polyline points="676.1,587.2 685.9,586.7 694.6,582.0"/><polyline points="709.4,565.9 703.6,571.1 701.4,578.5"/><polyline points="712.2,606.2 710.7,601.2 710.1,595.9"/><polyline points="722.8,576.6 716.8,582.0 710.3,586.9"/><polyline points="696.1,414.2 689.4,406.5 680.8,401.1 674.0,393.6 665.7,387.7 659.2,380.0 652.0,373.0"/><polyline points="652.0,373.0 642.2,372.3 632.9,374.2 623.4,375.4 614.0,376.8 604.7,379.5"/><polyline points="697.7,342.7 691.6,338.2 684.5,335.4"/><polyline points="652.0,373.0 659.6,366.5 664.0,357.1 670.7,349.7 677.5,342.5 684.5,335.4"/><polyline points="520.5,624.0 523.9,637.0 531.1,648.2"/><polyline points="508.0,656.6 502.1,649.0 495.4,641.9 490.6,633.4"/><polyline points="508.0,656.6 518.1,655.7 528.2,654.5"/><polyline points="490.6,633.4 499.4,629.1 507.7,623.8"/><polyline points="528.2,654.5 527.7,650.5 531.1,648.2"/><polyline points="535.7,601.1 529.0,607.6 523.3,614.9 520.5,624.0"/><polyline points="539.3,647.3 535.0,645.7 531.1,648.2"/><polyline points="488.0,670.4 497.0,662.0 508.0,656.6"/><polyline points="477.1,636.6 483.7,634.6 490.6,633.4"/><polyline points="532.3,705.8 532.0,695.5 529.5,685.3 529.8,675.0 530.5,664.6 528.2,654.5"/><polyline points="419.3,291.6 415.3,300.9 408.3,308.2"/><polyline points="419.3,291.6 416.4,281.4 410.2,272.9"/><polyline points="360.6,294.4 368.5,302.5 375.2,311.5"/><polyline points="404.4,384.6 409.7,379.8 415.5,375.7"/><polyline points="499.6,397.4 491.2,392.4 482.4,388.8 473.1,386.3 464.5,382.3 454.5,382.0 445.4,378.9 436.7,375.0 427.6,372.0"/><polyline points="415.5,375.7 421.4,373.1 427.6,372.0"/><polyline points="542.2,160.5 547.5,163.5 553.5,163.7"/><polyline points="509.0,178.7 512.6,187.5 516.9,195.9 519.5,205.1 523.1,213.9 527.8,222.2"/><polyline points="553.5,163.7 548.5,173.2 548.5,184.2 545.9,194.4 543.3,204.6 538.2,214.1"/><polyline points="527.8,222.2 533.6,218.9 538.2,214.1"/><polyline points="469.3,181.9 471.3,192.3 471.1,203.1 472.2,213.6 477.1,223.4"/><polyline points="527.8,222.2 522.8,229.0 521.0,237.3"/><polyline points="521.0,237.3 514.9,238.6 510.2,242.7"/><polyline points="510.2,242.7 501.5,238.5 493.7,232.9 484.7,229.5 477.1,223.4"/><polyline points="421.5,233.4 430.5,236.6 439.8,238.6"/><polyline points="439.8,238.6 448.4,233.0 458.6,231.4 468.2,228.2 477.1,223.4"/><polyline points="630.1,149.0 629.5,152.7 632.7,154.7"/><polyline points="645.5,153.9 642.7,154.9 639.6,155.4"/><polyline points="632.7,154.7 636.1,155.7 639.6,155.4"/><polyline points="424.3,829.2 417.9,839.8 413.0,851.3"/><polyline points="413.0,851.3 404.5,846.4 396.4,840.6 388.8,834.1 380.6,828.6 371.1,825.3"/><polyline points="327.0,864.2 334.2,857.7 342.0,851.7 348.2,844.1 355.0,837.1 362.9,831.4 370.9,825.8"/><polyline points="370.9,825.8 371.8,825.7 371.1,825.3"/><polyline points="428.2,920.5 421.1,912.3 414.7,903.5 405.7,897.2"/><polyline points="430.0,919.7 426.7,909.9 425.4,899.9 427.3,889.5 425.5,879.6"/><polyline points="425.5,879.6 414.8,887.5 405.7,897.2"/><polyline points="447.4,910.7 442.7,901.2 439.3,891.1 435.8,881.1 428.9,872.6"/><polyline points="425.5,879.6 427.9,876.4 428.9,872.6"/><polyline points="472.0,854.1 461.8,857.6 450.9,858.3 440.4,860.6 430.2,864.5"/><polyline points="413.0,851.3 417.1,854.1 417.5,859.1"/><polyline points="430.2,864.5 423.9,861.6 417.5,859.1"/><polyline points="430.2,864.5 427.6,868.2 428.9,872.6"/><polyline points="850.1,530.8 851.4,536.4 852.4,542.1"/><polyline points="849.8,530.1 838.8,532.2 828.7,537.1"/><polyline points="852.4,542.1 849.5,551.0 844.3,559.0 842.0,568.1 839.2,577.1 834.5,585.3"/><polyline points="828.7,537.1 824.7,546.2 821.6,555.5 818.6,565.0"/><polyline points="818.6,565.0 824.8,574.9 831.6,584.4"/><polyline points="868.1,542.4 860.2,543.4 852.4,542.1"/><polyline points="867.0,528.9 858.5,529.6 850.1,530.8"/><polyline points="846.2,594.0 841.5,588.2 834.5,585.3"/><polyline points="858.2,598.7 862.2,599.4 865.6,597.1"/><polyline points="797.0,599.2 805.1,594.3 813.4,589.7 822.5,587.1 831.6,584.4"/><polyline points="784.0,534.7 780.4,533.8 777.3,536.1"/><polyline points="784.0,534.7 791.5,540.2 796.7,548.1 804.8,552.9 812.7,557.8 818.6,565.0"/><polyline points="884.9,459.1 875.9,464.6 866.9,470.0 858.1,475.6"/><polyline points="860.1,424.4 857.8,433.4 858.5,442.9 857.1,452.1 854.5,461.1 854.6,470.5"/><polyline points="858.1,475.6 855.7,473.5 854.6,470.5"/><polyline points="808.8,415.7 809.3,425.5 808.3,435.5 810.2,445.3 811.4,455.1"/><polyline points="854.6,470.5 845.3,469.1 836.4,466.8 828.9,460.7 819.6,459.5 811.4,455.1"/><polyline points="884.2,663.2 881.7,657.2 882.7,650.8"/><polyline points="884.2,663.2 888.9,664.9 894.0,665.3"/><polyline points="882.7,650.8 887.1,642.1 893.1,634.5"/><polyline points="894.0,665.3 901.8,663.0 908.2,657.9"/><polyline points="908.2,657.9 902.5,650.5 896.7,643.2 893.1,634.5"/><polyline points="873.8,666.6 879.2,665.6 884.2,663.2"/><polyline points="858.2,606.5 862.3,615.8 866.7,625.0 872.4,633.4 877.9,641.9 882.7,650.8"/><polyline points="898.6,686.7 896.8,675.9 894.0,665.3"/><polyline points="892.6,618.4 894.4,626.4 893.1,634.5"/><polyline points="926.7,653.5 917.7,656.7 908.2,657.9"/><polyline points="795.9,614.0 798.3,625.6 804.0,636.1"/><polyline points="817.6,635.6 810.9,637.9 804.0,636.1"/><polyline points="818.4,635.8 818.4,633.7 817.6,635.6"/><polyline points="706.7,274.2 695.2,280.0 686.2,289.1"/><polyline points="684.5,335.4 681.4,327.5 679.9,319.2"/><polyline points="679.9,319.2 681.5,309.1 684.0,299.2 686.2,289.1"/><polyline points="680.4,228.3 672.9,233.9 665.5,239.4 658.1,245.0 652.1,252.4 643.9,257.0"/><polyline points="686.2,289.1 682.0,285.6 676.5,284.7"/><polyline points="371.9,338.3 375.7,344.9 376.2,352.4"/><polyline points="371.9,338.3 363.0,336.3 353.8,338.5 344.9,335.8 335.9,334.9 326.8,334.2 317.7,335.2"/><polyline points="323.4,353.5 322.6,343.7 317.7,335.2"/><polyline points="377.4,358.1 376.4,355.3 376.2,352.4"/><polyline points="415.9,322.2 412.8,314.8 408.3,308.2"/><polyline points="415.9,322.2 407.0,327.0 398.2,331.9 390.6,338.5 383.9,346.1 376.2,352.4"/><polyline points="375.2,311.5 375.4,325.1 371.9,338.3"/><polyline points="315.8,332.8 315.1,335.3 317.7,335.2"/><polyline points="323.2,362.2 325.0,357.9 323.4,353.5"/><polyline points="387.4,379.3 383.9,368.0 377.4,358.1"/><polyline points="415.9,322.2 418.6,322.3 417.9,325.0"/><polyline points="417.9,325.0 416.3,335.1 414.9,345.2 415.5,355.4 414.2,365.5 415.5,375.7"/><polyline points="448.8,331.2 457.8,330.7 466.8,330.6 475.9,331.5 484.9,330.7 493.9,332.7 502.9,331.5 512.0,331.8 521.0,331.9"/><polyline points="449.0,350.7 458.6,350.9 468.3,350.3 477.7,351.9 487.3,352.2 496.8,353.7 506.2,355.6 515.7,357.4"/><polyline points="515.7,357.4 523.4,350.2 528.0,340.6"/><polyline points="528.0,340.6 523.6,337.0 521.0,331.9"/><polyline points="417.9,325.0 427.5,324.3 437.1,323.1 446.7,325.9"/><polyline points="427.6,372.0 433.5,363.7 440.3,356.3 449.0,350.7"/><polyline points="501.3,395.6 505.0,386.1 508.9,376.7 512.1,366.9 515.7,357.4"/><polyline points="504.2,305.8 494.5,304.1 484.6,306.4 474.8,305.0 465.0,305.4 455.3,303.7"/><polyline points="501.6,268.7 491.6,267.7 481.7,268.0 471.7,270.5 461.7,270.9 451.7,268.8"/><polyline points="455.3,303.7 449.2,296.8 443.0,290.2"/><polyline points="443.0,290.2 446.1,279.0 451.7,268.8"/><polyline points="510.2,242.7 509.2,252.0 506.9,260.8 501.6,268.7"/><polyline points="531.9,340.2 539.6,331.1 545.8,321.1 550.9,310.5"/><polyline points="531.9,340.2 529.7,338.3 528.0,340.6"/><polyline points="550.9,310.5 551.5,300.8 553.6,291.2 553.1,281.4 554.8,271.8"/><polyline points="521.0,331.9 515.1,323.4 510.0,314.3 504.2,305.8"/><polyline points="554.8,271.8 550.9,260.5 545.2,250.0"/><polyline points="446.7,325.9 450.6,314.7 455.3,303.7"/><polyline points="419.3,291.6 431.1,290.4 443.0,290.2"/><polyline points="592.8,117.9 591.9,118.9 592.1,120.3"/><polyline points="632.7,154.7 621.7,157.7 613.1,165.5 602.5,169.3"/><polyline points="602.5,169.3 599.3,159.7 595.8,150.2 594.7,140.2 592.8,130.4 592.1,120.3"/><polyline points="548.3,113.0 550.1,121.9 554.8,129.8 556.4,138.9 561.3,146.7"/><polyline points="592.1,120.3 583.9,126.3 575.1,131.6 568.2,139.2 561.3,146.7"/><polyline points="553.5,163.7 554.7,164.9 555.1,163.3"/><polyline points="561.3,146.7 557.1,154.6 555.1,163.3"/><polyline points="666.9,173.8 660.6,180.4 653.1,185.4 645.7,190.7"/><polyline points="639.6,155.4 640.6,163.6 639.6,171.7"/><polyline points="645.7,190.7 642.5,181.3 639.6,171.7"/><polyline points="666.0,212.6 656.4,212.2 646.7,213.3 637.1,212.6"/><polyline points="645.7,190.7 642.4,202.0 637.1,212.6"/><polyline points="380.6,900.0 374.2,893.3 368.7,885.7 361.5,879.8"/><polyline points="397.0,893.9 399.3,883.4 400.9,872.8"/><polyline points="400.9,872.8 390.1,869.8 380.8,863.5 370.3,859.9"/><polyline points="361.5,879.8 365.4,869.6 370.3,859.9"/><polyline points="374.0,935.2 375.8,923.4 380.2,912.1 380.6,900.0"/><polyline points="356.8,880.9 359.0,879.9 361.5,879.8"/><polyline points="417.5,859.1 407.8,864.3 400.9,872.8"/><polyline points="370.9,825.8 370.3,837.2 370.2,848.6 370.3,859.9"/><polyline points="849.8,530.1 849.3,529.4 849.5,528.6"/><polyline points="828.7,537.1 826.8,526.6 823.4,516.3"/><polyline points="849.5,528.6 840.4,525.3 831.5,521.7 823.4,516.3"/><polyline points="874.7,497.2 869.3,494.9 864.1,492.0"/><polyline points="849.5,528.6 851.8,518.9 855.7,509.8 858.5,500.4 864.1,492.0"/><polyline points="858.1,475.6 858.9,481.2 859.7,486.8"/><polyline points="864.1,492.0 862.7,488.7 859.7,486.8"/><polyline points="604.7,379.5 601.4,377.4 600.9,373.6"/><polyline points="679.9,319.2 669.1,321.2 658.2,321.4 647.3,319.5 636.4,320.4"/><polyline points="600.9,373.6 607.4,366.9 611.7,358.8 616.0,350.7 622.0,343.7 625.0,334.7 630.5,327.4 636.4,320.4"/><polyline points="531.9,340.2 540.4,344.6 549.1,348.7 558.1,351.6 567.8,353.1 576.9,356.0 585.3,360.9"/><polyline points="600.9,373.6 593.4,366.9 585.3,360.9"/><polyline points="578.0,173.7 588.6,174.4 599.2,174.2"/><polyline points="578.0,173.7 573.1,182.4 570.4,191.7 569.5,201.6 566.3,210.9"/><polyline points="599.2,174.2 603.6,184.0 608.8,193.4 612.0,203.6 615.7,213.6"/><polyline points="566.3,210.9 576.1,214.3 585.5,218.5 593.5,224.9 602.4,230.0 610.4,236.6"/><polyline points="615.7,213.6 617.8,216.5 617.7,220.1"/><polyline points="610.4,236.6 612.1,227.5 617.7,220.1"/><polyline points="602.5,169.3 599.5,170.9 599.2,174.2"/><polyline points="555.1,163.3 566.6,168.5 578.0,173.7"/><polyline points="639.6,171.7 635.1,180.3 631.4,189.2 626.0,197.3 622.5,206.4 615.7,213.6"/><polyline points="637.1,212.6 626.9,215.0 617.7,220.1"/><polyline points="821.0,513.7 825.5,505.5 832.2,499.0"/><polyline points="821.0,513.7 808.4,515.7 796.0,518.1"/><polyline points="832.2,499.0 823.4,492.6 816.2,484.4 808.6,476.6 800.0,469.9"/><polyline points="796.0,518.1 795.5,507.5 792.4,497.1 793.5,486.3 791.5,475.8"/><polyline points="791.5,475.8 795.7,472.9 800.0,469.9"/><polyline points="859.7,486.8 851.2,492.5 841.5,495.2 832.2,499.0"/><polyline points="823.4,516.3 820.9,516.3 821.0,513.7"/><polyline points="811.4,455.1 806.9,463.5 800.0,469.9"/><polyline points="744.6,467.8 753.9,469.9 763.7,469.1 773.1,470.6 782.6,471.2 791.5,475.8"/><polyline points="604.2,303.3 614.6,302.6 624.6,300.0"/><polyline points="604.2,303.3 598.6,294.1 589.8,287.8"/><polyline points="589.8,287.8 589.0,280.5 591.2,273.5"/><polyline points="626.5,296.3 624.0,297.3 624.6,300.0"/><polyline points="591.2,273.5 597.7,265.8 599.8,255.8 603.1,246.3 609.7,238.7"/><polyline points="623.3,250.1 616.8,244.1 610.3,238.2"/><polyline points="610.3,238.2 611.2,239.9 609.7,238.7"/><polyline points="585.3,360.9 588.8,351.4 590.9,341.5 592.6,331.4 595.1,321.6 599.0,312.2 604.2,303.3"/><polyline points="636.4,320.4 632.2,309.2 624.6,300.0"/><polyline points="550.9,310.5 560.3,304.2 570.1,298.6 580.0,293.4 589.8,287.8"/><polyline points="554.8,271.8 563.9,272.3 573.1,270.7 582.0,273.9 591.2,273.5"/><polyline points="676.5,284.7 666.5,287.0 656.8,290.9 646.3,290.8 636.6,294.6 626.5,296.3"/><polyline points="643.9,257.0 633.3,254.3 623.3,250.1"/><polyline points="545.2,250.0 554.3,248.0 563.5,246.3 572.5,243.4 581.7,241.8 591.3,242.0 600.5,240.6 609.7,238.7"/><polyline points="610.4,236.6 608.7,237.3 610.3,238.2"/></g><polyline points="565.4,140.3 554.9,144.3 531.2,157.4 515.4,168 515.4,178.5 494.4,186.4 478.6,199.5 478.6,212.7 499.6,223.2 504.9,236.4 494.4,249.5 473.3,254.8 447,262.6 431.2,268 415.4,273.2 412.8,281" fill="none" stroke="#a88a9c" stroke-width="1.5" stroke-opacity="0.6"/><polyline points="347,260 362.8,273.2 370,290" fill="none" stroke="#a88a9c" stroke-width="1.5" stroke-opacity="0.6"/><polyline points="347,341.6 357.5,344.3 362.8,349.5 370.7,375.8 376,402.2 378.6,423 375,440 368,460 372,480" fill="none" stroke="#a88a9c" stroke-width="1.5" stroke-opacity="0.6"/><polyline points="853.6,139 848.4,154.8 840.5,168 830,175" fill="none" stroke="#a88a9c" stroke-width="1.5" stroke-opacity="0.6"/><polyline points="801,183.7 816.8,181.1 840.5,183.7 853.6,170.6 869.4,154.8" fill="none" stroke="#a88a9c" stroke-width="1.5" stroke-opacity="0.6"/><polyline points="972,154.8 974.7,170.6 998.4,178.5 1006.3,191.6 1009,212.7 1011.5,231 1028,236.4" fill="none" stroke="#a88a9c" stroke-width="1.5" stroke-opacity="0.6"/><polyline points="737,144 742.4,165.3 758.2,168 755.6,183.7 734.5,194.3 742.4,207.4 758.2,202.2 774,202.2 801,194.3" fill="none" stroke="#a88a9c" stroke-width="1.5" stroke-opacity="0.6"/><polyline points="369.3,710.8 372,727 385.6,732.4 399,737.9 401.8,754 410,767.6 415.3,775.7 426,781 434.2,783.8 442.3,775.7 458.6,781 472.1,778.4 485.6,773 496.4,767.6 501.8,754 496.4,740.6 507.3,735.2 520.8,732.4" fill="none" stroke="#a88a9c" stroke-width="1.5" stroke-opacity="0.6"/><polyline points="372,781 372,808.2 366.6,829.8 358.5,851.4 361.2,873 366.6,894.7 372,916.3 385.6,932.6 399,943.4 415.3,954.2 426,965 434.2,970.4 440,992" fill="none" stroke="#a88a9c" stroke-width="1.5" stroke-opacity="0.6"/><polyline points="616,654.6 634.5,659.8 653,654.6 674,649.3 687.2,633.5 700,615 705.6,607" fill="none" stroke="#a88a9c" stroke-width="1.5" stroke-opacity="0.6"/><polyline points="914,483.5 916.8,502 906.3,523 901,533.5 880,540" fill="none" stroke="#a88a9c" stroke-width="1.5" stroke-opacity="0.6"/><polyline points="347,700 355,720 369.3,710.8" fill="none" stroke="#a88a9c" stroke-width="1.5" stroke-opacity="0.6"/><polyline points="347,150.8 373.3,144.3 420.7,139" fill="none" stroke="#f9cf2c" stroke-width="3.9" stroke-linejoin="round" stroke-linecap="round"/><polyline points="490.4,139 494.4,145.6 504.9,153.5 520.7,155.3" fill="none" stroke="#f9cf2c" stroke-width="3.9" stroke-linejoin="round" stroke-linecap="round"/><polyline points="572,139 572,152 562.8,178.5 557.5,204.8 552.3,239 547,257.4 540.4,286.4 533.8,307.4 528.6,328.5 523.3,349.5 518,368 510,390 500,420" fill="none" stroke="#f9cf2c" stroke-width="3.9" stroke-linejoin="round" stroke-linecap="round"/><polyline points="347,215.3 352.3,214" fill="none" stroke="#f9cf2c" stroke-width="3.9" stroke-linejoin="round" stroke-linecap="round"/><polyline points="347,244.3 360.2,252.2 370.7,245.6 426,243" fill="none" stroke="#f9cf2c" stroke-width="3.9" stroke-linejoin="round" stroke-linecap="round"/><polyline points="347,244.3 362.8,257.4 381.2,273.2 412.8,283.7 436.5,296.9 457.5,312.7 465.4,323.2 486.5,341.6 497,357.4 504.9,370.6 515,385" fill="none" stroke="#f9cf2c" stroke-width="3.9" stroke-linejoin="round" stroke-linecap="round"/><polyline points="347,336.4 373.3,343 399.6,354.8 426,370.6 447,378.5 457.5,389 465.4,402.2 470.7,423 473,440" fill="none" stroke="#f9cf2c" stroke-width="3.9" stroke-linejoin="round" stroke-linecap="round"/><polyline points="347,412.6 354.9,423 357.5,438.8 365.4,449.3 373.3,459.8 386.5,467.7 399.6,475.6 404.9,486.2 412.8,491.4 430,500" fill="none" stroke="#f9cf2c" stroke-width="3.9" stroke-linejoin="round" stroke-linecap="round"/><polyline points="347,434.8 362.8,438.8 373.3,433.5 399.6,430.9 426,425.6 440,424" fill="none" stroke="#f9cf2c" stroke-width="3.9" stroke-linejoin="round" stroke-linecap="round"/><polyline points="347,478.3 354.9,475.6 362.8,459.8" fill="none" stroke="#f9cf2c" stroke-width="3.9" stroke-linejoin="round" stroke-linecap="round"/><polyline points="347,499.3 373.3,496.7 386.5,494 410,492" fill="none" stroke="#f9cf2c" stroke-width="3.9" stroke-linejoin="round" stroke-linecap="round"/><polyline points="352.3,559.8 368,551.9 381.2,544 400,538" fill="none" stroke="#f9cf2c" stroke-width="3.9" stroke-linejoin="round" stroke-linecap="round"/><polyline points="347,633.5 362.8,630.9 381.2,623 389.1,607.2 400,600" fill="none" stroke="#f9cf2c" stroke-width="3.9" stroke-linejoin="round" stroke-linecap="round"/><polyline points="347,670.4 360.2,659.8 373.3,646.7 385,640" fill="none" stroke="#f9cf2c" stroke-width="3.9" stroke-linejoin="round" stroke-linecap="round"/><polyline points="735.8,139 726.6,149.5 710.8,162.7 695,178.5 679.3,194.3 668.7,212.7 660.8,231.1 663.5,249.5 666.1,262.7 668.7,275.8 674,286.4 684.5,302.2 700,330 715,360 728,398" fill="none" stroke="#f9cf2c" stroke-width="3.9" stroke-linejoin="round" stroke-linecap="round"/><polyline points="671.4,246.9 663.5,254.8 626.6,257.4 605.6,270.6 589.8,281 574,291.6 560,300" fill="none" stroke="#f9cf2c" stroke-width="3.9" stroke-linejoin="round" stroke-linecap="round"/><polyline points="760.8,139 774,144.3 784.5,154.8 789.8,170.6 795,189 801,196.9 814.2,199.5 827.3,204.8 835.2,215.3 853.6,228.5 864.2,239 872,246.9 887.8,252.2 898.4,270.6 906.3,286.4 906.3,307.4 909,339 911.5,370.6 943,383.7 958.9,391.6 985.2,404.8 998.4,412.7 1006.3,423 1019,440 1028,450" fill="none" stroke="#f9cf2c" stroke-width="3.9" stroke-linejoin="round" stroke-linecap="round"/><polyline points="758.2,139 801,148.2 824.7,157.4 880,160 885.2,164 906.3,154.8 916.8,153.5 922,145.6 932.6,144.3 935.2,152.2 958.9,149.5 1028,149.5" fill="none" stroke="#f9cf2c" stroke-width="3.9" stroke-linejoin="round" stroke-linecap="round"/><polyline points="932.6,146.9 935.2,162.7 927.3,175.8 914.2,181.1 901,196.9 893.1,212.7 887.8,231.1 874.7,241.6 866.8,249.5 853.6,260 832.6,270.6 801,283.7 780,290 760,300" fill="none" stroke="#f9cf2c" stroke-width="3.9" stroke-linejoin="round" stroke-linecap="round"/><polyline points="1028,536 1022,546.7" fill="none" stroke="#f9cf2c" stroke-width="3.9" stroke-linejoin="round" stroke-linecap="round"/><polyline points="620,373 692,368 764,359 861,361 911,366 957,395 990,420" fill="none" stroke="#f9cf2c" stroke-width="3.9" stroke-linejoin="round" stroke-linecap="round"/><polyline points="668,279 685,330 699.4,385 716,416.5 740,450" fill="none" stroke="#f9cf2c" stroke-width="3.9" stroke-linejoin="round" stroke-linecap="round"/><polyline points="400,452 450,440 520,430 580,420 640,400" fill="none" stroke="#f9cf2c" stroke-width="3.9" stroke-linejoin="round" stroke-linecap="round"/><polyline points="420,380 480,378 560,372 630,368" fill="none" stroke="#f9cf2c" stroke-width="3.9" stroke-linejoin="round" stroke-linecap="round"/><polyline points="430,480 500,470 560,465 625,455" fill="none" stroke="#f9cf2c" stroke-width="3.9" stroke-linejoin="round" stroke-linecap="round"/><polyline points="470,330 468,400 472,470 480,520" fill="none" stroke="#f9cf2c" stroke-width="3.9" stroke-linejoin="round" stroke-linecap="round"/><polyline points="600,300 598,360 590,420 600,480 610,510" fill="none" stroke="#f9cf2c" stroke-width="3.9" stroke-linejoin="round" stroke-linecap="round"/><polyline points="440,300 500,360 545,410 580,470 600,510" fill="none" stroke="#f9cf2c" stroke-width="3.9" stroke-linejoin="round" stroke-linecap="round"/><polyline points="595,483.5 589.8,509.8 580,540" fill="none" stroke="#f9cf2c" stroke-width="3.9" stroke-linejoin="round" stroke-linecap="round"/><polyline points="410,560 450,575 490,585 530,590" fill="none" stroke="#f9cf2c" stroke-width="3.9" stroke-linejoin="round" stroke-linecap="round"/><polyline points="600,530 575,560 555,580" fill="none" stroke="#f9cf2c" stroke-width="3.9" stroke-linejoin="round" stroke-linecap="round"/><polyline points="500,520 510,550 520,570" fill="none" stroke="#f9cf2c" stroke-width="3.9" stroke-linejoin="round" stroke-linecap="round"/><polyline points="480,640 500,660 530,690 560,700" fill="none" stroke="#f9cf2c" stroke-width="3.9" stroke-linejoin="round" stroke-linecap="round"/><polyline points="655.6,454.6 666.1,470.4 679.3,488.8 687.2,507.2 687.2,528.3 695,546.7 710.8,565.1 731.9,586.2 742.4,607.2 758.2,620.4 779.3,633.5 792.4,646.7 801,654.6 816.8,659.8 822,675.6 827.3,696.7 840,720" fill="none" stroke="#f9cf2c" stroke-width="3.9" stroke-linejoin="round" stroke-linecap="round"/><polyline points="595,646.7 605.6,665.1 613.5,680.9 626.6,696.7 639.8,707" fill="none" stroke="#f9cf2c" stroke-width="3.9" stroke-linejoin="round" stroke-linecap="round"/><polyline points="982.6,665.1 1001,662.5 1028,654.6" fill="none" stroke="#f9cf2c" stroke-width="3.9" stroke-linejoin="round" stroke-linecap="round"/><polyline points="901,702 932.6,699.3 964.2,694 982.6,683.5 982.6,665.1" fill="none" stroke="#f9cf2c" stroke-width="3.9" stroke-linejoin="round" stroke-linecap="round"/><polyline points="581.9,722.8 589.8,738.7 592.5,754.5 595.1,767.7 608.3,775.6 626.8,778.3 645.3,786.2 680,800 720,790 760,770" fill="none" stroke="#f9cf2c" stroke-width="3.9" stroke-linejoin="round" stroke-linecap="round"/><polyline points="653.2,712.3 669,720.2 674.3,726.8 692.8,730.8 703.3,738.7 720,750 760,760 811.7,740" fill="none" stroke="#f9cf2c" stroke-width="3.9" stroke-linejoin="round" stroke-linecap="round"/><polyline points="574,828.4 589.8,817.8 595.1,807.3 608.3,791.5" fill="none" stroke="#f9cf2c" stroke-width="3.9" stroke-linejoin="round" stroke-linecap="round"/><polyline points="663.7,831 669,846.9 671.7,865.4 676.9,881.2 687.5,899.7 700.7,910.2 713.9,918.1 732.4,926 745.5,926 758.7,912.9 785.1,905 801,902.3" fill="none" stroke="#f9cf2c" stroke-width="3.9" stroke-linejoin="round" stroke-linecap="round"/><polyline points="742.9,928.7 748.2,944.5 758.7,957.7 774.6,970.9 779.9,992" fill="none" stroke="#f9cf2c" stroke-width="3.9" stroke-linejoin="round" stroke-linecap="round"/><polyline points="801,934 793,949.8 785.1,970.9 779.9,992" fill="none" stroke="#f9cf2c" stroke-width="3.9" stroke-linejoin="round" stroke-linecap="round"/><polyline points="930.3,763.7 951.4,767.7 956.7,780.9 954.1,794.1 964.6,807.3 969.9,825.8 972.5,844.2 975.2,854.8 985.7,844.2 1006.9,839 1028,831" fill="none" stroke="#f9cf2c" stroke-width="3.9" stroke-linejoin="round" stroke-linecap="round"/><polyline points="969.9,854.8 964.6,860 975.2,870.6 980.5,886.5 977.8,899.7 972.5,905 985.7,907.6 1012.1,902.3 1028,910.2" fill="none" stroke="#f9cf2c" stroke-width="3.9" stroke-linejoin="round" stroke-linecap="round"/><polyline points="906.6,762.4 903.9,794.1 898.7,817.8 896,839 893.4,849.5 885.5,857.4 867,868 853.8,878.5 840.6,889.1 814.2,891.7 801,889.1" fill="none" stroke="#f9cf2c" stroke-width="3.9" stroke-linejoin="round" stroke-linecap="round"/><polyline points="893.4,849.5 906.6,852.2 922.4,854.8 946.2,852.2 964.6,857.4" fill="none" stroke="#f9cf2c" stroke-width="3.9" stroke-linejoin="round" stroke-linecap="round"/><polyline points="874.9,886.5 906.6,883.8 943.5,881.2 959.4,891.7 972.5,905" fill="none" stroke="#f9cf2c" stroke-width="3.9" stroke-linejoin="round" stroke-linecap="round"/><polyline points="911.8,886.5 909.2,897 903.9,918.1" fill="none" stroke="#f9cf2c" stroke-width="3.9" stroke-linejoin="round" stroke-linecap="round"/><polyline points="885.5,886.5 885.5,912.9 888.1,939.3 890.7,960.4 882.8,992" fill="none" stroke="#f9cf2c" stroke-width="3.9" stroke-linejoin="round" stroke-linecap="round"/><polyline points="861.7,894.4 856.4,912.9 861.7,928.7 874.9,941.9 888.1,955.1" fill="none" stroke="#f9cf2c" stroke-width="3.9" stroke-linejoin="round" stroke-linecap="round"/><polyline points="801,912.9 827.4,910.2 856.4,910.2" fill="none" stroke="#f9cf2c" stroke-width="3.9" stroke-linejoin="round" stroke-linecap="round"/><polyline points="808.9,833.7 822.1,849.5 830,865.4 832.7,875.9" fill="none" stroke="#f9cf2c" stroke-width="3.9" stroke-linejoin="round" stroke-linecap="round"/><polyline points="914.5,707 919.8,722.8 911.8,741.3 925,751.9 930.3,763.7" fill="none" stroke="#f9cf2c" stroke-width="3.9" stroke-linejoin="round" stroke-linecap="round"/><polyline points="347.7,789 350.4,805.5 361.2,816.3 372,827" fill="none" stroke="#f9cf2c" stroke-width="3.9" stroke-linejoin="round" stroke-linecap="round"/><polyline points="412.6,840.6 426.1,867.7 442.3,889.3 464,897.4 496.4,905.5 518,919 528.9,894.7 528.9,886.6 518,873 512.7,856.8 518,840.6 507.3,816.3" fill="none" stroke="#f9cf2c" stroke-width="3.9" stroke-linejoin="round" stroke-linecap="round"/><polyline points="518,840.6 539.7,832.5 556,824.4 569.4,829.8 588.4,821.7 596.5,805.5 600,790" fill="none" stroke="#f9cf2c" stroke-width="3.9" stroke-linejoin="round" stroke-linecap="round"/><polyline points="518,919 507.3,943.4 493.7,965 480.2,970.4 466.7,981.2 458.6,992" fill="none" stroke="#f9cf2c" stroke-width="3.9" stroke-linejoin="round" stroke-linecap="round"/><polyline points="491,967.7 507.3,978.5 520.8,992" fill="none" stroke="#f9cf2c" stroke-width="3.9" stroke-linejoin="round" stroke-linecap="round"/><polyline points="588.4,729.7 591,743 593.8,767.6 601.9,773 615,775" fill="none" stroke="#f9cf2c" stroke-width="3.9" stroke-linejoin="round" stroke-linecap="round"/><polyline points="669.5,835.2 672.2,862.2 680.3,883.9 688.4,905.5 700,916.3" fill="none" stroke="#f9cf2c" stroke-width="3.9" stroke-linejoin="round" stroke-linecap="round"/><polyline points="472.1,727 472.1,740.6 477.5,747.3" fill="none" stroke="#f9cf2c" stroke-width="3.9" stroke-linejoin="round" stroke-linecap="round"/><polyline points="639.8,710.8 664,716.2 677.6,727 700,724.3" fill="none" stroke="#f9cf2c" stroke-width="3.9" stroke-linejoin="round" stroke-linecap="round"/><text x="648.6" y="242.7" font-family="Liberation Sans" font-size="13.5" fill="#3a3a3a" stroke="#fff" stroke-width="2.5" paint-order="stroke" textLength="54" lengthAdjust="spacingAndGlyphs">Münster</text><text x="842.2" y="225.7" font-family="Liberation Sans" font-size="13.5" fill="#3a3a3a" stroke="#fff" stroke-width="2.5" paint-order="stroke" textLength="55.4" lengthAdjust="spacingAndGlyphs">Bielefeld</text><text x="605.9" y="398.9" font-family="Liberation Sans" font-size="13.5" fill="#3a3a3a" stroke="#fff" stroke-width="2.5" paint-order="stroke" textLength="71" lengthAdjust="spacingAndGlyphs">Dortmund</text><text x="698.8" y="339.6" font-family="Liberation Sans" font-size="13.5" fill="#3a3a3a" stroke="#fff" stroke-width="2.5" paint-order="stroke" textLength="39.5" lengthAdjust="spacingAndGlyphs">Hamm</text><text x="526.8" y="418.6" font-family="Liberation Sans" font-size="13.5" fill="#3a3a3a" stroke="#fff" stroke-width="2.5" paint-order="stroke" textLength="37" lengthAdjust="spacingAndGlyphs">Essen</text><text x="624.8" y="449.5" font-family="Liberation Sans" font-size="13.5" fill="#3a3a3a" stroke="#fff" stroke-width="2.5" paint-order="stroke" textLength="38.4" lengthAdjust="spacingAndGlyphs">Hagen</text><text x="430" y="459" font-family="Liberation Sans" font-size="13.5" fill="#3a3a3a" stroke="#fff" stroke-width="2.5" paint-order="stroke" textLength="41.5" lengthAdjust="spacingAndGlyphs">Krefeld</text><text x="550.5" y="479.9" font-family="Liberation Sans" font-size="13.5" fill="#3a3a3a" stroke="#fff" stroke-width="2.5" paint-order="stroke" textLength="67.2" lengthAdjust="spacingAndGlyphs">Wuppertal</text><text x="457.6" y="499.7" font-family="Liberation Sans" font-size="13.5" fill="#3a3a3a" stroke="#fff" stroke-width="2.5" paint-order="stroke" textLength="76.3" lengthAdjust="spacingAndGlyphs">Düsseldorf</text><text x="504.4" y="561.8" font-family="Liberation Sans" font-size="13.5" fill="#3a3a3a" stroke="#fff" stroke-width="2.5" paint-order="stroke" textLength="59" lengthAdjust="spacingAndGlyphs">Leverkusen</text><text x="518.9" y="595" font-family="Liberation Sans" font-size="13.5" fill="#3a3a3a" stroke="#fff" stroke-width="2.5" paint-order="stroke" textLength="29" lengthAdjust="spacingAndGlyphs">Köln</text><text x="542.6" y="663" font-family="Liberation Sans" font-size="13.5" fill="#3a3a3a" stroke="#fff" stroke-width="2.5" paint-order="stroke" textLength="38.8" lengthAdjust="spacingAndGlyphs">Bonn</text><text x="347" y="648.8" font-family="Liberation Sans" font-size="13.5" fill="#3a3a3a" stroke="#fff" stroke-width="2.5" paint-order="stroke" textLength="23.7" lengthAdjust="spacingAndGlyphs">hen</text><text x="771.9" y="881.2" font-family="Liberation Sans" font-size="13.5" fill="#3a3a3a" stroke="#fff" stroke-width="2.5" paint-order="stroke" textLength="71.9" lengthAdjust="spacingAndGlyphs">Wiesbaden</text><text x="871.9" y="866.2" font-family="Liberation Sans" font-size="13.5" fill="#3a3a3a" stroke="#fff" stroke-width="2.5" paint-order="stroke" textLength="64" lengthAdjust="spacingAndGlyphs">Frankfurt</text><text x="873.5" y="879.2" font-family="Liberation Sans" font-size="13.5" fill="#3a3a3a" stroke="#fff" stroke-width="2.5" paint-order="stroke" textLength="59.5" lengthAdjust="spacingAndGlyphs">am Main</text><text x="795.6" y="908.9" font-family="Liberation Sans" font-size="13.5" fill="#3a3a3a" stroke="#fff" stroke-width="2.5" paint-order="stroke" textLength="38.7" lengthAdjust="spacingAndGlyphs">Mainz</text><text x="863.6" y="951.6" font-family="Liberation Sans" font-size="13.5" fill="#3a3a3a" stroke="#fff" stroke-width="2.5" paint-order="stroke" textLength="64.4" lengthAdjust="spacingAndGlyphs">Darmstadt</text><polygon points="656.6,485.3 710.0,471.6 927.1,547.1 872.5,616.0 817.1,656.2 773.8,653.8 639.0,645.8 587.2,622.5 575.2,602.0 570.4,561.1 604.1,515.4" fill="#c8961e" fill-opacity="0.6"/><polygon points="591.7,794.3 996.7,526.7 976.7,693.3 913.3,783.3 790.7,855.7 771.7,856.7 669.3,826.0" fill="#1a9a96" fill-opacity="0.58"/><polygon points="387.7,495.6 589.9,519.7 605.5,646.1 595.9,721.9 431.7,726.0 388.4,629.7 377.3,549.8" fill="#ff2020" fill-opacity="0.5"/><polygon points="647.7,274.9 788.0,285.3 911.3,339.4 973.9,438.1 943.8,473.0 870.4,501.9 687.4,466.5 641.7,445.4 633.2,428.5 634.4,305.7" fill="#0000ff" fill-opacity="0.5"/><polygon points="603.0,283.9 553.7,292.4 403.3,453.9 415.0,480.9 529.1,511.0 561.5,509.4 584.8,506.8 619.8,499.8 628.9,467.4 628.4,405.2 627.6,354.6 624.5,326.1" fill="#202020" fill-opacity="0.52"/><rect x="626.3" y="413.5" width="22.0" height="9.800000000000011" rx="2" fill="#1010e0" stroke="#fff" stroke-opacity="0.7" stroke-width="0.8"/><text x="637.3" y="421.3" font-family="Liberation Sans" font-weight="bold" font-size="9.5" fill="#f0f0f0" text-anchor="middle">A45</text><rect x="670.3" y="507" width="22.100000000000023" height="10.299999999999955" rx="2" fill="#5a48a0" stroke="#fff" stroke-opacity="0.7" stroke-width="0.8"/><text x="681.3499999999999" y="515.3" font-family="Liberation Sans" font-weight="bold" font-size="9.5" fill="#f0f0f0" text-anchor="middle">A45</text><rect x="635.5" y="705.3" width="17.0" height="10.700000000000045" rx="2" fill="#0a14e8" stroke="#fff" stroke-opacity="0.7" stroke-width="0.8"/><text x="644.0" y="714" font-family="Liberation Sans" font-weight="bold" font-size="9.5" fill="#f0f0f0" text-anchor="middle">A3</text><rect x="632.7" y="781.6" width="23.299999999999955" height="10.699999999999932" rx="2" fill="#1c5cc8" stroke="#fff" stroke-opacity="0.7" stroke-width="0.8"/><text x="644.35" y="790.3" font-family="Liberation Sans" font-weight="bold" font-size="9.5" fill="#f0f0f0" text-anchor="middle">A48</text><rect x="641.4" y="820" width="21.800000000000068" height="10.600000000000023" rx="2" fill="#0a14e8" stroke="#fff" stroke-opacity="0.7" stroke-width="0.8"/><text x="652.3" y="828.6" font-family="Liberation Sans" font-weight="bold" font-size="9.5" fill="#f0f0f0" text-anchor="middle">A61</text><rect x="675" y="892.3" width="21.799999999999955" height="11.400000000000091" rx="2" fill="#0a14e8" stroke="#fff" stroke-opacity="0.7" stroke-width="0.8"/><text x="685.9" y="901.7" font-family="Liberation Sans" font-weight="bold" font-size="9.5" fill="#f0f0f0" text-anchor="middle">A61</text><rect x="694.8" y="747.6" width="19.800000000000068" height="10.299999999999955" rx="2" fill="#1f8a68" stroke="#fff" stroke-opacity="0.7" stroke-width="0.8"/><text x="704.7" y="755.9" font-family="Liberation Sans" font-weight="bold" font-size="9.5" fill="#f0f0f0" text-anchor="middle">E44</text><g stroke="#c89614" stroke-opacity="0.6" stroke-width="4" stroke-linecap="round"><line x1="756.9" y1="580.4" x2="656.6" y2="485.3"/><line x1="756.9" y1="580.4" x2="678.7" y2="494.9"/><line x1="756.9" y1="580.4" x2="710.0" y2="471.6"/><line x1="756.9" y1="580.4" x2="705.2" y2="481.2"/><line x1="756.9" y1="580.4" x2="729.3" y2="496.6"/><line x1="756.9" y1="580.4" x2="649.8" y2="504.5"/><line x1="756.9" y1="580.4" x2="615.6" y2="517.8"/><line x1="756.9" y1="580.4" x2="628.1" y2="528.1"/><line x1="756.9" y1="580.4" x2="671.5" y2="525.0"/><line x1="756.9" y1="580.4" x2="679.9" y2="531.7"/><line x1="756.9" y1="580.4" x2="750.9" y2="511.0"/><line x1="756.9" y1="580.4" x2="736.0" y2="525.0"/><line x1="756.9" y1="580.4" x2="771.4" y2="527.4"/><line x1="756.9" y1="580.4" x2="776.2" y2="538.7"/><line x1="756.9" y1="580.4" x2="817.8" y2="517.8"/><line x1="756.9" y1="580.4" x2="656.6" y2="539.4"/><line x1="756.9" y1="580.4" x2="600.5" y2="549.8"/><line x1="756.9" y1="580.4" x2="623.8" y2="561.1"/><line x1="756.9" y1="580.4" x2="664.3" y2="558.2"/><line x1="756.9" y1="580.4" x2="681.8" y2="560.6"/><line x1="756.9" y1="580.4" x2="709.5" y2="559.9"/><line x1="756.9" y1="580.4" x2="723.7" y2="557.5"/><line x1="756.9" y1="580.4" x2="630.6" y2="571.9"/><line x1="756.9" y1="580.4" x2="780.3" y2="568.8"/><line x1="756.9" y1="580.4" x2="840.0" y2="552.0"/><line x1="756.9" y1="580.4" x2="927.1" y2="547.1"/><line x1="756.9" y1="580.4" x2="729.3" y2="578.4"/><line x1="756.9" y1="580.4" x2="661.4" y2="585.2"/><line x1="756.9" y1="580.4" x2="705.2" y2="590.0"/><line x1="756.9" y1="580.4" x2="604.1" y2="590.5"/><line x1="756.9" y1="580.4" x2="846.7" y2="591.7"/><line x1="756.9" y1="580.4" x2="868.9" y2="597.2"/><line x1="756.9" y1="580.4" x2="630.6" y2="600.1"/><line x1="756.9" y1="580.4" x2="659.0" y2="601.3"/><line x1="756.9" y1="580.4" x2="683.5" y2="596.5"/><line x1="756.9" y1="580.4" x2="730.5" y2="602.5"/><line x1="756.9" y1="580.4" x2="779.3" y2="597.7"/><line x1="756.9" y1="580.4" x2="761.8" y2="610.5"/><line x1="756.9" y1="580.4" x2="615.6" y2="620.1"/><line x1="756.9" y1="580.4" x2="646.2" y2="620.1"/><line x1="756.9" y1="580.4" x2="675.1" y2="609.7"/><line x1="756.9" y1="580.4" x2="698.7" y2="613.6"/><line x1="756.9" y1="580.4" x2="872.5" y2="616.0"/><line x1="756.9" y1="580.4" x2="665.9" y2="631.6"/><line x1="756.9" y1="580.4" x2="779.3" y2="630.4"/><line x1="756.9" y1="580.4" x2="829.2" y2="630.9"/><line x1="756.9" y1="580.4" x2="639.0" y2="645.8"/><line x1="756.9" y1="580.4" x2="729.7" y2="639.8"/><line x1="756.9" y1="580.4" x2="757.7" y2="638.9"/><line x1="756.9" y1="580.4" x2="773.8" y2="653.8"/><line x1="756.9" y1="580.4" x2="817.1" y2="656.2"/><line x1="756.9" y1="580.4" x2="799.1" y2="654.5"/></g><g stroke="#008b8b" stroke-opacity="0.6" stroke-width="4" stroke-linecap="round"><line x1="811.7" y1="740.0" x2="996.7" y2="526.7"/><line x1="811.7" y1="740.0" x2="920.7" y2="630.7"/><line x1="811.7" y1="740.0" x2="952.7" y2="629.0"/><line x1="811.7" y1="740.0" x2="974.0" y2="626.7"/><line x1="811.7" y1="740.0" x2="880.7" y2="646.0"/><line x1="811.7" y1="740.0" x2="821.0" y2="674.3"/><line x1="811.7" y1="740.0" x2="906.7" y2="687.3"/><line x1="811.7" y1="740.0" x2="884.0" y2="695.7"/><line x1="811.7" y1="740.0" x2="892.7" y2="695.0"/><line x1="811.7" y1="740.0" x2="918.3" y2="696.7"/><line x1="811.7" y1="740.0" x2="934.3" y2="704.3"/><line x1="811.7" y1="740.0" x2="961.0" y2="705.0"/><line x1="811.7" y1="740.0" x2="976.7" y2="693.3"/><line x1="811.7" y1="740.0" x2="856.0" y2="706.7"/><line x1="811.7" y1="740.0" x2="901.7" y2="708.3"/><line x1="811.7" y1="740.0" x2="865.0" y2="719.3"/><line x1="811.7" y1="740.0" x2="843.3" y2="722.3"/><line x1="811.7" y1="740.0" x2="895.0" y2="723.3"/><line x1="811.7" y1="740.0" x2="908.3" y2="725.7"/><line x1="811.7" y1="740.0" x2="888.3" y2="732.3"/><line x1="811.7" y1="740.0" x2="897.7" y2="737.7"/><line x1="811.7" y1="740.0" x2="931.0" y2="729.3"/><line x1="811.7" y1="740.0" x2="840.0" y2="732.7"/><line x1="811.7" y1="740.0" x2="900.7" y2="757.3"/><line x1="811.7" y1="740.0" x2="913.3" y2="783.3"/><line x1="811.7" y1="740.0" x2="870.7" y2="791.0"/><line x1="811.7" y1="740.0" x2="864.0" y2="798.3"/><line x1="811.7" y1="740.0" x2="866.7" y2="804.0"/><line x1="811.7" y1="740.0" x2="813.3" y2="804.0"/><line x1="811.7" y1="740.0" x2="790.0" y2="793.3"/><line x1="811.7" y1="740.0" x2="797.3" y2="823.3"/><line x1="811.7" y1="740.0" x2="814.3" y2="829.3"/><line x1="811.7" y1="740.0" x2="771.7" y2="856.7"/><line x1="811.7" y1="740.0" x2="790.7" y2="855.7"/><line x1="811.7" y1="740.0" x2="767.3" y2="754.3"/><line x1="811.7" y1="740.0" x2="770.0" y2="774.3"/><line x1="811.7" y1="740.0" x2="761.7" y2="780.0"/><line x1="811.7" y1="740.0" x2="721.0" y2="757.7"/><line x1="811.7" y1="740.0" x2="666.7" y2="762.3"/><line x1="811.7" y1="740.0" x2="641.7" y2="760.7"/><line x1="811.7" y1="740.0" x2="630.0" y2="756.7"/><line x1="811.7" y1="740.0" x2="648.3" y2="774.3"/><line x1="811.7" y1="740.0" x2="671.7" y2="784.3"/><line x1="811.7" y1="740.0" x2="672.7" y2="800.0"/><line x1="811.7" y1="740.0" x2="669.3" y2="826.0"/><line x1="811.7" y1="740.0" x2="591.7" y2="794.3"/></g><g stroke="#ff0000" stroke-opacity="0.6" stroke-width="4" stroke-linecap="round"><line x1="497.2" y1="622.0" x2="387.7" y2="495.6"/><line x1="497.2" y1="622.0" x2="423.8" y2="502.9"/><line x1="497.2" y1="622.0" x2="439.4" y2="502.9"/><line x1="497.2" y1="622.0" x2="389.4" y2="519.2"/><line x1="497.2" y1="622.0" x2="437.0" y2="533.4"/><line x1="497.2" y1="622.0" x2="455.1" y2="537.3"/><line x1="497.2" y1="622.0" x2="398.0" y2="540.7"/><line x1="497.2" y1="622.0" x2="377.3" y2="549.8"/><line x1="497.2" y1="622.0" x2="477.2" y2="556.6"/><line x1="497.2" y1="622.0" x2="510.0" y2="536.6"/><line x1="497.2" y1="622.0" x2="520.1" y2="536.6"/><line x1="497.2" y1="622.0" x2="532.1" y2="533.4"/><line x1="497.2" y1="622.0" x2="546.1" y2="531.3"/><line x1="497.2" y1="622.0" x2="567.5" y2="539.7"/><line x1="497.2" y1="622.0" x2="589.9" y2="519.7"/><line x1="497.2" y1="622.0" x2="540.5" y2="556.6"/><line x1="497.2" y1="622.0" x2="567.5" y2="557.0"/><line x1="497.2" y1="622.0" x2="500.3" y2="568.3"/><line x1="497.2" y1="622.0" x2="451.5" y2="571.0"/><line x1="497.2" y1="622.0" x2="467.1" y2="583.0"/><line x1="497.2" y1="622.0" x2="387.0" y2="575.1"/><line x1="497.2" y1="622.0" x2="451.5" y2="589.5"/><line x1="497.2" y1="622.0" x2="535.0" y2="588.3"/><line x1="497.2" y1="622.0" x2="573.0" y2="571.0"/><line x1="497.2" y1="622.0" x2="406.9" y2="594.8"/><line x1="497.2" y1="622.0" x2="503.7" y2="598.4"/><line x1="497.2" y1="622.0" x2="390.1" y2="603.3"/><line x1="497.2" y1="622.0" x2="428.6" y2="606.9"/><line x1="497.2" y1="622.0" x2="478.0" y2="611.2"/><line x1="497.2" y1="622.0" x2="515.3" y2="611.7"/><line x1="497.2" y1="622.0" x2="581.5" y2="604.0"/><line x1="497.2" y1="622.0" x2="388.4" y2="629.7"/><line x1="497.2" y1="622.0" x2="406.9" y2="629.7"/><line x1="497.2" y1="622.0" x2="433.9" y2="635.8"/><line x1="497.2" y1="622.0" x2="467.6" y2="634.1"/><line x1="497.2" y1="622.0" x2="493.1" y2="635.8"/><line x1="497.2" y1="622.0" x2="522.5" y2="626.8"/><line x1="497.2" y1="622.0" x2="538.1" y2="629.3"/><line x1="497.2" y1="622.0" x2="551.9" y2="631.7"/><line x1="497.2" y1="622.0" x2="576.2" y2="630.9"/><line x1="497.2" y1="622.0" x2="588.2" y2="622.5"/><line x1="497.2" y1="622.0" x2="588.2" y2="635.8"/><line x1="497.2" y1="622.0" x2="583.9" y2="645.4"/><line x1="497.2" y1="622.0" x2="605.5" y2="646.1"/><line x1="497.2" y1="622.0" x2="434.1" y2="652.1"/><line x1="497.2" y1="622.0" x2="508.8" y2="650.2"/><line x1="497.2" y1="622.0" x2="540.5" y2="647.8"/><line x1="497.2" y1="622.0" x2="546.6" y2="656.9"/><line x1="497.2" y1="622.0" x2="563.9" y2="658.6"/><line x1="497.2" y1="622.0" x2="524.9" y2="663.7"/><line x1="497.2" y1="622.0" x2="433.4" y2="672.6"/><line x1="497.2" y1="622.0" x2="468.3" y2="671.9"/><line x1="497.2" y1="622.0" x2="584.6" y2="678.6"/><line x1="497.2" y1="622.0" x2="591.6" y2="687.5"/><line x1="497.2" y1="622.0" x2="499.1" y2="682.9"/><line x1="497.2" y1="622.0" x2="532.6" y2="694.3"/><line x1="497.2" y1="622.0" x2="548.5" y2="693.8"/><line x1="497.2" y1="622.0" x2="570.6" y2="695.5"/><line x1="497.2" y1="622.0" x2="469.5" y2="705.6"/><line x1="497.2" y1="622.0" x2="491.9" y2="718.8"/><line x1="497.2" y1="622.0" x2="553.8" y2="716.6"/><line x1="497.2" y1="622.0" x2="568.2" y2="721.5"/><line x1="497.2" y1="622.0" x2="591.6" y2="709.9"/><line x1="497.2" y1="622.0" x2="595.9" y2="721.9"/><line x1="497.2" y1="622.0" x2="431.7" y2="726.0"/><line x1="497.2" y1="622.0" x2="447.9" y2="723.1"/></g><g stroke="#0000ff" stroke-opacity="0.6" stroke-width="4" stroke-linecap="round"><line x1="728.3" y1="398.4" x2="647.7" y2="274.9"/><line x1="728.3" y1="398.4" x2="719.9" y2="278.8"/><line x1="728.3" y1="398.4" x2="762.0" y2="282.1"/><line x1="728.3" y1="398.4" x2="788.0" y2="285.3"/><line x1="728.3" y1="398.4" x2="676.1" y2="297.8"/><line x1="728.3" y1="398.4" x2="702.3" y2="295.6"/><line x1="728.3" y1="398.4" x2="732.7" y2="307.4"/><line x1="728.3" y1="398.4" x2="765.6" y2="308.9"/><line x1="728.3" y1="398.4" x2="809.7" y2="316.1"/><line x1="728.3" y1="398.4" x2="638.1" y2="304.5"/><line x1="728.3" y1="398.4" x2="656.1" y2="315.4"/><line x1="728.3" y1="398.4" x2="643.4" y2="328.6"/><line x1="728.3" y1="398.4" x2="679.0" y2="341.4"/><line x1="728.3" y1="398.4" x2="717.5" y2="335.8"/><line x1="728.3" y1="398.4" x2="787.8" y2="343.8"/><line x1="728.3" y1="398.4" x2="831.1" y2="337.0"/><line x1="728.3" y1="398.4" x2="886.7" y2="337.8"/><line x1="728.3" y1="398.4" x2="911.3" y2="339.4"/><line x1="728.3" y1="398.4" x2="655.6" y2="357.0"/><line x1="728.3" y1="398.4" x2="678.3" y2="358.7"/><line x1="728.3" y1="398.4" x2="685.5" y2="365.9"/><line x1="728.3" y1="398.4" x2="709.1" y2="363.5"/><line x1="728.3" y1="398.4" x2="747.6" y2="357.5"/><line x1="728.3" y1="398.4" x2="792.1" y2="367.1"/><line x1="728.3" y1="398.4" x2="780.1" y2="373.1"/><line x1="728.3" y1="398.4" x2="829.9" y2="358.7"/><line x1="728.3" y1="398.4" x2="865.5" y2="349.6"/><line x1="728.3" y1="398.4" x2="738.7" y2="379.2"/><line x1="728.3" y1="398.4" x2="690.3" y2="385.7"/><line x1="728.3" y1="398.4" x2="826.5" y2="377.5"/><line x1="728.3" y1="398.4" x2="876.4" y2="379.2"/><line x1="728.3" y1="398.4" x2="905.7" y2="391.2"/><line x1="728.3" y1="398.4" x2="642.1" y2="393.6"/><line x1="728.3" y1="398.4" x2="675.8" y2="397.2"/><line x1="728.3" y1="398.4" x2="756.0" y2="398.4"/><line x1="728.3" y1="398.4" x2="786.1" y2="397.9"/><line x1="728.3" y1="398.4" x2="848.7" y2="400.8"/><line x1="728.3" y1="398.4" x2="939.5" y2="410.9"/><line x1="728.3" y1="398.4" x2="707.1" y2="406.1"/><line x1="728.3" y1="398.4" x2="665.3" y2="418.2"/><line x1="728.3" y1="398.4" x2="712.7" y2="419.4"/><line x1="728.3" y1="398.4" x2="831.8" y2="416.0"/><line x1="728.3" y1="398.4" x2="635.6" y2="430.9"/><line x1="728.3" y1="398.4" x2="692.7" y2="441.0"/><line x1="728.3" y1="398.4" x2="707.4" y2="437.4"/><line x1="728.3" y1="398.4" x2="771.7" y2="433.3"/><line x1="728.3" y1="398.4" x2="877.6" y2="433.3"/><line x1="728.3" y1="398.4" x2="973.9" y2="438.1"/><line x1="728.3" y1="398.4" x2="928.9" y2="444.9"/><line x1="728.3" y1="398.4" x2="641.7" y2="445.4"/><line x1="728.3" y1="398.4" x2="817.4" y2="450.7"/><line x1="728.3" y1="398.4" x2="842.0" y2="445.4"/><line x1="728.3" y1="398.4" x2="861.5" y2="447.0"/><line x1="728.3" y1="398.4" x2="728.3" y2="455.5"/><line x1="728.3" y1="398.4" x2="757.7" y2="456.9"/><line x1="728.3" y1="398.4" x2="687.4" y2="466.5"/><line x1="728.3" y1="398.4" x2="709.8" y2="471.8"/><line x1="728.3" y1="398.4" x2="943.8" y2="473.0"/><line x1="728.3" y1="398.4" x2="870.4" y2="501.9"/></g><g stroke="#000000" stroke-opacity="0.5" stroke-width="4" stroke-linecap="round"><line x1="545.9" y1="413.0" x2="603.0" y2="283.9"/><line x1="545.9" y1="413.0" x2="553.7" y2="292.4"/><line x1="545.9" y1="413.0" x2="583.0" y2="313.9"/><line x1="545.9" y1="413.0" x2="624.5" y2="326.1"/><line x1="545.9" y1="413.0" x2="516.6" y2="330.5"/><line x1="545.9" y1="413.0" x2="536.3" y2="343.0"/><line x1="545.9" y1="413.0" x2="564.1" y2="345.0"/><line x1="545.9" y1="413.0" x2="494.1" y2="349.4"/><line x1="545.9" y1="413.0" x2="627.6" y2="354.6"/><line x1="545.9" y1="413.0" x2="615.9" y2="345.0"/><line x1="545.9" y1="413.0" x2="603.0" y2="346.9"/><line x1="545.9" y1="413.0" x2="599.1" y2="349.4"/><line x1="545.9" y1="413.0" x2="586.1" y2="359.0"/><line x1="545.9" y1="413.0" x2="573.2" y2="365.0"/><line x1="545.9" y1="413.0" x2="478.5" y2="363.2"/><line x1="545.9" y1="413.0" x2="486.3" y2="375.4"/><line x1="545.9" y1="413.0" x2="540.7" y2="372.0"/><line x1="545.9" y1="413.0" x2="459.1" y2="382.4"/><line x1="545.9" y1="413.0" x2="527.3" y2="389.6"/><line x1="545.9" y1="413.0" x2="590.0" y2="384.4"/><line x1="545.9" y1="413.0" x2="610.0" y2="379.3"/><line x1="545.9" y1="413.0" x2="562.8" y2="393.5"/><line x1="545.9" y1="413.0" x2="447.9" y2="396.1"/><line x1="545.9" y1="413.0" x2="514.8" y2="407.8"/><line x1="545.9" y1="413.0" x2="588.7" y2="403.1"/><line x1="545.9" y1="413.0" x2="463.0" y2="413.0"/><line x1="545.9" y1="413.0" x2="453.9" y2="415.0"/><line x1="545.9" y1="413.0" x2="492.8" y2="419.5"/><line x1="545.9" y1="413.0" x2="519.5" y2="422.6"/><line x1="545.9" y1="413.0" x2="615.4" y2="418.7"/><line x1="545.9" y1="413.0" x2="628.4" y2="435.8"/><line x1="545.9" y1="413.0" x2="583.5" y2="431.9"/><line x1="545.9" y1="413.0" x2="597.3" y2="442.3"/><line x1="545.9" y1="413.0" x2="419.4" y2="444.1"/><line x1="545.9" y1="413.0" x2="403.3" y2="453.9"/><line x1="545.9" y1="413.0" x2="449.5" y2="455.0"/><line x1="545.9" y1="413.0" x2="434.4" y2="458.3"/><line x1="545.9" y1="413.0" x2="552.4" y2="452.4"/><line x1="545.9" y1="413.0" x2="537.6" y2="456.5"/><line x1="545.9" y1="413.0" x2="615.4" y2="457.0"/><line x1="545.9" y1="413.0" x2="622.4" y2="466.9"/><line x1="545.9" y1="413.0" x2="510.9" y2="466.9"/><line x1="545.9" y1="413.0" x2="605.6" y2="471.3"/><line x1="545.9" y1="413.0" x2="548.5" y2="472.6"/><line x1="545.9" y1="413.0" x2="447.9" y2="477.8"/><line x1="545.9" y1="413.0" x2="474.6" y2="479.1"/><line x1="545.9" y1="413.0" x2="538.7" y2="482.5"/><line x1="545.9" y1="413.0" x2="575.7" y2="480.9"/><line x1="545.9" y1="413.0" x2="415.0" y2="480.9"/><line x1="545.9" y1="413.0" x2="464.3" y2="490.7"/><line x1="545.9" y1="413.0" x2="495.4" y2="491.3"/><line x1="545.9" y1="413.0" x2="525.2" y2="491.3"/><line x1="545.9" y1="413.0" x2="478.5" y2="500.6"/><line x1="545.9" y1="413.0" x2="546.5" y2="502.4"/><line x1="545.9" y1="413.0" x2="561.5" y2="509.4"/><line x1="545.9" y1="413.0" x2="584.8" y2="506.8"/><line x1="545.9" y1="413.0" x2="619.8" y2="499.8"/><line x1="545.9" y1="413.0" x2="529.1" y2="511.0"/></g><circle cx="656.6" cy="485.3" r="5.6" fill="url(#sph)" stroke="#1a1a1a" stroke-opacity="0.8" stroke-width="1.1"/><circle cx="678.7" cy="494.9" r="7.2" fill="url(#sph)" stroke="#1a1a1a" stroke-opacity="0.8" stroke-width="1.1"/><circle cx="710.0" cy="471.6" r="5.6" fill="url(#sph)" stroke="#1a1a1a" stroke-opacity="0.8" stroke-width="1.1"/><circle cx="705.2" cy="481.2" r="5.6" fill="url(#sph)" stroke="#1a1a1a" stroke-opacity="0.8" stroke-width="1.1"/><circle cx="729.3" cy="496.6" r="5.6" fill="url(#sph)" stroke="#1a1a1a" stroke-opacity="0.8" stroke-width="1.1"/><circle cx="649.8" cy="504.5" r="5.6" fill="url(#sph)" stroke="#1a1a1a" stroke-opacity="0.8" stroke-width="1.1"/><circle cx="615.6" cy="517.8" r="5.6" fill="url(#sph)" stroke="#1a1a1a" stroke-opacity="0.8" stroke-width="1.1"/><circle cx="628.1" cy="528.1" r="5.6" fill="url(#sph)" stroke="#1a1a1a" stroke-opacity="0.8" stroke-width="1.1"/><circle cx="671.5" cy="525.0" r="5.6" fill="url(#sph)" stroke="#1a1a1a" stroke-opacity="0.8" stroke-width="1.1"/><circle cx="679.9" cy="531.7" r="5.6" fill="url(#sph)" stroke="#1a1a1a" stroke-opacity="0.8" stroke-width="1.1"/><circle cx="750.9" cy="511.0" r="5.6" fill="url(#sph)" stroke="#1a1a1a" stroke-opacity="0.8" stroke-width="1.1"/><circle cx="736.0" cy="525.0" r="5.6" fill="url(#sph)" stroke="#1a1a1a" stroke-opacity="0.8" stroke-width="1.1"/><circle cx="771.4" cy="527.4" r="5.6" fill="url(#sph)" stroke="#1a1a1a" stroke-opacity="0.8" stroke-width="1.1"/><circle cx="776.2" cy="538.7" r="5.6" fill="url(#sph)" stroke="#1a1a1a" stroke-opacity="0.8" stroke-width="1.1"/><circle cx="817.8" cy="517.8" r="5.6" fill="url(#sph)" stroke="#1a1a1a" stroke-opacity="0.8" stroke-width="1.1"/><circle cx="656.6" cy="539.4" r="5.6" fill="url(#sph)" stroke="#1a1a1a" stroke-opacity="0.8" stroke-width="1.1"/><circle cx="600.5" cy="549.8" r="5.6" fill="url(#sph)" stroke="#1a1a1a" stroke-opacity="0.8" stroke-width="1.1"/><circle cx="623.8" cy="561.1" r="5.6" fill="url(#sph)" stroke="#1a1a1a" stroke-opacity="0.8" stroke-width="1.1"/><circle cx="664.3" cy="558.2" r="7.2" fill="url(#sph)" stroke="#1a1a1a" stroke-opacity="0.8" stroke-width="1.1"/><circle cx="681.8" cy="560.6" r="5.6" fill="url(#sph)" stroke="#1a1a1a" stroke-opacity="0.8" stroke-width="1.1"/><circle cx="709.5" cy="559.9" r="5.6" fill="url(#sph)" stroke="#1a1a1a" stroke-opacity="0.8" stroke-width="1.1"/><circle cx="723.7" cy="557.5" r="5.6" fill="url(#sph)" stroke="#1a1a1a" stroke-opacity="0.8" stroke-width="1.1"/><circle cx="630.6" cy="571.9" r="5.6" fill="url(#sph)" stroke="#1a1a1a" stroke-opacity="0.8" stroke-width="1.1"/><circle cx="780.3" cy="568.8" r="5.6" fill="url(#sph)" stroke="#1a1a1a" stroke-opacity="0.8" stroke-width="1.1"/><circle cx="840.0" cy="552.0" r="5.6" fill="url(#sph)" stroke="#1a1a1a" stroke-opacity="0.8" stroke-width="1.1"/><circle cx="927.1" cy="547.1" r="5.6" fill="url(#sph)" stroke="#1a1a1a" stroke-opacity="0.8" stroke-width="1.1"/><circle cx="729.3" cy="578.4" r="5.6" fill="url(#sph)" stroke="#1a1a1a" stroke-opacity="0.8" stroke-width="1.1"/><circle cx="661.4" cy="585.2" r="5.6" fill="url(#sph)" stroke="#1a1a1a" stroke-opacity="0.8" stroke-width="1.1"/><circle cx="705.2" cy="590.0" r="7.2" fill="url(#sph)" stroke="#1a1a1a" stroke-opacity="0.8" stroke-width="1.1"/><circle cx="604.1" cy="590.5" r="5.6" fill="url(#sph)" stroke="#1a1a1a" stroke-opacity="0.8" stroke-width="1.1"/><circle cx="846.7" cy="591.7" r="5.6" fill="url(#sph)" stroke="#1a1a1a" stroke-opacity="0.8" stroke-width="1.1"/><circle cx="868.9" cy="597.2" r="5.6" fill="url(#sph)" stroke="#1a1a1a" stroke-opacity="0.8" stroke-width="1.1"/><circle cx="630.6" cy="600.1" r="5.6" fill="url(#sph)" stroke="#1a1a1a" stroke-opacity="0.8" stroke-width="1.1"/><circle cx="659.0" cy="601.3" r="5.6" fill="url(#sph)" stroke="#1a1a1a" stroke-opacity="0.8" stroke-width="1.1"/><circle cx="683.5" cy="596.5" r="5.6" fill="url(#sph)" stroke="#1a1a1a" stroke-opacity="0.8" stroke-width="1.1"/><circle cx="730.5" cy="602.5" r="5.6" fill="url(#sph)" stroke="#1a1a1a" stroke-opacity="0.8" stroke-width="1.1"/><circle cx="779.3" cy="597.7" r="5.6" fill="url(#sph)" stroke="#1a1a1a" stroke-opacity="0.8" stroke-width="1.1"/><circle cx="761.8" cy="610.5" r="7.2" fill="url(#sph)" stroke="#1a1a1a" stroke-opacity="0.8" stroke-width="1.1"/><circle cx="615.6" cy="620.1" r="5.6" fill="url(#sph)" stroke="#1a1a1a" stroke-opacity="0.8" stroke-width="1.1"/><circle cx="646.2" cy="620.1" r="5.6" fill="url(#sph)" stroke="#1a1a1a" stroke-opacity="0.8" stroke-width="1.1"/><circle cx="675.1" cy="609.7" r="5.6" fill="url(#sph)" stroke="#1a1a1a" stroke-opacity="0.8" stroke-width="1.1"/><circle cx="698.7" cy="613.6" r="5.6" fill="url(#sph)" stroke="#1a1a1a" stroke-opacity="0.8" stroke-width="1.1"/><circle cx="872.5" cy="616.0" r="5.6" fill="url(#sph)" stroke="#1a1a1a" stroke-opacity="0.8" stroke-width="1.1"/><circle cx="665.9" cy="631.6" r="5.6" fill="url(#sph)" stroke="#1a1a1a" stroke-opacity="0.8" stroke-width="1.1"/><circle cx="779.3" cy="630.4" r="5.6" fill="url(#sph)" stroke="#1a1a1a" stroke-opacity="0.8" stroke-width="1.1"/><circle cx="829.2" cy="630.9" r="5.6" fill="url(#sph)" stroke="#1a1a1a" stroke-opacity="0.8" stroke-width="1.1"/><circle cx="639.0" cy="645.8" r="5.6" fill="url(#sph)" stroke="#1a1a1a" stroke-opacity="0.8" stroke-width="1.1"/><circle cx="729.7" cy="639.8" r="5.6" fill="url(#sph)" stroke="#1a1a1a" stroke-opacity="0.8" stroke-width="1.1"/><circle cx="757.7" cy="638.9" r="5.6" fill="url(#sph)" stroke="#1a1a1a" stroke-opacity="0.8" stroke-width="1.1"/><circle cx="773.8" cy="653.8" r="5.6" fill="url(#sph)" stroke="#1a1a1a" stroke-opacity="0.8" stroke-width="1.1"/><circle cx="817.1" cy="656.2" r="5.6" fill="url(#sph)" stroke="#1a1a1a" stroke-opacity="0.8" stroke-width="1.1"/><circle cx="799.1" cy="654.5" r="5.6" fill="url(#sph)" stroke="#1a1a1a" stroke-opacity="0.8" stroke-width="1.1"/><circle cx="996.7" cy="526.7" r="5.6" fill="url(#sph)" stroke="#1a1a1a" stroke-opacity="0.8" stroke-width="1.1"/><circle cx="920.7" cy="630.7" r="7.2" fill="url(#sph)" stroke="#1a1a1a" stroke-opacity="0.8" stroke-width="1.1"/><circle cx="952.7" cy="629.0" r="5.6" fill="url(#sph)" stroke="#1a1a1a" stroke-opacity="0.8" stroke-width="1.1"/><circle cx="974.0" cy="626.7" r="5.6" fill="url(#sph)" stroke="#1a1a1a" stroke-opacity="0.8" stroke-width="1.1"/><circle cx="880.7" cy="646.0" r="5.6" fill="url(#sph)" stroke="#1a1a1a" stroke-opacity="0.8" stroke-width="1.1"/><circle cx="821.0" cy="674.3" r="5.6" fill="url(#sph)" stroke="#1a1a1a" stroke-opacity="0.8" stroke-width="1.1"/><circle cx="906.7" cy="687.3" r="5.6" fill="url(#sph)" stroke="#1a1a1a" stroke-opacity="0.8" stroke-width="1.1"/><circle cx="884.0" cy="695.7" r="5.6" fill="url(#sph)" stroke="#1a1a1a" stroke-opacity="0.8" stroke-width="1.1"/><circle cx="892.7" cy="695.0" r="5.6" fill="url(#sph)" stroke="#1a1a1a" stroke-opacity="0.8" stroke-width="1.1"/><circle cx="918.3" cy="696.7" r="5.6" fill="url(#sph)" stroke="#1a1a1a" stroke-opacity="0.8" stroke-width="1.1"/><circle cx="934.3" cy="704.3" r="5.6" fill="url(#sph)" stroke="#1a1a1a" stroke-opacity="0.8" stroke-width="1.1"/><circle cx="961.0" cy="705.0" r="5.6" fill="url(#sph)" stroke="#1a1a1a" stroke-opacity="0.8" stroke-width="1.1"/><circle cx="976.7" cy="693.3" r="5.6" fill="url(#sph)" stroke="#1a1a1a" stroke-opacity="0.8" stroke-width="1.1"/><circle cx="856.0" cy="706.7" r="5.6" fill="url(#sph)" stroke="#1a1a1a" stroke-opacity="0.8" stroke-width="1.1"/><circle cx="901.7" cy="708.3" r="7.2" fill="url(#sph)" stroke="#1a1a1a" stroke-opacity="0.8" stroke-width="1.1"/><circle cx="865.0" cy="719.3" r="7.2" fill="url(#sph)" stroke="#1a1a1a" stroke-opacity="0.8" stroke-width="1.1"/><circle cx="843.3" cy="722.3" r="5.6" fill="url(#sph)" stroke="#1a1a1a" stroke-opacity="0.8" stroke-width="1.1"/><circle cx="895.0" cy="723.3" r="5.6" fill="url(#sph)" stroke="#1a1a1a" stroke-opacity="0.8" stroke-width="1.1"/><circle cx="908.3" cy="725.7" r="5.6" fill="url(#sph)" stroke="#1a1a1a" stroke-opacity="0.8" stroke-width="1.1"/><circle cx="888.3" cy="732.3" r="5.6" fill="url(#sph)" stroke="#1a1a1a" stroke-opacity="0.8" stroke-width="1.1"/><circle cx="897.7" cy="737.7" r="5.6" fill="url(#sph)" stroke="#1a1a1a" stroke-opacity="0.8" stroke-width="1.1"/><circle cx="931.0" cy="729.3" r="5.6" fill="url(#sph)" stroke="#1a1a1a" stroke-opacity="0.8" stroke-width="1.1"/><circle cx="840.0" cy="732.7" r="5.6" fill="url(#sph)" stroke="#1a1a1a" stroke-opacity="0.8" stroke-width="1.1"/><circle cx="900.7" cy="757.3" r="5.6" fill="url(#sph)" stroke="#1a1a1a" stroke-opacity="0.8" stroke-width="1.1"/><circle cx="913.3" cy="783.3" r="5.6" fill="url(#sph)" stroke="#1a1a1a" stroke-opacity="0.8" stroke-width="1.1"/><circle cx="870.7" cy="791.0" r="5.6" fill="url(#sph)" stroke="#1a1a1a" stroke-opacity="0.8" stroke-width="1.1"/><circle cx="864.0" cy="798.3" r="5.6" fill="url(#sph)" stroke="#1a1a1a" stroke-opacity="0.8" stroke-width="1.1"/><circle cx="866.7" cy="804.0" r="5.6" fill="url(#sph)" stroke="#1a1a1a" stroke-opacity="0.8" stroke-width="1.1"/><circle cx="813.3" cy="804.0" r="5.6" fill="url(#sph)" stroke="#1a1a1a" stroke-opacity="0.8" stroke-width="1.1"/><circle cx="790.0" cy="793.3" r="5.6" fill="url(#sph)" stroke="#1a1a1a" stroke-opacity="0.8" stroke-width="1.1"/><circle cx="797.3" cy="823.3" r="5.6" fill="url(#sph)" stroke="#1a1a1a" stroke-opacity="0.8" stroke-width="1.1"/><circle cx="814.3" cy="829.3" r="5.6" fill="url(#sph)" stroke="#1a1a1a" stroke-opacity="0.8" stroke-width="1.1"/><circle cx="771.7" cy="856.7" r="5.6" fill="url(#sph)" stroke="#1a1a1a" stroke-opacity="0.8" stroke-width="1.1"/><circle cx="790.7" cy="855.7" r="5.6" fill="url(#sph)" stroke="#1a1a1a" stroke-opacity="0.8" stroke-width="1.1"/><circle cx="767.3" cy="754.3" r="5.6" fill="url(#sph)" stroke="#1a1a1a" stroke-opacity="0.8" stroke-width="1.1"/><circle cx="770.0" cy="774.3" r="5.6" fill="url(#sph)" stroke="#1a1a1a" stroke-opacity="0.8" stroke-width="1.1"/><circle cx="761.7" cy="780.0" r="5.6" fill="url(#sph)" stroke="#1a1a1a" stroke-opacity="0.8" stroke-width="1.1"/><circle cx="721.0" cy="757.7" r="5.6" fill="url(#sph)" stroke="#1a1a1a" stroke-opacity="0.8" stroke-width="1.1"/><circle cx="666.7" cy="762.3" r="5.6" fill="url(#sph)" stroke="#1a1a1a" stroke-opacity="0.8" stroke-width="1.1"/><circle cx="641.7" cy="760.7" r="7.2" fill="url(#sph)" stroke="#1a1a1a" stroke-opacity="0.8" stroke-width="1.1"/><circle cx="630.0" cy="756.7" r="5.6" fill="url(#sph)" stroke="#1a1a1a" stroke-opacity="0.8" stroke-width="1.1"/><circle cx="648.3" cy="774.3" r="5.6" fill="url(#sph)" stroke="#1a1a1a" stroke-opacity="0.8" stroke-width="1.1"/><circle cx="671.7" cy="784.3" r="8.5" fill="url(#sph)" stroke="#1a1a1a" stroke-opacity="0.8" stroke-width="1.1"/><circle cx="672.7" cy="800.0" r="5.6" fill="url(#sph)" stroke="#1a1a1a" stroke-opacity="0.8" stroke-width="1.1"/><circle cx="669.3" cy="826.0" r="5.6" fill="url(#sph)" stroke="#1a1a1a" stroke-opacity="0.8" stroke-width="1.1"/><circle cx="591.7" cy="794.3" r="5.6" fill="url(#sph)" stroke="#1a1a1a" stroke-opacity="0.8" stroke-width="1.1"/><circle cx="387.7" cy="495.6" r="5.6" fill="url(#sph)" stroke="#1a1a1a" stroke-opacity="0.8" stroke-width="1.1"/><circle cx="423.8" cy="502.9" r="7.2" fill="url(#sph)" stroke="#1a1a1a" stroke-opacity="0.8" stroke-width="1.1"/><circle cx="439.4" cy="502.9" r="5.6" fill="url(#sph)" stroke="#1a1a1a" stroke-opacity="0.8" stroke-width="1.1"/><circle cx="389.4" cy="519.2" r="5.6" fill="url(#sph)" stroke="#1a1a1a" stroke-opacity="0.8" stroke-width="1.1"/><circle cx="437.0" cy="533.4" r="5.6" fill="url(#sph)" stroke="#1a1a1a" stroke-opacity="0.8" stroke-width="1.1"/><circle cx="455.1" cy="537.3" r="7.2" fill="url(#sph)" stroke="#1a1a1a" stroke-opacity="0.8" stroke-width="1.1"/><circle cx="398.0" cy="540.7" r="5.6" fill="url(#sph)" stroke="#1a1a1a" stroke-opacity="0.8" stroke-width="1.1"/><circle cx="377.3" cy="549.8" r="5.6" fill="url(#sph)" stroke="#1a1a1a" stroke-opacity="0.8" stroke-width="1.1"/><circle cx="477.2" cy="556.6" r="5.6" fill="url(#sph)" stroke="#1a1a1a" stroke-opacity="0.8" stroke-width="1.1"/><circle cx="510.0" cy="536.6" r="7.2" fill="url(#sph)" stroke="#1a1a1a" stroke-opacity="0.8" stroke-width="1.1"/><circle cx="520.1" cy="536.6" r="5.6" fill="url(#sph)" stroke="#1a1a1a" stroke-opacity="0.8" stroke-width="1.1"/><circle cx="532.1" cy="533.4" r="7.2" fill="url(#sph)" stroke="#1a1a1a" stroke-opacity="0.8" stroke-width="1.1"/><circle cx="546.1" cy="531.3" r="5.6" fill="url(#sph)" stroke="#1a1a1a" stroke-opacity="0.8" stroke-width="1.1"/><circle cx="567.5" cy="539.7" r="5.6" fill="url(#sph)" stroke="#1a1a1a" stroke-opacity="0.8" stroke-width="1.1"/><circle cx="589.9" cy="519.7" r="5.6" fill="url(#sph)" stroke="#1a1a1a" stroke-opacity="0.8" stroke-width="1.1"/><circle cx="540.5" cy="556.6" r="7.2" fill="url(#sph)" stroke="#1a1a1a" stroke-opacity="0.8" stroke-width="1.1"/><circle cx="567.5" cy="557.0" r="5.6" fill="url(#sph)" stroke="#1a1a1a" stroke-opacity="0.8" stroke-width="1.1"/><circle cx="500.3" cy="568.3" r="7.2" fill="url(#sph)" stroke="#1a1a1a" stroke-opacity="0.8" stroke-width="1.1"/><circle cx="451.5" cy="571.0" r="5.6" fill="url(#sph)" stroke="#1a1a1a" stroke-opacity="0.8" stroke-width="1.1"/><circle cx="467.1" cy="583.0" r="7.2" fill="url(#sph)" stroke="#1a1a1a" stroke-opacity="0.8" stroke-width="1.1"/><circle cx="387.0" cy="575.1" r="5.6" fill="url(#sph)" stroke="#1a1a1a" stroke-opacity="0.8" stroke-width="1.1"/><circle cx="451.5" cy="589.5" r="5.6" fill="url(#sph)" stroke="#1a1a1a" stroke-opacity="0.8" stroke-width="1.1"/><circle cx="535.0" cy="588.3" r="8.5" fill="url(#sph)" stroke="#1a1a1a" stroke-opacity="0.8" stroke-width="1.1"/><circle cx="573.0" cy="571.0" r="7.2" fill="url(#sph)" stroke="#1a1a1a" stroke-opacity="0.8" stroke-width="1.1"/><circle cx="406.9" cy="594.8" r="5.6" fill="url(#sph)" stroke="#1a1a1a" stroke-opacity="0.8" stroke-width="1.1"/><circle cx="503.7" cy="598.4" r="5.6" fill="url(#sph)" stroke="#1a1a1a" stroke-opacity="0.8" stroke-width="1.1"/><circle cx="390.1" cy="603.3" r="5.6" fill="url(#sph)" stroke="#1a1a1a" stroke-opacity="0.8" stroke-width="1.1"/><circle cx="428.6" cy="606.9" r="5.6" fill="url(#sph)" stroke="#1a1a1a" stroke-opacity="0.8" stroke-width="1.1"/><circle cx="478.0" cy="611.2" r="7.2" fill="url(#sph)" stroke="#1a1a1a" stroke-opacity="0.8" stroke-width="1.1"/><circle cx="515.3" cy="611.7" r="7.2" fill="url(#sph)" stroke="#1a1a1a" stroke-opacity="0.8" stroke-width="1.1"/><circle cx="581.5" cy="604.0" r="5.6" fill="url(#sph)" stroke="#1a1a1a" stroke-opacity="0.8" stroke-width="1.1"/><circle cx="388.4" cy="629.7" r="7.2" fill="url(#sph)" stroke="#1a1a1a" stroke-opacity="0.8" stroke-width="1.1"/><circle cx="406.9" cy="629.7" r="5.6" fill="url(#sph)" stroke="#1a1a1a" stroke-opacity="0.8" stroke-width="1.1"/><circle cx="433.9" cy="635.8" r="7.2" fill="url(#sph)" stroke="#1a1a1a" stroke-opacity="0.8" stroke-width="1.1"/><circle cx="467.6" cy="634.1" r="5.6" fill="url(#sph)" stroke="#1a1a1a" stroke-opacity="0.8" stroke-width="1.1"/><circle cx="493.1" cy="635.8" r="7.2" fill="url(#sph)" stroke="#1a1a1a" stroke-opacity="0.8" stroke-width="1.1"/><circle cx="522.5" cy="626.8" r="5.6" fill="url(#sph)" stroke="#1a1a1a" stroke-opacity="0.8" stroke-width="1.1"/><circle cx="538.1" cy="629.3" r="5.6" fill="url(#sph)" stroke="#1a1a1a" stroke-opacity="0.8" stroke-width="1.1"/><circle cx="551.9" cy="631.7" r="5.6" fill="url(#sph)" stroke="#1a1a1a" stroke-opacity="0.8" stroke-width="1.1"/><circle cx="576.2" cy="630.9" r="7.2" fill="url(#sph)" stroke="#1a1a1a" stroke-opacity="0.8" stroke-width="1.1"/><circle cx="588.2" cy="622.5" r="5.6" fill="url(#sph)" stroke="#1a1a1a" stroke-opacity="0.8" stroke-width="1.1"/><circle cx="588.2" cy="635.8" r="5.6" fill="url(#sph)" stroke="#1a1a1a" stroke-opacity="0.8" stroke-width="1.1"/><circle cx="583.9" cy="645.4" r="7.2" fill="url(#sph)" stroke="#1a1a1a" stroke-opacity="0.8" stroke-width="1.1"/><circle cx="605.5" cy="646.1" r="5.6" fill="url(#sph)" stroke="#1a1a1a" stroke-opacity="0.8" stroke-width="1.1"/><circle cx="434.1" cy="652.1" r="5.6" fill="url(#sph)" stroke="#1a1a1a" stroke-opacity="0.8" stroke-width="1.1"/><circle cx="508.8" cy="650.2" r="5.6" fill="url(#sph)" stroke="#1a1a1a" stroke-opacity="0.8" stroke-width="1.1"/><circle cx="540.5" cy="647.8" r="5.6" fill="url(#sph)" stroke="#1a1a1a" stroke-opacity="0.8" stroke-width="1.1"/><circle cx="546.6" cy="656.9" r="5.6" fill="url(#sph)" stroke="#1a1a1a" stroke-opacity="0.8" stroke-width="1.1"/><circle cx="563.9" cy="658.6" r="7.2" fill="url(#sph)" stroke="#1a1a1a" stroke-opacity="0.8" stroke-width="1.1"/><circle cx="524.9" cy="663.7" r="5.6" fill="url(#sph)" stroke="#1a1a1a" stroke-opacity="0.8" stroke-width="1.1"/><circle cx="433.4" cy="672.6" r="5.6" fill="url(#sph)" stroke="#1a1a1a" stroke-opacity="0.8" stroke-width="1.1"/><circle cx="468.3" cy="671.9" r="5.6" fill="url(#sph)" stroke="#1a1a1a" stroke-opacity="0.8" stroke-width="1.1"/><circle cx="584.6" cy="678.6" r="5.6" fill="url(#sph)" stroke="#1a1a1a" stroke-opacity="0.8" stroke-width="1.1"/><circle cx="591.6" cy="687.5" r="5.6" fill="url(#sph)" stroke="#1a1a1a" stroke-opacity="0.8" stroke-width="1.1"/><circle cx="499.1" cy="682.9" r="7.2" fill="url(#sph)" stroke="#1a1a1a" stroke-opacity="0.8" stroke-width="1.1"/><circle cx="532.6" cy="694.3" r="5.6" fill="url(#sph)" stroke="#1a1a1a" stroke-opacity="0.8" stroke-width="1.1"/><circle cx="548.5" cy="693.8" r="5.6" fill="url(#sph)" stroke="#1a1a1a" stroke-opacity="0.8" stroke-width="1.1"/><circle cx="570.6" cy="695.5" r="5.6" fill="url(#sph)" stroke="#1a1a1a" stroke-opacity="0.8" stroke-width="1.1"/><circle cx="469.5" cy="705.6" r="5.6" fill="url(#sph)" stroke="#1a1a1a" stroke-opacity="0.8" stroke-width="1.1"/><circle cx="491.9" cy="718.8" r="5.6" fill="url(#sph)" stroke="#1a1a1a" stroke-opacity="0.8" stroke-width="1.1"/><circle cx="553.8" cy="716.6" r="5.6" fill="url(#sph)" stroke="#1a1a1a" stroke-opacity="0.8" stroke-width="1.1"/><circle cx="568.2" cy="721.5" r="5.6" fill="url(#sph)" stroke="#1a1a1a" stroke-opacity="0.8" stroke-width="1.1"/><circle cx="591.6" cy="709.9" r="5.6" fill="url(#sph)" stroke="#1a1a1a" stroke-opacity="0.8" stroke-width="1.1"/><circle cx="595.9" cy="721.9" r="5.6" fill="url(#sph)" stroke="#1a1a1a" stroke-opacity="0.8" stroke-width="1.1"/><circle cx="431.7" cy="726.0" r="5.6" fill="url(#sph)" stroke="#1a1a1a" stroke-opacity="0.8" stroke-width="1.1"/><circle cx="447.9" cy="723.1" r="5.6" fill="url(#sph)" stroke="#1a1a1a" stroke-opacity="0.8" stroke-width="1.1"/><circle cx="647.7" cy="274.9" r="5.6" fill="url(#sph)" stroke="#1a1a1a" stroke-opacity="0.8" stroke-width="1.1"/><circle cx="719.9" cy="278.8" r="5.6" fill="url(#sph)" stroke="#1a1a1a" stroke-opacity="0.8" stroke-width="1.1"/><circle cx="762.0" cy="282.1" r="5.6" fill="url(#sph)" stroke="#1a1a1a" stroke-opacity="0.8" stroke-width="1.1"/><circle cx="788.0" cy="285.3" r="5.6" fill="url(#sph)" stroke="#1a1a1a" stroke-opacity="0.8" stroke-width="1.1"/><circle cx="676.1" cy="297.8" r="5.6" fill="url(#sph)" stroke="#1a1a1a" stroke-opacity="0.8" stroke-width="1.1"/><circle cx="702.3" cy="295.6" r="5.6" fill="url(#sph)" stroke="#1a1a1a" stroke-opacity="0.8" stroke-width="1.1"/><circle cx="732.7" cy="307.4" r="7.2" fill="url(#sph)" stroke="#1a1a1a" stroke-opacity="0.8" stroke-width="1.1"/><circle cx="765.6" cy="308.9" r="5.6" fill="url(#sph)" stroke="#1a1a1a" stroke-opacity="0.8" stroke-width="1.1"/><circle cx="809.7" cy="316.1" r="5.6" fill="url(#sph)" stroke="#1a1a1a" stroke-opacity="0.8" stroke-width="1.1"/><circle cx="638.1" cy="304.5" r="5.6" fill="url(#sph)" stroke="#1a1a1a" stroke-opacity="0.8" stroke-width="1.1"/><circle cx="656.1" cy="315.4" r="5.6" fill="url(#sph)" stroke="#1a1a1a" stroke-opacity="0.8" stroke-width="1.1"/><circle cx="643.4" cy="328.6" r="5.6" fill="url(#sph)" stroke="#1a1a1a" stroke-opacity="0.8" stroke-width="1.1"/><circle cx="679.0" cy="341.4" r="5.6" fill="url(#sph)" stroke="#1a1a1a" stroke-opacity="0.8" stroke-width="1.1"/><circle cx="717.5" cy="335.8" r="7.2" fill="url(#sph)" stroke="#1a1a1a" stroke-opacity="0.8" stroke-width="1.1"/><circle cx="787.8" cy="343.8" r="5.6" fill="url(#sph)" stroke="#1a1a1a" stroke-opacity="0.8" stroke-width="1.1"/><circle cx="831.1" cy="337.0" r="7.2" fill="url(#sph)" stroke="#1a1a1a" stroke-opacity="0.8" stroke-width="1.1"/><circle cx="886.7" cy="337.8" r="5.6" fill="url(#sph)" stroke="#1a1a1a" stroke-opacity="0.8" stroke-width="1.1"/><circle cx="911.3" cy="339.4" r="5.6" fill="url(#sph)" stroke="#1a1a1a" stroke-opacity="0.8" stroke-width="1.1"/><circle cx="655.6" cy="357.0" r="7.2" fill="url(#sph)" stroke="#1a1a1a" stroke-opacity="0.8" stroke-width="1.1"/><circle cx="678.3" cy="358.7" r="7.2" fill="url(#sph)" stroke="#1a1a1a" stroke-opacity="0.8" stroke-width="1.1"/><circle cx="685.5" cy="365.9" r="5.6" fill="url(#sph)" stroke="#1a1a1a" stroke-opacity="0.8" stroke-width="1.1"/><circle cx="709.1" cy="363.5" r="5.6" fill="url(#sph)" stroke="#1a1a1a" stroke-opacity="0.8" stroke-width="1.1"/><circle cx="747.6" cy="357.5" r="5.6" fill="url(#sph)" stroke="#1a1a1a" stroke-opacity="0.8" stroke-width="1.1"/><circle cx="792.1" cy="367.1" r="5.6" fill="url(#sph)" stroke="#1a1a1a" stroke-opacity="0.8" stroke-width="1.1"/><circle cx="780.1" cy="373.1" r="5.6" fill="url(#sph)" stroke="#1a1a1a" stroke-opacity="0.8" stroke-width="1.1"/><circle cx="829.9" cy="358.7" r="5.6" fill="url(#sph)" stroke="#1a1a1a" stroke-opacity="0.8" stroke-width="1.1"/><circle cx="865.5" cy="349.6" r="5.6" fill="url(#sph)" stroke="#1a1a1a" stroke-opacity="0.8" stroke-width="1.1"/><circle cx="738.7" cy="379.2" r="5.6" fill="url(#sph)" stroke="#1a1a1a" stroke-opacity="0.8" stroke-width="1.1"/><circle cx="690.3" cy="385.7" r="7.2" fill="url(#sph)" stroke="#1a1a1a" stroke-opacity="0.8" stroke-width="1.1"/><circle cx="826.5" cy="377.5" r="5.6" fill="url(#sph)" stroke="#1a1a1a" stroke-opacity="0.8" stroke-width="1.1"/><circle cx="876.4" cy="379.2" r="5.6" fill="url(#sph)" stroke="#1a1a1a" stroke-opacity="0.8" stroke-width="1.1"/><circle cx="905.7" cy="391.2" r="5.6" fill="url(#sph)" stroke="#1a1a1a" stroke-opacity="0.8" stroke-width="1.1"/><circle cx="642.1" cy="393.6" r="8.5" fill="url(#sph)" stroke="#1a1a1a" stroke-opacity="0.8" stroke-width="1.1"/><circle cx="675.8" cy="397.2" r="5.6" fill="url(#sph)" stroke="#1a1a1a" stroke-opacity="0.8" stroke-width="1.1"/><circle cx="756.0" cy="398.4" r="5.6" fill="url(#sph)" stroke="#1a1a1a" stroke-opacity="0.8" stroke-width="1.1"/><circle cx="786.1" cy="397.9" r="5.6" fill="url(#sph)" stroke="#1a1a1a" stroke-opacity="0.8" stroke-width="1.1"/><circle cx="848.7" cy="400.8" r="5.6" fill="url(#sph)" stroke="#1a1a1a" stroke-opacity="0.8" stroke-width="1.1"/><circle cx="939.5" cy="410.9" r="5.6" fill="url(#sph)" stroke="#1a1a1a" stroke-opacity="0.8" stroke-width="1.1"/><circle cx="707.1" cy="406.1" r="5.6" fill="url(#sph)" stroke="#1a1a1a" stroke-opacity="0.8" stroke-width="1.1"/><circle cx="665.3" cy="418.2" r="5.6" fill="url(#sph)" stroke="#1a1a1a" stroke-opacity="0.8" stroke-width="1.1"/><circle cx="712.7" cy="419.4" r="7.2" fill="url(#sph)" stroke="#1a1a1a" stroke-opacity="0.8" stroke-width="1.1"/><circle cx="831.8" cy="416.0" r="5.6" fill="url(#sph)" stroke="#1a1a1a" stroke-opacity="0.8" stroke-width="1.1"/><circle cx="635.6" cy="430.9" r="5.6" fill="url(#sph)" stroke="#1a1a1a" stroke-opacity="0.8" stroke-width="1.1"/><circle cx="692.7" cy="441.0" r="7.2" fill="url(#sph)" stroke="#1a1a1a" stroke-opacity="0.8" stroke-width="1.1"/><circle cx="707.4" cy="437.4" r="5.6" fill="url(#sph)" stroke="#1a1a1a" stroke-opacity="0.8" stroke-width="1.1"/><circle cx="771.7" cy="433.3" r="7.2" fill="url(#sph)" stroke="#1a1a1a" stroke-opacity="0.8" stroke-width="1.1"/><circle cx="877.6" cy="433.3" r="5.6" fill="url(#sph)" stroke="#1a1a1a" stroke-opacity="0.8" stroke-width="1.1"/><circle cx="973.9" cy="438.1" r="5.6" fill="url(#sph)" stroke="#1a1a1a" stroke-opacity="0.8" stroke-width="1.1"/><circle cx="928.9" cy="444.9" r="5.6" fill="url(#sph)" stroke="#1a1a1a" stroke-opacity="0.8" stroke-width="1.1"/><circle cx="641.7" cy="445.4" r="7.2" fill="url(#sph)" stroke="#1a1a1a" stroke-opacity="0.8" stroke-width="1.1"/><circle cx="817.4" cy="450.7" r="5.6" fill="url(#sph)" stroke="#1a1a1a" stroke-opacity="0.8" stroke-width="1.1"/><circle cx="842.0" cy="445.4" r="5.6" fill="url(#sph)" stroke="#1a1a1a" stroke-opacity="0.8" stroke-width="1.1"/><circle cx="861.5" cy="447.0" r="5.6" fill="url(#sph)" stroke="#1a1a1a" stroke-opacity="0.8" stroke-width="1.1"/><circle cx="728.3" cy="455.5" r="5.6" fill="url(#sph)" stroke="#1a1a1a" stroke-opacity="0.8" stroke-width="1.1"/><circle cx="757.7" cy="456.9" r="5.6" fill="url(#sph)" stroke="#1a1a1a" stroke-opacity="0.8" stroke-width="1.1"/><circle cx="687.4" cy="466.5" r="5.6" fill="url(#sph)" stroke="#1a1a1a" stroke-opacity="0.8" stroke-width="1.1"/><circle cx="709.8" cy="471.8" r="5.6" fill="url(#sph)" stroke="#1a1a1a" stroke-opacity="0.8" stroke-width="1.1"/><circle cx="943.8" cy="473.0" r="5.6" fill="url(#sph)" stroke="#1a1a1a" stroke-opacity="0.8" stroke-width="1.1"/><circle cx="870.4" cy="501.9" r="5.6" fill="url(#sph)" stroke="#1a1a1a" stroke-opacity="0.8" stroke-width="1.1"/><circle cx="603.0" cy="283.9" r="5.6" fill="url(#sph)" stroke="#1a1a1a" stroke-opacity="0.8" stroke-width="1.1"/><circle cx="553.7" cy="292.4" r="5.6" fill="url(#sph)" stroke="#1a1a1a" stroke-opacity="0.8" stroke-width="1.1"/><circle cx="583.0" cy="313.9" r="5.6" fill="url(#sph)" stroke="#1a1a1a" stroke-opacity="0.8" stroke-width="1.1"/><circle cx="624.5" cy="326.1" r="5.6" fill="url(#sph)" stroke="#1a1a1a" stroke-opacity="0.8" stroke-width="1.1"/><circle cx="516.6" cy="330.5" r="5.6" fill="url(#sph)" stroke="#1a1a1a" stroke-opacity="0.8" stroke-width="1.1"/><circle cx="536.3" cy="343.0" r="7.2" fill="url(#sph)" stroke="#1a1a1a" stroke-opacity="0.8" stroke-width="1.1"/><circle cx="564.1" cy="345.0" r="7.2" fill="url(#sph)" stroke="#1a1a1a" stroke-opacity="0.8" stroke-width="1.1"/><circle cx="494.1" cy="349.4" r="5.6" fill="url(#sph)" stroke="#1a1a1a" stroke-opacity="0.8" stroke-width="1.1"/><circle cx="627.6" cy="354.6" r="5.6" fill="url(#sph)" stroke="#1a1a1a" stroke-opacity="0.8" stroke-width="1.1"/><circle cx="615.9" cy="345.0" r="5.6" fill="url(#sph)" stroke="#1a1a1a" stroke-opacity="0.8" stroke-width="1.1"/><circle cx="603.0" cy="346.9" r="5.6" fill="url(#sph)" stroke="#1a1a1a" stroke-opacity="0.8" stroke-width="1.1"/><circle cx="599.1" cy="349.4" r="5.6" fill="url(#sph)" stroke="#1a1a1a" stroke-opacity="0.8" stroke-width="1.1"/><circle cx="586.1" cy="359.0" r="7.2" fill="url(#sph)" stroke="#1a1a1a" stroke-opacity="0.8" stroke-width="1.1"/><circle cx="573.2" cy="365.0" r="5.6" fill="url(#sph)" stroke="#1a1a1a" stroke-opacity="0.8" stroke-width="1.1"/><circle cx="478.5" cy="363.2" r="5.6" fill="url(#sph)" stroke="#1a1a1a" stroke-opacity="0.8" stroke-width="1.1"/><circle cx="486.3" cy="375.4" r="7.2" fill="url(#sph)" stroke="#1a1a1a" stroke-opacity="0.8" stroke-width="1.1"/><circle cx="540.7" cy="372.0" r="7.2" fill="url(#sph)" stroke="#1a1a1a" stroke-opacity="0.8" stroke-width="1.1"/><circle cx="459.1" cy="382.4" r="5.6" fill="url(#sph)" stroke="#1a1a1a" stroke-opacity="0.8" stroke-width="1.1"/><circle cx="527.3" cy="389.6" r="7.2" fill="url(#sph)" stroke="#1a1a1a" stroke-opacity="0.8" stroke-width="1.1"/><circle cx="590.0" cy="384.4" r="7.2" fill="url(#sph)" stroke="#1a1a1a" stroke-opacity="0.8" stroke-width="1.1"/><circle cx="610.0" cy="379.3" r="7.2" fill="url(#sph)" stroke="#1a1a1a" stroke-opacity="0.8" stroke-width="1.1"/><circle cx="562.8" cy="393.5" r="7.2" fill="url(#sph)" stroke="#1a1a1a" stroke-opacity="0.8" stroke-width="1.1"/><circle cx="447.9" cy="396.1" r="5.6" fill="url(#sph)" stroke="#1a1a1a" stroke-opacity="0.8" stroke-width="1.1"/><circle cx="514.8" cy="407.8" r="7.2" fill="url(#sph)" stroke="#1a1a1a" stroke-opacity="0.8" stroke-width="1.1"/><circle cx="588.7" cy="403.1" r="7.2" fill="url(#sph)" stroke="#1a1a1a" stroke-opacity="0.8" stroke-width="1.1"/><circle cx="463.0" cy="413.0" r="7.2" fill="url(#sph)" stroke="#1a1a1a" stroke-opacity="0.8" stroke-width="1.1"/><circle cx="453.9" cy="415.0" r="5.6" fill="url(#sph)" stroke="#1a1a1a" stroke-opacity="0.8" stroke-width="1.1"/><circle cx="492.8" cy="419.5" r="7.2" fill="url(#sph)" stroke="#1a1a1a" stroke-opacity="0.8" stroke-width="1.1"/><circle cx="519.5" cy="422.6" r="7.2" fill="url(#sph)" stroke="#1a1a1a" stroke-opacity="0.8" stroke-width="1.1"/><circle cx="615.4" cy="418.7" r="7.2" fill="url(#sph)" stroke="#1a1a1a" stroke-opacity="0.8" stroke-width="1.1"/><circle cx="628.4" cy="435.8" r="5.6" fill="url(#sph)" stroke="#1a1a1a" stroke-opacity="0.8" stroke-width="1.1"/><circle cx="583.5" cy="431.9" r="7.2" fill="url(#sph)" stroke="#1a1a1a" stroke-opacity="0.8" stroke-width="1.1"/><circle cx="597.3" cy="442.3" r="5.6" fill="url(#sph)" stroke="#1a1a1a" stroke-opacity="0.8" stroke-width="1.1"/><circle cx="419.4" cy="444.1" r="5.6" fill="url(#sph)" stroke="#1a1a1a" stroke-opacity="0.8" stroke-width="1.1"/><circle cx="403.3" cy="453.9" r="5.6" fill="url(#sph)" stroke="#1a1a1a" stroke-opacity="0.8" stroke-width="1.1"/><circle cx="449.5" cy="455.0" r="7.2" fill="url(#sph)" stroke="#1a1a1a" stroke-opacity="0.8" stroke-width="1.1"/><circle cx="434.4" cy="458.3" r="5.6" fill="url(#sph)" stroke="#1a1a1a" stroke-opacity="0.8" stroke-width="1.1"/><circle cx="552.4" cy="452.4" r="7.2" fill="url(#sph)" stroke="#1a1a1a" stroke-opacity="0.8" stroke-width="1.1"/><circle cx="537.6" cy="456.5" r="5.6" fill="url(#sph)" stroke="#1a1a1a" stroke-opacity="0.8" stroke-width="1.1"/><circle cx="615.4" cy="457.0" r="5.6" fill="url(#sph)" stroke="#1a1a1a" stroke-opacity="0.8" stroke-width="1.1"/><circle cx="622.4" cy="466.9" r="5.6" fill="url(#sph)" stroke="#1a1a1a" stroke-opacity="0.8" stroke-width="1.1"/><circle cx="510.9" cy="466.9" r="7.2" fill="url(#sph)" stroke="#1a1a1a" stroke-opacity="0.8" stroke-width="1.1"/><circle cx="605.6" cy="471.3" r="5.6" fill="url(#sph)" stroke="#1a1a1a" stroke-opacity="0.8" stroke-width="1.1"/><circle cx="548.5" cy="472.6" r="5.6" fill="url(#sph)" stroke="#1a1a1a" stroke-opacity="0.8" stroke-width="1.1"/><circle cx="447.9" cy="477.8" r="7.2" fill="url(#sph)" stroke="#1a1a1a" stroke-opacity="0.8" stroke-width="1.1"/><circle cx="474.6" cy="479.1" r="7.2" fill="url(#sph)" stroke="#1a1a1a" stroke-opacity="0.8" stroke-width="1.1"/><circle cx="538.7" cy="482.5" r="5.6" fill="url(#sph)" stroke="#1a1a1a" stroke-opacity="0.8" stroke-width="1.1"/><circle cx="575.7" cy="480.9" r="7.2" fill="url(#sph)" stroke="#1a1a1a" stroke-opacity="0.8" stroke-width="1.1"/><circle cx="415.0" cy="480.9" r="7.2" fill="url(#sph)" stroke="#1a1a1a" stroke-opacity="0.8" stroke-width="1.1"/><circle cx="464.3" cy="490.7" r="5.6" fill="url(#sph)" stroke="#1a1a1a" stroke-opacity="0.8" stroke-width="1.1"/><circle cx="495.4" cy="491.3" r="8.5" fill="url(#sph)" stroke="#1a1a1a" stroke-opacity="0.8" stroke-width="1.1"/><circle cx="525.2" cy="491.3" r="5.6" fill="url(#sph)" stroke="#1a1a1a" stroke-opacity="0.8" stroke-width="1.1"/><circle cx="478.5" cy="500.6" r="7.2" fill="url(#sph)" stroke="#1a1a1a" stroke-opacity="0.8" stroke-width="1.1"/><circle cx="546.5" cy="502.4" r="5.6" fill="url(#sph)" stroke="#1a1a1a" stroke-opacity="0.8" stroke-width="1.1"/><circle cx="561.5" cy="509.4" r="7.2" fill="url(#sph)" stroke="#1a1a1a" stroke-opacity="0.8" stroke-width="1.1"/><circle cx="584.8" cy="506.8" r="7.2" fill="url(#sph)" stroke="#1a1a1a" stroke-opacity="0.8" stroke-width="1.1"/><circle cx="619.8" cy="499.8" r="5.6" fill="url(#sph)" stroke="#1a1a1a" stroke-opacity="0.8" stroke-width="1.1"/><circle cx="529.1" cy="511.0" r="7.2" fill="url(#sph)" stroke="#1a1a1a" stroke-opacity="0.8" stroke-width="1.1"/><circle cx="399.5" cy="191" r="39.5" fill="#e8e8e8" fill-opacity="0.7"/><circle cx="399.5" cy="191" r="37.5" fill="#8e8c88" fill-opacity="0.88"/><path d="M378 166 Q399.5 156 421 166 L408 180 Q399.5 175 391 180 Z" fill="#a8a6a2" fill-opacity="0.8"/><path d="M380 216 Q399.5 226 419 216 L409 202 Q399.5 207 390 202 Z" fill="#a8a6a2" fill-opacity="0.8"/><path d="M425 170 Q436 190 425 212 L412 200 Q414 191 412 182 Z" fill="#a8a6a2" fill-opacity="0.7"/><circle cx="399.5" cy="191" r="11" fill="#a5a39f"/><circle cx="399.5" cy="191" r="2.3" fill="#eee"/><path d="M399.5 159 l-5 9 h10z M399.5 224 l-5 -9 h10z M367 191 l9 -5 v10z M432 191 l-9 -5 v10z" fill="#e6e6e6"/><rect x="997" y="417" width="26" height="296" rx="4" fill="#807e7a" fill-opacity="0.82" stroke="#d8d8d8" stroke-opacity="0.8"/><line x1="1012" y1="445" x2="1012" y2="685" stroke="#6a6866" stroke-width="2"/><rect x="1005" y="450.0" width="3" height="1.2" fill="#d0d0d0"/><rect x="1005" y="462.3" width="3" height="1.2" fill="#d0d0d0"/><rect x="1005" y="474.6" width="3" height="1.2" fill="#d0d0d0"/><rect x="1005" y="486.9" width="3" height="1.2" fill="#d0d0d0"/><rect x="1005" y="499.2" width="3" height="1.2" fill="#d0d0d0"/><rect x="1005" y="511.5" width="3" height="1.2" fill="#d0d0d0"/><rect x="1005" y="523.8" width="3" height="1.2" fill="#d0d0d0"/><rect x="1005" y="536.1" width="3" height="1.2" fill="#d0d0d0"/><rect x="1005" y="548.4" width="3" height="1.2" fill="#d0d0d0"/><rect x="1005" y="560.7" width="3" height="1.2" fill="#d0d0d0"/><rect x="1005" y="573.0" width="3" height="1.2" fill="#d0d0d0"/><rect x="1005" y="585.3" width="3" height="1.2" fill="#d0d0d0"/><rect x="1005" y="597.6" width="3" height="1.2" fill="#d0d0d0"/><rect x="1005" y="609.9" width="3" height="1.2" fill="#d0d0d0"/><rect x="1005" y="622.2" width="3" height="1.2" fill="#d0d0d0"/><rect x="1005" y="634.5" width="3" height="1.2" fill="#d0d0d0"/><rect x="1005" y="646.8" width="3" height="1.2" fill="#d0d0d0"/><rect x="1005" y="659.1" width="3" height="1.2" fill="#d0d0d0"/><rect x="1005" y="671.4" width="3" height="1.2" fill="#d0d0d0"/><ellipse cx="1012" cy="581" rx="4" ry="8.5" fill="#b8b6b2" stroke="#999"/><text x="1003" y="434" font-family="Liberation Sans" font-size="15" fill="#e0d060">+</text><path d="M1001 706 Q1010 693 1019 706 Z" fill="#a8a6a2"/><rect x="1006" y="701" width="9" height="1.5" fill="#e8e8e8"/><rect x="1007.5" y="142.5" width="17" height="17" rx="2" fill="#b8d890" stroke="#1a3050" stroke-width="1.4"/><rect x="1007.5" y="142.5" width="7" height="8" fill="#9cc8e8"/><rect x="1015" y="150" width="9" height="9" fill="#e8e890" stroke="#1a3050" stroke-width="1.2"/><rect x="959" y="938.5" width="64" height="24" rx="3.5" fill="#6e6c66" fill-opacity="0.78" stroke="#e0e0e0" stroke-opacity="0.8" stroke-width="1.5"/><circle cx="971" cy="951" r="6" fill="#b0b0b0" stroke="#ddd"/><path d="M968 949 h6 l-3 4z" fill="#fff"/><text x="984" y="955" font-family="Liberation Sans" font-weight="bold" font-size="10.5" fill="#e8e8e8" textLength="33" lengthAdjust="spacingAndGlyphs">Layers</text><rect x="351.5" y="972.5" width="118" height="15" rx="5" fill="#555" stroke="#ccc" stroke-width="1.2"/><rect x="356" y="977" width="76" height="6" fill="#000" stroke="#fff" stroke-width="1"/><rect x="370" y="977.5" width="10" height="5" fill="#555"/><rect x="393" y="977.5" width="10" height="5" fill="#555"/><rect x="416" y="977.5" width="10" height="5" fill="#555"/><text x="438" y="984" font-family="Liberation Sans" font-size="10" fill="#eee" textLength="28" lengthAdjust="spacingAndGlyphs">25 km</text><rect x="612" y="972.5" width="151" height="15" rx="5" fill="#555" stroke="#ccc" stroke-width="1.2"/><text x="637" y="984" font-family="Liberation Sans" font-size="10" fill="#eee" textLength="101" lengthAdjust="spacingAndGlyphs">50,962301°, 6,457997°</text><rect x="931" y="972.5" width="92" height="15" rx="5" fill="#555" stroke="#ccc" stroke-width="1.2"/><text x="935" y="984" font-family="Liberation Sans" font-size="10" fill="#eee" textLength="84" lengthAdjust="spacingAndGlyphs">PTV Group, HERE</text></g></svg>
<div style="position:absolute;left:1035px;top:142px;width:846px;height:420px;background:#fff"></div>
<div style="position:absolute;left:1035px;top:568px;width:846px;height:421px;background:#fff"></div>
<svg style="position:absolute;left:0;top:0" width="1920" height="1080"><polygon points="1188.4,251.9 1269.1000000000001,210.4 1274.1000000000001,210.4 1193.4,251.9" fill="#c8c8c8"/><rect x="1188.4" y="251.9" width="5" height="97.79999999999998" fill="#d3d3d3"/><rect x="1274.1000000000001" y="210.4" width="509.0999999999999" height="2.5" fill="#bdbdbd"/><polygon points="1779.2,210.4 1783.2,210.4 1783.2,308.2 1702.5,349.7 1698.5,349.7 1698.5,343.7 1779.2,304.2" fill="#a3a3a3"/><rect x="1193.4" y="343.7" width="505.0999999999999" height="6" fill="#d3d3d3"/><rect x="1274.1000000000001" y="212.4" width="505.0999999999999" height="91.79999999999998" fill="#d3d3d3"/><polygon points="1193.4,251.9 1274.1000000000001,212.4 1274.1000000000001,304.2 1193.4,343.7" fill="#a0a0a0"/><polygon points="1193.4,343.7 1274.1000000000001,304.2 1779.2,304.2 1698.5,343.7" fill="#b3b3b3"/><line x1="1274.1000000000001" y1="231.60000000000002" x2="1779.2" y2="231.60000000000002" stroke="#000" stroke-width="1.1"/><line x1="1193.4" y1="271.1" x2="1274.1000000000001" y2="231.60000000000002" stroke="#000" stroke-width="1.1"/><line x1="1358.1000000000001" y1="212.4" x2="1358.1000000000001" y2="304.2" stroke="#000" stroke-width="1.1"/><line x1="1442.1000000000001" y1="212.4" x2="1442.1000000000001" y2="304.2" stroke="#000" stroke-width="1.1"/><line x1="1526.1000000000001" y1="212.4" x2="1526.1000000000001" y2="304.2" stroke="#000" stroke-width="1.1"/><line x1="1610.1000000000001" y1="212.4" x2="1610.1000000000001" y2="304.2" stroke="#000" stroke-width="1.1"/><line x1="1694.5" y1="212.4" x2="1694.5" y2="304.2" stroke="#000" stroke-width="1.1"/><line x1="1779.2" y1="212.4" x2="1779.2" y2="304.2" stroke="#000" stroke-width="1.1"/><line x1="1274.1000000000001" y1="212.4" x2="1274.1000000000001" y2="304.2" stroke="#000" stroke-width="1.1"/><line x1="1779.2" y1="212.4" x2="1779.2" y2="304.2" stroke="#000" stroke-width="1.1"/><line x1="1193.4" y1="251.9" x2="1274.1000000000001" y2="212.4" stroke="#000" stroke-width="1.1"/><line x1="1193.4" y1="251.9" x2="1193.4" y2="352.7" stroke="#000" stroke-width="1.1"/><line x1="1193.4" y1="343.7" x2="1274.1000000000001" y2="304.2" stroke="#000" stroke-width="1.1"/><line x1="1274.1000000000001" y1="304.2" x2="1779.2" y2="304.2" stroke="#000" stroke-width="1.1"/><line x1="1181.4" y1="343.7" x2="1698.5" y2="343.7" stroke="#000" stroke-width="1.1"/><line x1="1779.2" y1="304.2" x2="1698.5" y2="343.7" stroke="#000" stroke-width="1.1"/><line x1="1698.5" y1="343.7" x2="1698.5" y2="352.7" stroke="#000" stroke-width="1.1"/><line x1="1181.4" y1="271.1" x2="1193.4" y2="271.1" stroke="#000" stroke-width="1.1"/><line x1="1277.4" y1="343.7" x2="1277.4" y2="351.7" stroke="#000" stroke-width="1.1"/><line x1="1277.4" y1="343.7" x2="1358.1000000000001" y2="304.2" stroke="#000" stroke-width="1.1"/><line x1="1361.4" y1="343.7" x2="1361.4" y2="351.7" stroke="#000" stroke-width="1.1"/><line x1="1361.4" y1="343.7" x2="1442.1000000000001" y2="304.2" stroke="#000" stroke-width="1.1"/><line x1="1445.4" y1="343.7" x2="1445.4" y2="351.7" stroke="#000" stroke-width="1.1"/><line x1="1445.4" y1="343.7" x2="1526.1000000000001" y2="304.2" stroke="#000" stroke-width="1.1"/><line x1="1529.4" y1="343.7" x2="1529.4" y2="351.7" stroke="#000" stroke-width="1.1"/><line x1="1529.4" y1="343.7" x2="1610.1000000000001" y2="304.2" stroke="#000" stroke-width="1.1"/><line x1="1613.8" y1="343.7" x2="1613.8" y2="351.7" stroke="#000" stroke-width="1.1"/><line x1="1613.8" y1="343.7" x2="1694.5" y2="304.2" stroke="#000" stroke-width="1.1"/><polygon points="1262,243.7 1307.5,221.7 1375.0,221.7 1329.5,243.7" fill="#000000"/><polygon points="1329.5,243.7 1375.0,221.7 1375.0,313.7 1329.5,335.7" fill="#000000"/><rect x="1262" y="243.7" width="67.5" height="92.0" fill="#000000"/><polygon points="1346,252.1 1391.5,230.1 1459.0,230.1 1413.5,252.1" fill="#0000d8"/><polygon points="1413.5,252.1 1459.0,230.1 1459.0,313.7 1413.5,335.7" fill="#0000c0"/><rect x="1346" y="252.1" width="67.5" height="83.6" fill="#0000ff"/><polygon points="1430,243.7 1475.5,221.7 1543.0,221.7 1497.5,243.7" fill="#d40000"/><polygon points="1497.5,243.7 1543.0,221.7 1543.0,313.7 1497.5,335.7" fill="#c00000"/><rect x="1430" y="243.7" width="67.5" height="92.0" fill="#ff0000"/><polygon points="1514,260.4 1559.5,238.39999999999998 1627.0,238.39999999999998 1581.5,260.4" fill="#007575"/><polygon points="1581.5,260.4 1627.0,238.39999999999998 1627.0,313.7 1581.5,335.7" fill="#006868"/><rect x="1514" y="260.4" width="67.5" height="75.30000000000001" fill="#008b8b"/><polygon points="1598,260.4 1643.5,238.39999999999998 1711.0,238.39999999999998 1665.5,260.4" fill="#9a700d"/><polygon points="1665.5,260.4 1711.0,238.39999999999998 1711.0,313.7 1665.5,335.7" fill="#8b6508"/><rect x="1598" y="260.4" width="67.5" height="75.30000000000001" fill="#b8860b"/></svg>
<div class="t" style="left:1158.90px;top:271.34px;font-size:12px;color:#000;transform:scaleX(1.0173);">500</div>
<div class="t" style="left:1173.00px;top:343.84px;font-size:12px;color:#000;transform:scaleX(0.9429);">0</div>
<div class="t" style="left:1439.00px;top:160.44px;font-size:12px;color:#000;transform:scaleX(0.9578);">Activity</div>
<div class="t" style="left:1372.00px;top:172.64px;font-size:12px;color:#000;transform:scaleX(0.9394);">5 clusters  ;  TargetActivity = 574,2</div>
<div class="t" style="left:1301.00px;top:185.14px;font-size:12px;color:#000;transform:scaleX(0.9240);">MinActivity = 515,0 (=89,7 %)  ;  MaxActivity = 636,0 (=110,8 %)</div>
<svg style="position:absolute;left:1271px;top:353.4px" width="12" height="145.70000000000005"><text transform="translate(9,143.70000000000005) rotate(-90)" font-family="Liberation Sans" font-size="8.5" fill="#000" textLength="143.70000000000005" lengthAdjust="spacingAndGlyphs">2cd5e471-9de6-46fe-94c9-1d600afaceb</text></svg>
<svg style="position:absolute;left:1355px;top:355px" width="12" height="143.39999999999998"><text transform="translate(9,141.39999999999998) rotate(-90)" font-family="Liberation Sans" font-size="8.5" fill="#000" textLength="141.39999999999998" lengthAdjust="spacingAndGlyphs">957d6a1d-6111-4ece-b25f-e54fe9002904</text></svg>
<svg style="position:absolute;left:1439px;top:355px" width="12" height="151"><text transform="translate(9,149) rotate(-90)" font-family="Liberation Sans" font-size="8.5" fill="#000" textLength="149" lengthAdjust="spacingAndGlyphs">9a6376a6-8658-4706-896b-e6938e6f617</text></svg>
<svg style="position:absolute;left:1523px;top:355px" width="12" height="139.5"><text transform="translate(9,137.5) rotate(-90)" font-family="Liberation Sans" font-size="8.5" fill="#000" textLength="137.5" lengthAdjust="spacingAndGlyphs">da061235-2cdf-4d4a-bcd2-0679effa5217</text></svg>
<svg style="position:absolute;left:1608px;top:355px" width="12" height="145"><text transform="translate(9,143) rotate(-90)" font-family="Liberation Sans" font-size="8.5" fill="#000" textLength="143" lengthAdjust="spacingAndGlyphs">ec12015b-bc60-411d-b2a3-724198354877</text></svg>
<svg style="position:absolute;left:0;top:0" width="1920" height="1080"><polygon points="1173.7,667.5 1256.7,624.3 1261.7,624.3 1178.7,667.5" fill="#c8c8c8"/><rect x="1173.7" y="667.5" width="5" height="108.79999999999995" fill="#d3d3d3"/><rect x="1261.7" y="624.3" width="525.8" height="2.5" fill="#bdbdbd"/><polygon points="1783.5,624.3 1787.5,624.3 1787.5,733.0999999999999 1704.5,776.3 1700.5,776.3 1700.5,770.3 1783.5,729.0999999999999" fill="#a3a3a3"/><rect x="1178.7" y="770.3" width="521.8" height="6" fill="#d3d3d3"/><rect x="1261.7" y="626.3" width="521.8" height="102.79999999999995" fill="#d3d3d3"/><polygon points="1178.7,667.5 1261.7,626.3 1261.7,729.0999999999999 1178.7,770.3" fill="#a0a0a0"/><polygon points="1178.7,770.3 1261.7,729.0999999999999 1783.5,729.0999999999999 1700.5,770.3" fill="#b3b3b3"/><line x1="1261.7" y1="651.3" x2="1783.5" y2="651.3" stroke="#000" stroke-width="1.1"/><line x1="1178.7" y1="692.5" x2="1261.7" y2="651.3" stroke="#000" stroke-width="1.1"/><line x1="1348.3" y1="626.3" x2="1348.3" y2="729.0999999999999" stroke="#000" stroke-width="1.1"/><line x1="1435.3" y1="626.3" x2="1435.3" y2="729.0999999999999" stroke="#000" stroke-width="1.1"/><line x1="1522.5" y1="626.3" x2="1522.5" y2="729.0999999999999" stroke="#000" stroke-width="1.1"/><line x1="1609.5" y1="626.3" x2="1609.5" y2="729.0999999999999" stroke="#000" stroke-width="1.1"/><line x1="1696.5" y1="626.3" x2="1696.5" y2="729.0999999999999" stroke="#000" stroke-width="1.1"/><line x1="1783.5" y1="626.3" x2="1783.5" y2="729.0999999999999" stroke="#000" stroke-width="1.1"/><line x1="1261.7" y1="626.3" x2="1261.7" y2="729.0999999999999" stroke="#000" stroke-width="1.1"/><line x1="1783.5" y1="626.3" x2="1783.5" y2="729.0999999999999" stroke="#000" stroke-width="1.1"/><line x1="1178.7" y1="667.5" x2="1261.7" y2="626.3" stroke="#000" stroke-width="1.1"/><line x1="1178.7" y1="667.5" x2="1178.7" y2="779.3" stroke="#000" stroke-width="1.1"/><line x1="1178.7" y1="770.3" x2="1261.7" y2="729.0999999999999" stroke="#000" stroke-width="1.1"/><line x1="1261.7" y1="729.0999999999999" x2="1783.5" y2="729.0999999999999" stroke="#000" stroke-width="1.1"/><line x1="1166.7" y1="770.3" x2="1700.5" y2="770.3" stroke="#000" stroke-width="1.1"/><line x1="1783.5" y1="729.0999999999999" x2="1700.5" y2="770.3" stroke="#000" stroke-width="1.1"/><line x1="1700.5" y1="770.3" x2="1700.5" y2="779.3" stroke="#000" stroke-width="1.1"/><line x1="1166.7" y1="692.5" x2="1178.7" y2="692.5" stroke="#000" stroke-width="1.1"/><line x1="1265.3" y1="770.3" x2="1265.3" y2="778.3" stroke="#000" stroke-width="1.1"/><line x1="1265.3" y1="770.3" x2="1348.3" y2="729.0999999999999" stroke="#000" stroke-width="1.1"/><line x1="1352.3" y1="770.3" x2="1352.3" y2="778.3" stroke="#000" stroke-width="1.1"/><line x1="1352.3" y1="770.3" x2="1435.3" y2="729.0999999999999" stroke="#000" stroke-width="1.1"/><line x1="1439.5" y1="770.3" x2="1439.5" y2="778.3" stroke="#000" stroke-width="1.1"/><line x1="1439.5" y1="770.3" x2="1522.5" y2="729.0999999999999" stroke="#000" stroke-width="1.1"/><line x1="1526.5" y1="770.3" x2="1526.5" y2="778.3" stroke="#000" stroke-width="1.1"/><line x1="1526.5" y1="770.3" x2="1609.5" y2="729.0999999999999" stroke="#000" stroke-width="1.1"/><line x1="1613.5" y1="770.3" x2="1613.5" y2="778.3" stroke="#000" stroke-width="1.1"/><line x1="1613.5" y1="770.3" x2="1696.5" y2="729.0999999999999" stroke="#000" stroke-width="1.1"/><polygon points="1248.7,666.2 1295.7,642.7 1365.7,642.7 1318.7,666.2" fill="#000000"/><polygon points="1318.7,666.2 1365.7,642.7 1365.7,738.3 1318.7,761.8" fill="#000000"/><rect x="1248.7" y="666.2" width="70.0" height="95.59999999999991" fill="#000000"/><polygon points="1335.8,667.4 1382.8,643.9 1452.8,643.9 1405.8,667.4" fill="#0000d8"/><polygon points="1405.8,667.4 1452.8,643.9 1452.8,738.3 1405.8,761.8" fill="#0000c0"/><rect x="1335.8" y="667.4" width="70.0" height="94.39999999999998" fill="#0000ff"/><polygon points="1422.9,659 1469.9,635.5 1539.9,635.5 1492.9,659" fill="#d40000"/><polygon points="1492.9,659 1539.9,635.5 1539.9,738.3 1492.9,761.8" fill="#c00000"/><rect x="1422.9" y="659" width="70.0" height="102.79999999999995" fill="#ff0000"/><polygon points="1510,674.6 1557,651.1 1627,651.1 1580,674.6" fill="#007575"/><polygon points="1580,674.6 1627,651.1 1627,738.3 1580,761.8" fill="#006868"/><rect x="1510" y="674.6" width="70" height="87.19999999999993" fill="#008b8b"/><polygon points="1597,674.6 1644,651.1 1714,651.1 1667,674.6" fill="#9a700d"/><polygon points="1667,674.6 1714,651.1 1714,738.3 1667,761.8" fill="#8b6508"/><rect x="1597" y="674.6" width="70" height="87.19999999999993" fill="#b8860b"/></svg>
<div class="t" style="left:1150.00px;top:692.54px;font-size:12px;color:#000;transform:scaleX(1.0385);">50</div>
<div class="t" style="left:1157.50px;top:770.84px;font-size:12px;color:#000;transform:scaleX(0.9429);">0</div>
<div class="t" style="left:1443.20px;top:586.34px;font-size:12px;color:#000;transform:scaleX(0.8750);">Count</div>
<div class="t" style="left:1391.00px;top:598.84px;font-size:12px;color:#000;transform:scaleX(0.9240);">5 clusters, Average of 60,0</div>
<svg style="position:absolute;left:1259px;top:780px" width="12" height="144"><text transform="translate(9,142) rotate(-90)" font-family="Liberation Sans" font-size="8.5" fill="#000" textLength="142" lengthAdjust="spacingAndGlyphs">2cd5e471-9de6-46fe-94c9-1d600afaceb</text></svg>
<svg style="position:absolute;left:1346px;top:780px" width="12" height="139"><text transform="translate(9,137) rotate(-90)" font-family="Liberation Sans" font-size="8.5" fill="#000" textLength="137" lengthAdjust="spacingAndGlyphs">957d6a1d-6111-4ece-b25f-e54fe9002904</text></svg>
<svg style="position:absolute;left:1433px;top:780px" width="12" height="150"><text transform="translate(9,148) rotate(-90)" font-family="Liberation Sans" font-size="8.5" fill="#000" textLength="148" lengthAdjust="spacingAndGlyphs">9a6376a6-8658-4706-896b-e6938e6f617</text></svg>
<svg style="position:absolute;left:1520px;top:780px" width="12" height="134"><text transform="translate(9,132) rotate(-90)" font-family="Liberation Sans" font-size="8.5" fill="#000" textLength="132" lengthAdjust="spacingAndGlyphs">da061235-2cdf-4d4a-bcd2-0679effa5217</text></svg>
<svg style="position:absolute;left:1607.5px;top:780px" width="12" height="144"><text transform="translate(9,142) rotate(-90)" font-family="Liberation Sans" font-size="8.5" fill="#000" textLength="142" lengthAdjust="spacingAndGlyphs">ec12015b-bc60-411d-b2a3-724198354877</text></svg>
<svg style="position:absolute;left:0;top:1032px" width="1920" height="48"><defs><linearGradient id="tbg" x1="0" x2="1" y1="0" y2="0"><stop offset="0" stop-color="#d9d9d9"/><stop offset="0.08" stop-color="#d9d9d9"/><stop offset="0.13" stop-color="#dbe6f2"/><stop offset="0.37" stop-color="#dce8f5"/><stop offset="0.42" stop-color="#f3e6d6"/><stop offset="0.6" stop-color="#f5e6d5"/><stop offset="0.75" stop-color="#ecdcd2"/><stop offset="0.85" stop-color="#dadada"/><stop offset="1" stop-color="#d9d9d9"/></linearGradient></defs><rect width="1920" height="48" fill="url(#tbg)"/><rect width="1920" height="1" fill="#d8d4d0"/><rect x="409" y="3" width="40" height="41" rx="4" fill="#f6dde0"/><rect x="806" y="3" width="38" height="41" rx="4" fill="#f7f3ee"/><g fill="#1b8fe6"><rect x="21" y="12" width="11" height="11"/><rect x="33" y="12" width="11" height="11"/><rect x="21" y="24" width="11" height="11"/><rect x="33" y="24" width="11" height="11"/></g><circle cx="79" cy="20" r="7.5" fill="none" stroke="#1a1a1a" stroke-width="2.2"/><line x1="73.5" y1="26" x2="68" y2="32" stroke="#1a1a1a" stroke-width="2.5"/><rect x="113" y="15" width="13" height="13" fill="#e8e8e8" stroke="#bbb"/><rect x="109" y="20" width="13" height="12" fill="#222"/><circle cx="162" cy="24" r="8" fill="#f5a623"/><ellipse cx="168" cy="29" rx="9" ry="5" fill="#8ab4e8"/><rect x="163" y="8" width="22" height="13" rx="6.5" fill="#f8f8f8"/><text x="167" y="18" font-family="Liberation Sans" font-size="10" fill="#222">14°</text><circle cx="208.5" cy="23.5" r="9.5" fill="#6264d4"/><rect x="203" y="19" width="9" height="9" rx="1.5" fill="#fff"/><path d="M212 22 l4 -3 v9 l-4 -3z" fill="#fff"/><path d="M243 15 h8 l2 3 h11 v15 h-21z" fill="#f3c23c"/><rect x="243" y="20" width="21" height="13" fill="#ffd75a"/><rect x="248" y="28" width="11" height="4" rx="1" fill="#1e7cd6"/><rect x="289" y="14" width="17" height="18" rx="2" fill="#1172d4"/><rect x="285" y="18" width="11" height="11" rx="1.5" fill="#0a5cb0"/><circle cx="290.5" cy="23.5" r="3.2" fill="none" stroke="#fff" stroke-width="1.6"/><rect x="333" y="14" width="17" height="18" rx="2" fill="#1b8a4a"/><rect x="329" y="18" width="11" height="11" rx="1.5" fill="#107c41"/><path d="M331.5 20.5 l6 6 M337.5 20.5 l-6 6" stroke="#fff" stroke-width="1.6"/><circle cx="387" cy="23.5" r="9.5" fill="#e8673c"/><rect x="372" y="18" width="11" height="11" rx="1.5" fill="#c43e1c"/><text x="374.5" y="27" font-family="Liberation Sans" font-weight="bold" font-size="9" fill="#fff">P</text><circle cx="433" cy="21" r="7" fill="#7b83eb"/><rect x="418" y="17" width="12" height="12" rx="1.5" fill="#4b53bc"/><text x="420.5" y="27" font-family="Liberation Sans" font-weight="bold" font-size="9.5" fill="#fff">T</text><circle cx="439" cy="14" r="6" fill="#c4314b"/><text x="436" y="18" font-family="Liberation Sans" font-weight="bold" font-size="9" fill="#fff">4</text><path d="M464 19 l5 4.5 l-5 4.5 z" fill="#6b3ec9"/><path d="M478 13 l4 2 v17 l-4 2 l-9 -10.5 z" fill="#9b6ee8"/><path d="M464 18 l14 -5 v4 l-10 6.5 l10 6.5 v4 l-14 -5z" fill="#7a4fd6"/><circle cx="516.5" cy="23.5" r="10" fill="#e33b2e"/><path d="M516.5 23.5 L508 28.5 A10 10 0 0 0 516.5 33.5 Z" fill="#2aa24a"/><path d="M516.5 23.5 L525 28.5 A10 10 0 0 1 511 32 Z" fill="#2aa24a"/><path d="M516.5 23.5 L526.5 23 A10 10 0 0 1 520 33 Z" fill="#f8c01a"/><circle cx="516.5" cy="23.5" r="4.6" fill="#fff"/><circle cx="516.5" cy="23.5" r="3.6" fill="#1a73e8"/><circle cx="557" cy="21" r="6.5" fill="none" stroke="#a8bccf" stroke-width="3.5" stroke-dasharray="2.6 1.8"/><circle cx="557" cy="21" r="3.5" fill="none" stroke="#c8d4e0" stroke-width="1.5"/><circle cx="565" cy="29" r="3.5" fill="none" stroke="#a8bccf" stroke-width="2.5" stroke-dasharray="1.8 1.2"/><circle cx="604.5" cy="23.5" r="10.5" fill="#1db954"/><path d="M604.5 24 v-7 M604.5 24 l-6 4 M604.5 24 l6 4" stroke="#fff" stroke-width="2"/><path d="M649 13 l10.5 10.5 l-10.5 10.5 l-10.5 -10.5z" fill="#2bb24c"/><circle cx="692.5" cy="23.5" r="10.5" fill="#e0b000" stroke="#2a2a00" stroke-width="1.5"/><text x="685" y="28" font-family="Liberation Sans" font-weight="bold" font-style="italic" font-size="10" fill="#222">UE</text><path d="M736 12 l9 3 v8 q0 8 -9 11 q-9 -3 -9 -11 v-8z" fill="#2a6fd0" stroke="#b8d0f0" stroke-width="1"/><rect x="731" y="19" width="10" height="7" fill="#fff"/><ellipse cx="779" cy="23.5" rx="10" ry="9" fill="#5aa8e8"/><circle cx="775" cy="20" r="1.8" fill="#e84040"/><circle cx="779" cy="18" r="1.8" fill="#f0c000"/><circle cx="774" cy="25" r="1.8" fill="#40b040"/><rect x="785" y="14" width="2.5" height="18" fill="#a06a30"/><rect x="814" y="13" width="11" height="11" fill="none" stroke="#d83030" stroke-width="2" stroke-dasharray="3 2"/><path d="M821 20 l10 10 M831 20 l-10 10" stroke="#777" stroke-width="1.6"/><circle cx="832" cy="20" r="2" fill="#3a8ee0"/><circle cx="820" cy="31" r="2" fill="#3a8ee0"/><rect x="858" y="14" width="21" height="18" fill="#f4f6fa" stroke="#6a7a90" stroke-width="1.2"/><rect x="864" y="16" width="10" height="14" fill="#1e7ad8"/><rect x="250" y="40" width="6" height="3" rx="1.5" fill="#8a8a8a"/><rect x="293.5" y="40" width="6" height="3" rx="1.5" fill="#8a8a8a"/><rect x="469.5" y="40" width="6" height="3" rx="1.5" fill="#8a8a8a"/><rect x="513.5" y="40" width="6" height="3" rx="1.5" fill="#8a8a8a"/><rect x="777.5" y="40" width="6" height="3" rx="1.5" fill="#8a8a8a"/><rect x="865.5" y="40" width="6" height="3" rx="1.5" fill="#8a8a8a"/><rect x="426" y="40" width="6" height="3" rx="1.5" fill="#c4314b"/><rect x="816" y="40" width="16" height="3" rx="1.5" fill="#0067c0"/><path d="M1653 28 l6 -6 l6 6" fill="none" stroke="#1a1a1a" stroke-width="1.3"/><path d="M1675.5 28.5 Q1674.5 24 1679 23.5 Q1680.5 19 1685 19.5 Q1689.5 20 1690 24 Q1692 25 1691 28.5 Z" fill="#0f6cc8"/><path d="M1675.5 28.5 Q1676 25 1681 25.5 Q1684 23 1688 25 Q1692 25.5 1691 28.5 Z" fill="#28a8ea"/><rect x="1699" y="18.5" width="15.5" height="11" fill="#1a1a1a" stroke="#fff" stroke-width="0.6"/><circle cx="1703.5" cy="22" r="1.6" fill="#fff"/><rect x="1701" y="24.5" width="5" height="3" fill="#fff"/><rect x="1708" y="21" width="5" height="1.2" fill="#fff"/><rect x="1708" y="23.5" width="5" height="1.2" fill="#fff"/><rect x="1708" y="26" width="5" height="1.2" fill="#fff"/><text x="1729.7" y="28.8" font-family="Liberation Sans" font-size="11.5" fill="#1a1a1a" textLength="22.3" lengthAdjust="spacingAndGlyphs">DEU</text><g fill="none" stroke="#1a1a1a" stroke-width="1.1"><rect x="1771" y="17" width="13" height="10"/><path d="M1777 27 v3 M1774 31 h6"/><rect x="1783" y="16" width="3.5" height="6" rx="1.5"/><path d="M1785 22 v9"/></g><g fill="none" stroke="#1a1a1a" stroke-width="1.1"><path d="M1796 21 h3 l4 -4 v14 l-4 -4 h-3z"/><path d="M1805.5 20.5 q2 3.5 0 7 M1808 18.5 q3.5 5.5 0 11"/></g><g fill="#1a1a1a"><rect x="1824" y="19" width="10" height="9"/><rect x="1834" y="22" width="2" height="3"/><path d="M1819 17 v4 M1822 17 v4" stroke="#1a1a1a" stroke-width="1"/><rect x="1818.5" y="20.5" width="5" height="4"/><rect x="1820.5" y="24" width="1.2" height="6"/></g><text x="1904" y="19.7" font-family="Liberation Sans" font-size="11.5" fill="#1a1a1a" text-anchor="end" textLength="26.5" lengthAdjust="spacingAndGlyphs">12:46</text><text x="1904" y="35.5" font-family="Liberation Sans" font-size="11.5" fill="#1a1a1a" text-anchor="end" textLength="53.2" lengthAdjust="spacingAndGlyphs">02.11.2022</text></svg>
</body></html>
